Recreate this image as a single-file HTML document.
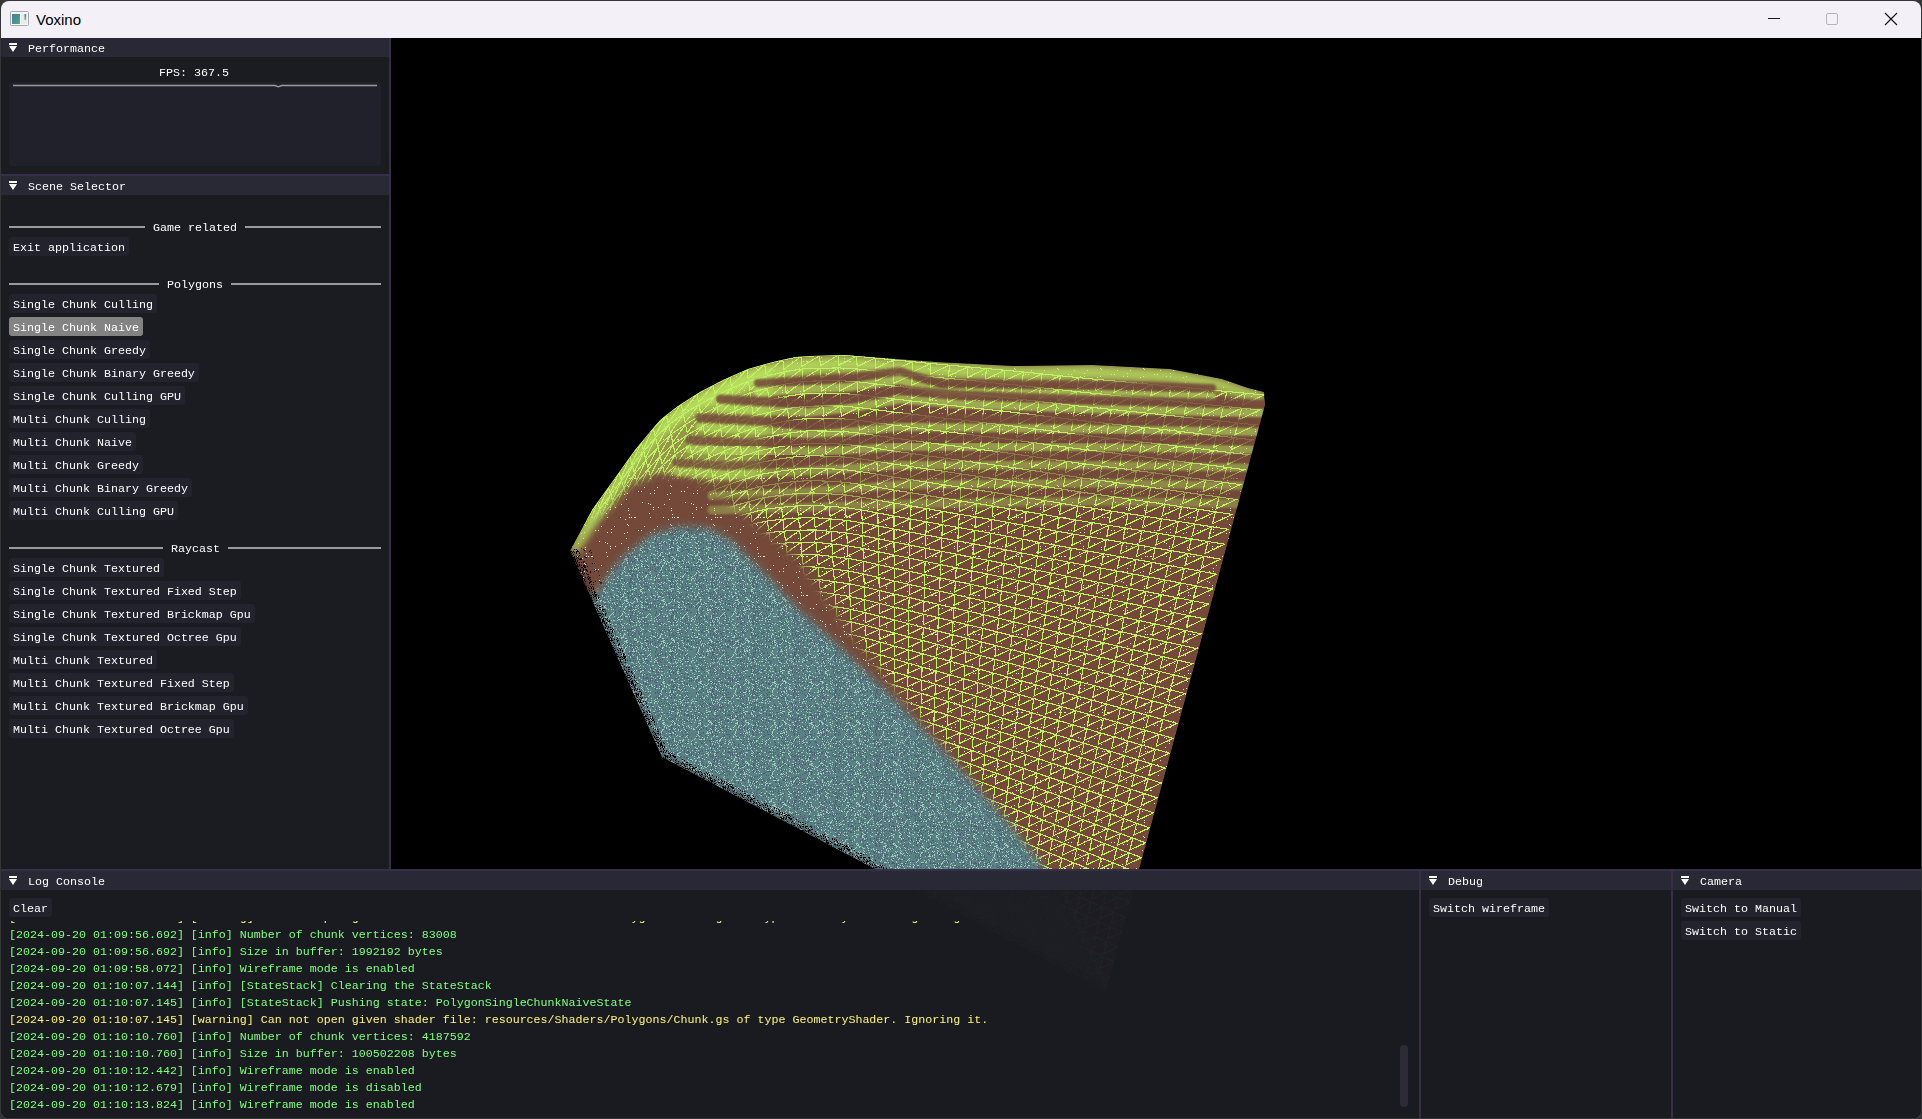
<!DOCTYPE html>
<html><head><meta charset="utf-8"><style>
html,body{margin:0;padding:0;}
body{width:1922px;height:1119px;position:relative;overflow:hidden;background:#353638;font-family:"Liberation Mono",monospace;font-size:11.66px;}
.r{position:absolute;}
.t{position:absolute;white-space:pre;line-height:13px;will-change:transform;}
</style></head><body>
<div class="r" style="left:1px;top:38px;width:1920px;height:1080px;background:#000;border-radius:0 0 8px 8px;overflow:hidden;"></div>
<svg class="r" style="left:0;top:0" width="1922" height="1119" viewBox="0 0 1922 1119">
<defs>
<clipPath id="sil"><polygon points="570.0,551.0 592.0,510.0 610.0,485.0 635.0,450.0 660.0,420.0 678.0,406.0 700.0,392.0 723.0,380.0 748.0,369.0 773.0,362.0 795.0,357.0 811.0,356.0 845.0,355.0 884.0,358.0 936.0,362.0 1014.0,366.0 1092.0,365.0 1170.0,369.0 1222.0,379.0 1248.0,388.0 1264.0,392.0 1265.0,405.0 1106.0,992.0 915.0,890.0 662.0,757.0"/></clipPath>
<filter id="b6" x="-20%" y="-20%" width="140%" height="140%"><feGaussianBlur stdDeviation="7"/></filter>
<filter id="b1" x="-5%" y="-50%" width="110%" height="200%"><feGaussianBlur stdDeviation="1.2"/></filter>
<filter id="b3" x="-20%" y="-20%" width="140%" height="140%"><feGaussianBlur stdDeviation="4"/></filter>
<pattern id="spB" patternUnits="userSpaceOnUse" width="37" height="41"><rect x="20" y="9" width="1" height="1" fill="#a0ccbc"/><rect x="25" y="3" width="1" height="1" fill="#a0ccbc"/><rect x="4" y="34" width="1" height="1" fill="#a0ccbc"/><rect x="6" y="23" width="1" height="1" fill="#a0ccbc"/><rect x="3" y="32" width="1" height="1" fill="#a0ccbc"/><rect x="13" y="2" width="1" height="1" fill="#a0ccbc"/><rect x="5" y="27" width="1" height="1" fill="#a0ccbc"/><rect x="26" y="4" width="1" height="1" fill="#a0ccbc"/><rect x="15" y="5" width="1" height="1" fill="#a0ccbc"/><rect x="35" y="27" width="1" height="1" fill="#a0ccbc"/><rect x="3" y="36" width="1" height="1" fill="#a0ccbc"/><rect x="7" y="14" width="1" height="1" fill="#a0ccbc"/><rect x="3" y="36" width="1" height="1" fill="#a0ccbc"/><rect x="25" y="3" width="1" height="1" fill="#a0ccbc"/><rect x="14" y="2" width="1" height="1" fill="#a0ccbc"/><rect x="35" y="8" width="1" height="1" fill="#a0ccbc"/><rect x="18" y="26" width="1" height="1" fill="#a0ccbc"/><rect x="9" y="34" width="1" height="1" fill="#a0ccbc"/><rect x="7" y="36" width="1" height="1" fill="#a0ccbc"/><rect x="19" y="35" width="1" height="1" fill="#a0ccbc"/><rect x="11" y="6" width="1" height="1" fill="#a0ccbc"/><rect x="36" y="40" width="1" height="1" fill="#a0ccbc"/><rect x="12" y="23" width="1" height="1" fill="#a0ccbc"/><rect x="6" y="35" width="1" height="1" fill="#a0ccbc"/><rect x="4" y="36" width="1" height="1" fill="#a0ccbc"/><rect x="3" y="39" width="1" height="1" fill="#a0ccbc"/><rect x="13" y="31" width="1" height="1" fill="#a0ccbc"/><rect x="34" y="27" width="1" height="1" fill="#a0ccbc"/><rect x="20" y="29" width="1" height="1" fill="#a0ccbc"/><rect x="29" y="23" width="1" height="1" fill="#a0ccbc"/><rect x="19" y="15" width="1" height="1" fill="#a0ccbc"/><rect x="11" y="15" width="1" height="1" fill="#a0ccbc"/><rect x="5" y="36" width="1" height="1" fill="#a0ccbc"/><rect x="19" y="33" width="1" height="1" fill="#a0ccbc"/><rect x="31" y="21" width="1" height="1" fill="#a0ccbc"/><rect x="28" y="18" width="1" height="1" fill="#a0ccbc"/><rect x="4" y="7" width="1" height="1" fill="#a0ccbc"/><rect x="32" y="26" width="1" height="1" fill="#a0ccbc"/><rect x="10" y="21" width="1" height="1" fill="#a0ccbc"/><rect x="9" y="31" width="1" height="1" fill="#a0ccbc"/><rect x="26" y="2" width="1" height="1" fill="#a0ccbc"/><rect x="4" y="35" width="1" height="1" fill="#a0ccbc"/><rect x="36" y="20" width="1" height="1" fill="#a0ccbc"/><rect x="21" y="22" width="1" height="1" fill="#a0ccbc"/><rect x="31" y="37" width="1" height="1" fill="#a0ccbc"/><rect x="29" y="4" width="1" height="1" fill="#a0ccbc"/><rect x="5" y="17" width="1" height="1" fill="#a0ccbc"/><rect x="30" y="4" width="1" height="1" fill="#a0ccbc"/><rect x="3" y="19" width="1" height="1" fill="#a0ccbc"/><rect x="36" y="28" width="1" height="1" fill="#a0ccbc"/><rect x="18" y="24" width="1" height="1" fill="#a0ccbc"/><rect x="22" y="1" width="1" height="1" fill="#a0ccbc"/><rect x="29" y="22" width="1" height="1" fill="#a0ccbc"/><rect x="10" y="39" width="1" height="1" fill="#a0ccbc"/><rect x="7" y="31" width="1" height="1" fill="#a0ccbc"/><rect x="3" y="13" width="1" height="1" fill="#a0ccbc"/><rect x="18" y="8" width="1" height="1" fill="#a0ccbc"/><rect x="15" y="25" width="1" height="1" fill="#a0ccbc"/><rect x="25" y="31" width="1" height="1" fill="#a0ccbc"/><rect x="5" y="10" width="1" height="1" fill="#a0ccbc"/><rect x="28" y="25" width="1" height="1" fill="#a0ccbc"/><rect x="35" y="17" width="1" height="1" fill="#a0ccbc"/><rect x="8" y="27" width="1" height="1" fill="#a0ccbc"/><rect x="35" y="17" width="1" height="1" fill="#a0ccbc"/><rect x="26" y="22" width="1" height="1" fill="#a0ccbc"/><rect x="24" y="14" width="1" height="1" fill="#a0ccbc"/><rect x="9" y="5" width="1" height="1" fill="#a0ccbc"/><rect x="11" y="9" width="1" height="1" fill="#a0ccbc"/><rect x="14" y="14" width="1" height="1" fill="#a0ccbc"/><rect x="0" y="31" width="1" height="1" fill="#a0ccbc"/><rect x="11" y="16" width="1" height="1" fill="#a0ccbc"/><rect x="18" y="0" width="1" height="1" fill="#a0ccbc"/><rect x="9" y="26" width="1" height="1" fill="#a0ccbc"/><rect x="34" y="23" width="1" height="1" fill="#a0ccbc"/><rect x="36" y="20" width="1" height="1" fill="#a0ccbc"/><rect x="8" y="32" width="1" height="1" fill="#a0ccbc"/><rect x="3" y="29" width="1" height="1" fill="#a0ccbc"/><rect x="35" y="25" width="1" height="1" fill="#a0ccbc"/><rect x="25" y="25" width="1" height="1" fill="#a0ccbc"/><rect x="25" y="6" width="1" height="1" fill="#a0ccbc"/><rect x="30" y="40" width="1" height="1" fill="#a0ccbc"/><rect x="25" y="3" width="1" height="1" fill="#a0ccbc"/><rect x="12" y="4" width="1" height="1" fill="#a0ccbc"/><rect x="13" y="28" width="1" height="1" fill="#a0ccbc"/><rect x="10" y="7" width="1" height="1" fill="#a0ccbc"/><rect x="21" y="38" width="1" height="1" fill="#a0ccbc"/><rect x="3" y="6" width="1" height="1" fill="#a0ccbc"/><rect x="0" y="36" width="1" height="1" fill="#a0ccbc"/><rect x="9" y="34" width="1" height="1" fill="#a0ccbc"/><rect x="6" y="23" width="1" height="1" fill="#a0ccbc"/><rect x="1" y="4" width="1" height="1" fill="#a0ccbc"/><rect x="13" y="39" width="1" height="1" fill="#a0ccbc"/><rect x="24" y="9" width="1" height="1" fill="#a0ccbc"/><rect x="16" y="22" width="1" height="1" fill="#a0ccbc"/><rect x="23" y="30" width="1" height="1" fill="#a0ccbc"/><rect x="7" y="7" width="1" height="1" fill="#a0ccbc"/><rect x="31" y="29" width="1" height="1" fill="#a0ccbc"/><rect x="30" y="30" width="1" height="1" fill="#a0ccbc"/><rect x="19" y="5" width="1" height="1" fill="#a0ccbc"/><rect x="9" y="6" width="1" height="1" fill="#a0ccbc"/><rect x="21" y="16" width="1" height="1" fill="#a0ccbc"/><rect x="30" y="10" width="1" height="1" fill="#a0ccbc"/><rect x="33" y="1" width="1" height="1" fill="#a0ccbc"/><rect x="13" y="33" width="1" height="1" fill="#a0ccbc"/><rect x="23" y="9" width="1" height="1" fill="#a0ccbc"/><rect x="34" y="1" width="1" height="1" fill="#a0ccbc"/><rect x="33" y="19" width="1" height="1" fill="#a0ccbc"/><rect x="5" y="16" width="1" height="1" fill="#a0ccbc"/><rect x="33" y="23" width="1" height="1" fill="#a0ccbc"/><rect x="10" y="22" width="1" height="1" fill="#a0ccbc"/><rect x="14" y="34" width="1" height="1" fill="#a0ccbc"/><rect x="34" y="32" width="1" height="1" fill="#a0ccbc"/><rect x="21" y="40" width="1" height="1" fill="#a0ccbc"/><rect x="14" y="39" width="1" height="1" fill="#a0ccbc"/><rect x="12" y="15" width="1" height="1" fill="#a0ccbc"/><rect x="25" y="14" width="1" height="1" fill="#a0ccbc"/><rect x="12" y="33" width="1" height="1" fill="#a0ccbc"/><rect x="31" y="22" width="1" height="1" fill="#a0ccbc"/><rect x="1" y="1" width="1" height="1" fill="#a0ccbc"/><rect x="17" y="30" width="1" height="1" fill="#a0ccbc"/><rect x="16" y="12" width="1" height="1" fill="#a0ccbc"/><rect x="22" y="28" width="1" height="1" fill="#a0ccbc"/><rect x="22" y="23" width="1" height="1" fill="#a0ccbc"/><rect x="5" y="14" width="1" height="1" fill="#a0ccbc"/><rect x="6" y="14" width="1" height="1" fill="#a0ccbc"/><rect x="30" y="12" width="1" height="1" fill="#a0ccbc"/><rect x="21" y="13" width="1" height="1" fill="#a0ccbc"/><rect x="30" y="39" width="1" height="1" fill="#a0ccbc"/><rect x="0" y="30" width="1" height="1" fill="#a0ccbc"/><rect x="22" y="5" width="1" height="1" fill="#a0ccbc"/><rect x="7" y="24" width="1" height="1" fill="#a0ccbc"/><rect x="12" y="30" width="1" height="1" fill="#a0ccbc"/><rect x="11" y="27" width="1" height="1" fill="#a0ccbc"/><rect x="21" y="5" width="1" height="1" fill="#a0ccbc"/><rect x="25" y="29" width="1" height="1" fill="#a0ccbc"/><rect x="25" y="5" width="1" height="1" fill="#a0ccbc"/><rect x="10" y="10" width="1" height="1" fill="#a0ccbc"/><rect x="8" y="1" width="1" height="1" fill="#a0ccbc"/><rect x="9" y="37" width="1" height="1" fill="#a0ccbc"/><rect x="29" y="9" width="1" height="1" fill="#a0ccbc"/><rect x="30" y="22" width="1" height="1" fill="#a0ccbc"/><rect x="9" y="35" width="1" height="1" fill="#a0ccbc"/><rect x="35" y="8" width="1" height="1" fill="#a0ccbc"/><rect x="1" y="0" width="1" height="1" fill="#a0ccbc"/><rect x="6" y="33" width="1" height="1" fill="#a0ccbc"/><rect x="8" y="27" width="1" height="1" fill="#a0ccbc"/><rect x="12" y="13" width="1" height="1" fill="#a0ccbc"/><rect x="1" y="16" width="1" height="1" fill="#a0ccbc"/><rect x="13" y="18" width="1" height="1" fill="#a0ccbc"/><rect x="32" y="15" width="1" height="1" fill="#a0ccbc"/><rect x="20" y="16" width="1" height="1" fill="#a0ccbc"/><rect x="34" y="26" width="1" height="1" fill="#a0ccbc"/><rect x="8" y="3" width="1" height="1" fill="#a0ccbc"/><rect x="22" y="29" width="1" height="1" fill="#a0ccbc"/><rect x="33" y="26" width="1" height="1" fill="#a0ccbc"/><rect x="32" y="8" width="1" height="1" fill="#a0ccbc"/><rect x="34" y="9" width="1" height="1" fill="#a0ccbc"/><rect x="33" y="32" width="1" height="1" fill="#a0ccbc"/><rect x="1" y="28" width="1" height="1" fill="#a0ccbc"/><rect x="11" y="38" width="1" height="1" fill="#a0ccbc"/><rect x="0" y="9" width="1" height="1" fill="#a0ccbc"/><rect x="11" y="9" width="1" height="1" fill="#a0ccbc"/><rect x="30" y="39" width="1" height="1" fill="#a0ccbc"/><rect x="7" y="35" width="1" height="1" fill="#a0ccbc"/><rect x="3" y="20" width="1" height="1" fill="#a0ccbc"/><rect x="33" y="33" width="1" height="1" fill="#a0ccbc"/><rect x="35" y="30" width="1" height="1" fill="#a0ccbc"/><rect x="6" y="35" width="1" height="1" fill="#a0ccbc"/><rect x="3" y="15" width="1" height="1" fill="#a0ccbc"/><rect x="12" y="17" width="1" height="1" fill="#a0ccbc"/><rect x="2" y="6" width="1" height="1" fill="#a0ccbc"/><rect x="32" y="28" width="1" height="1" fill="#a0ccbc"/><rect x="35" y="1" width="1" height="1" fill="#a0ccbc"/><rect x="4" y="28" width="1" height="1" fill="#a0ccbc"/><rect x="20" y="39" width="1" height="1" fill="#a0ccbc"/><rect x="32" y="38" width="1" height="1" fill="#a0ccbc"/><rect x="32" y="12" width="1" height="1" fill="#a0ccbc"/><rect x="17" y="28" width="1" height="1" fill="#a0ccbc"/><rect x="32" y="34" width="1" height="1" fill="#a0ccbc"/><rect x="30" y="32" width="1" height="1" fill="#a0ccbc"/><rect x="15" y="33" width="1" height="1" fill="#a0ccbc"/><rect x="16" y="35" width="1" height="1" fill="#a0ccbc"/><rect x="12" y="28" width="1" height="1" fill="#a0ccbc"/><rect x="8" y="26" width="1" height="1" fill="#a0ccbc"/><rect x="7" y="25" width="1" height="1" fill="#a0ccbc"/><rect x="28" y="20" width="1" height="1" fill="#a0ccbc"/><rect x="4" y="15" width="1" height="1" fill="#a0ccbc"/><rect x="27" y="4" width="1" height="1" fill="#a0ccbc"/><rect x="13" y="19" width="1" height="1" fill="#a0ccbc"/><rect x="7" y="9" width="1" height="1" fill="#a0ccbc"/><rect x="23" y="9" width="1" height="1" fill="#a0ccbc"/><rect x="16" y="8" width="1" height="1" fill="#a0ccbc"/><rect x="29" y="14" width="1" height="1" fill="#a0ccbc"/><rect x="6" y="25" width="1" height="1" fill="#a0ccbc"/><rect x="31" y="10" width="1" height="1" fill="#a0ccbc"/><rect x="14" y="10" width="1" height="1" fill="#a0ccbc"/><rect x="27" y="32" width="1" height="1" fill="#a0ccbc"/><rect x="25" y="21" width="1" height="1" fill="#a0ccbc"/><rect x="26" y="12" width="1" height="1" fill="#a0ccbc"/><rect x="22" y="20" width="1" height="1" fill="#a0ccbc"/><rect x="5" y="23" width="1" height="1" fill="#a0ccbc"/><rect x="1" y="21" width="1" height="1" fill="#a0ccbc"/><rect x="35" y="29" width="1" height="1" fill="#a0ccbc"/><rect x="28" y="1" width="1" height="1" fill="#a0ccbc"/><rect x="24" y="21" width="1" height="1" fill="#a0ccbc"/><rect x="33" y="39" width="1" height="1" fill="#a0ccbc"/><rect x="18" y="32" width="1" height="1" fill="#a0ccbc"/><rect x="4" y="7" width="1" height="1" fill="#a0ccbc"/><rect x="14" y="6" width="1" height="1" fill="#a0ccbc"/><rect x="5" y="16" width="1" height="1" fill="#a0ccbc"/><rect x="17" y="2" width="1" height="1" fill="#a0ccbc"/><rect x="11" y="17" width="1" height="1" fill="#a0ccbc"/><rect x="8" y="27" width="1" height="1" fill="#a0ccbc"/><rect x="16" y="25" width="1" height="1" fill="#a0ccbc"/><rect x="9" y="34" width="1" height="1" fill="#a0ccbc"/><rect x="32" y="36" width="1" height="1" fill="#a0ccbc"/><rect x="31" y="20" width="1" height="1" fill="#a0ccbc"/><rect x="5" y="17" width="1" height="1" fill="#a0ccbc"/><rect x="3" y="11" width="1" height="1" fill="#a0ccbc"/><rect x="27" y="4" width="1" height="1" fill="#a0ccbc"/><rect x="17" y="1" width="1" height="1" fill="#a0ccbc"/><rect x="5" y="16" width="1" height="1" fill="#a0ccbc"/><rect x="5" y="38" width="1" height="1" fill="#a0ccbc"/><rect x="14" y="4" width="1" height="1" fill="#a0ccbc"/><rect x="16" y="7" width="1" height="1" fill="#a0ccbc"/><rect x="29" y="0" width="1" height="1" fill="#a0ccbc"/><rect x="21" y="35" width="1" height="1" fill="#a0ccbc"/><rect x="26" y="17" width="1" height="1" fill="#a0ccbc"/><rect x="8" y="2" width="1" height="1" fill="#a0ccbc"/><rect x="33" y="15" width="1" height="1" fill="#a0ccbc"/><rect x="7" y="10" width="1" height="1" fill="#a0ccbc"/><rect x="16" y="3" width="1" height="1" fill="#a0ccbc"/><rect x="11" y="12" width="1" height="1" fill="#a0ccbc"/><rect x="19" y="40" width="1" height="1" fill="#a0ccbc"/><rect x="19" y="33" width="1" height="1" fill="#a0ccbc"/><rect x="13" y="18" width="1" height="1" fill="#a0ccbc"/><rect x="28" y="32" width="1" height="1" fill="#a0ccbc"/><rect x="11" y="17" width="1" height="1" fill="#a0ccbc"/><rect x="22" y="1" width="1" height="1" fill="#a0ccbc"/><rect x="16" y="2" width="1" height="1" fill="#a0ccbc"/><rect x="0" y="1" width="1" height="1" fill="#a0ccbc"/><rect x="32" y="35" width="1" height="1" fill="#a0ccbc"/><rect x="12" y="32" width="1" height="1" fill="#a0ccbc"/><rect x="30" y="15" width="1" height="1" fill="#a0ccbc"/><rect x="28" y="6" width="1" height="1" fill="#a0ccbc"/><rect x="27" y="31" width="1" height="1" fill="#a0ccbc"/><rect x="34" y="25" width="1" height="1" fill="#a0ccbc"/><rect x="32" y="19" width="1" height="1" fill="#a0ccbc"/><rect x="13" y="14" width="1" height="1" fill="#a0ccbc"/><rect x="21" y="12" width="1" height="1" fill="#a0ccbc"/><rect x="8" y="25" width="1" height="1" fill="#a0ccbc"/><rect x="22" y="3" width="1" height="1" fill="#a0ccbc"/><rect x="8" y="0" width="1" height="1" fill="#a0ccbc"/><rect x="4" y="40" width="1" height="1" fill="#a0ccbc"/><rect x="16" y="27" width="1" height="1" fill="#a0ccbc"/><rect x="10" y="3" width="1" height="1" fill="#a0ccbc"/><rect x="5" y="24" width="1" height="1" fill="#a0ccbc"/><rect x="32" y="18" width="1" height="1" fill="#a0ccbc"/><rect x="15" y="18" width="1" height="1" fill="#a0ccbc"/><rect x="2" y="29" width="1" height="1" fill="#a0ccbc"/></pattern>
<pattern id="spB2" patternUnits="userSpaceOnUse" width="41" height="37"><rect x="11" y="10" width="1" height="1" fill="#4e5c74"/><rect x="17" y="28" width="1" height="1" fill="#4e5c74"/><rect x="0" y="16" width="1" height="1" fill="#4e5c74"/><rect x="23" y="21" width="1" height="1" fill="#4e5c74"/><rect x="35" y="20" width="1" height="1" fill="#4e5c74"/><rect x="15" y="2" width="1" height="1" fill="#4e5c74"/><rect x="19" y="13" width="1" height="1" fill="#4e5c74"/><rect x="22" y="11" width="1" height="1" fill="#4e5c74"/><rect x="0" y="21" width="1" height="1" fill="#4e5c74"/><rect x="24" y="5" width="1" height="1" fill="#4e5c74"/><rect x="30" y="17" width="1" height="1" fill="#4e5c74"/><rect x="32" y="12" width="1" height="1" fill="#4e5c74"/><rect x="15" y="32" width="1" height="1" fill="#4e5c74"/><rect x="0" y="5" width="1" height="1" fill="#4e5c74"/><rect x="16" y="5" width="1" height="1" fill="#4e5c74"/><rect x="9" y="25" width="1" height="1" fill="#4e5c74"/><rect x="37" y="2" width="1" height="1" fill="#4e5c74"/><rect x="25" y="1" width="1" height="1" fill="#4e5c74"/><rect x="19" y="19" width="1" height="1" fill="#4e5c74"/><rect x="40" y="14" width="1" height="1" fill="#4e5c74"/><rect x="5" y="33" width="1" height="1" fill="#4e5c74"/><rect x="9" y="24" width="1" height="1" fill="#4e5c74"/><rect x="20" y="31" width="1" height="1" fill="#4e5c74"/><rect x="9" y="18" width="1" height="1" fill="#4e5c74"/><rect x="39" y="9" width="1" height="1" fill="#4e5c74"/><rect x="2" y="32" width="1" height="1" fill="#4e5c74"/><rect x="40" y="27" width="1" height="1" fill="#4e5c74"/><rect x="32" y="8" width="1" height="1" fill="#4e5c74"/><rect x="33" y="32" width="1" height="1" fill="#4e5c74"/><rect x="36" y="1" width="1" height="1" fill="#4e5c74"/><rect x="37" y="14" width="1" height="1" fill="#4e5c74"/><rect x="5" y="1" width="1" height="1" fill="#4e5c74"/><rect x="2" y="8" width="1" height="1" fill="#4e5c74"/><rect x="40" y="23" width="1" height="1" fill="#4e5c74"/><rect x="6" y="24" width="1" height="1" fill="#4e5c74"/><rect x="28" y="35" width="1" height="1" fill="#4e5c74"/><rect x="3" y="1" width="1" height="1" fill="#4e5c74"/><rect x="40" y="34" width="1" height="1" fill="#4e5c74"/><rect x="15" y="31" width="1" height="1" fill="#4e5c74"/><rect x="16" y="0" width="1" height="1" fill="#4e5c74"/><rect x="29" y="4" width="1" height="1" fill="#4e5c74"/><rect x="32" y="34" width="1" height="1" fill="#4e5c74"/><rect x="5" y="33" width="1" height="1" fill="#4e5c74"/><rect x="4" y="30" width="1" height="1" fill="#4e5c74"/><rect x="16" y="4" width="1" height="1" fill="#4e5c74"/><rect x="16" y="15" width="1" height="1" fill="#4e5c74"/><rect x="13" y="14" width="1" height="1" fill="#4e5c74"/><rect x="29" y="31" width="1" height="1" fill="#4e5c74"/><rect x="24" y="4" width="1" height="1" fill="#4e5c74"/><rect x="30" y="18" width="1" height="1" fill="#4e5c74"/><rect x="2" y="12" width="1" height="1" fill="#4e5c74"/><rect x="4" y="9" width="1" height="1" fill="#4e5c74"/><rect x="21" y="16" width="1" height="1" fill="#4e5c74"/><rect x="19" y="36" width="1" height="1" fill="#4e5c74"/><rect x="8" y="0" width="1" height="1" fill="#4e5c74"/><rect x="30" y="3" width="1" height="1" fill="#4e5c74"/><rect x="31" y="17" width="1" height="1" fill="#4e5c74"/><rect x="6" y="13" width="1" height="1" fill="#4e5c74"/><rect x="31" y="18" width="1" height="1" fill="#4e5c74"/><rect x="33" y="18" width="1" height="1" fill="#4e5c74"/><rect x="29" y="29" width="1" height="1" fill="#4e5c74"/><rect x="29" y="7" width="1" height="1" fill="#4e5c74"/><rect x="35" y="12" width="1" height="1" fill="#4e5c74"/><rect x="19" y="5" width="1" height="1" fill="#4e5c74"/><rect x="30" y="1" width="1" height="1" fill="#4e5c74"/><rect x="18" y="29" width="1" height="1" fill="#4e5c74"/><rect x="4" y="32" width="1" height="1" fill="#4e5c74"/><rect x="28" y="17" width="1" height="1" fill="#4e5c74"/><rect x="24" y="13" width="1" height="1" fill="#4e5c74"/><rect x="13" y="4" width="1" height="1" fill="#4e5c74"/><rect x="37" y="5" width="1" height="1" fill="#4e5c74"/><rect x="9" y="33" width="1" height="1" fill="#4e5c74"/><rect x="16" y="23" width="1" height="1" fill="#4e5c74"/><rect x="8" y="32" width="1" height="1" fill="#4e5c74"/><rect x="17" y="7" width="1" height="1" fill="#4e5c74"/><rect x="23" y="14" width="1" height="1" fill="#4e5c74"/><rect x="31" y="31" width="1" height="1" fill="#4e5c74"/><rect x="25" y="1" width="1" height="1" fill="#4e5c74"/><rect x="10" y="0" width="1" height="1" fill="#4e5c74"/><rect x="31" y="28" width="1" height="1" fill="#4e5c74"/><rect x="25" y="19" width="1" height="1" fill="#4e5c74"/><rect x="9" y="26" width="1" height="1" fill="#4e5c74"/><rect x="22" y="24" width="1" height="1" fill="#4e5c74"/><rect x="20" y="7" width="1" height="1" fill="#4e5c74"/><rect x="21" y="0" width="1" height="1" fill="#4e5c74"/><rect x="20" y="21" width="1" height="1" fill="#4e5c74"/><rect x="25" y="7" width="1" height="1" fill="#4e5c74"/><rect x="12" y="0" width="1" height="1" fill="#4e5c74"/><rect x="18" y="16" width="1" height="1" fill="#4e5c74"/><rect x="23" y="4" width="1" height="1" fill="#4e5c74"/><rect x="25" y="24" width="1" height="1" fill="#4e5c74"/><rect x="37" y="4" width="1" height="1" fill="#4e5c74"/><rect x="23" y="27" width="1" height="1" fill="#4e5c74"/><rect x="17" y="3" width="1" height="1" fill="#4e5c74"/><rect x="17" y="6" width="1" height="1" fill="#4e5c74"/><rect x="3" y="18" width="1" height="1" fill="#4e5c74"/><rect x="40" y="9" width="1" height="1" fill="#4e5c74"/><rect x="15" y="17" width="1" height="1" fill="#4e5c74"/><rect x="27" y="32" width="1" height="1" fill="#4e5c74"/><rect x="20" y="12" width="1" height="1" fill="#4e5c74"/><rect x="23" y="27" width="1" height="1" fill="#4e5c74"/><rect x="1" y="25" width="1" height="1" fill="#4e5c74"/><rect x="35" y="35" width="1" height="1" fill="#4e5c74"/><rect x="13" y="5" width="1" height="1" fill="#4e5c74"/><rect x="3" y="26" width="1" height="1" fill="#4e5c74"/><rect x="28" y="8" width="1" height="1" fill="#4e5c74"/><rect x="18" y="31" width="1" height="1" fill="#4e5c74"/><rect x="3" y="35" width="1" height="1" fill="#4e5c74"/><rect x="8" y="10" width="1" height="1" fill="#4e5c74"/><rect x="30" y="26" width="1" height="1" fill="#4e5c74"/><rect x="21" y="18" width="1" height="1" fill="#4e5c74"/><rect x="19" y="16" width="1" height="1" fill="#4e5c74"/><rect x="16" y="25" width="1" height="1" fill="#4e5c74"/><rect x="15" y="19" width="1" height="1" fill="#4e5c74"/><rect x="30" y="35" width="1" height="1" fill="#4e5c74"/><rect x="25" y="7" width="1" height="1" fill="#4e5c74"/><rect x="10" y="10" width="1" height="1" fill="#4e5c74"/><rect x="4" y="13" width="1" height="1" fill="#4e5c74"/><rect x="32" y="31" width="1" height="1" fill="#4e5c74"/><rect x="35" y="14" width="1" height="1" fill="#4e5c74"/><rect x="28" y="21" width="1" height="1" fill="#4e5c74"/><rect x="28" y="27" width="1" height="1" fill="#4e5c74"/><rect x="8" y="35" width="1" height="1" fill="#4e5c74"/><rect x="12" y="15" width="1" height="1" fill="#4e5c74"/><rect x="5" y="11" width="1" height="1" fill="#4e5c74"/><rect x="21" y="35" width="1" height="1" fill="#4e5c74"/><rect x="5" y="20" width="1" height="1" fill="#4e5c74"/><rect x="15" y="23" width="1" height="1" fill="#4e5c74"/><rect x="16" y="36" width="1" height="1" fill="#4e5c74"/><rect x="12" y="1" width="1" height="1" fill="#4e5c74"/><rect x="26" y="24" width="1" height="1" fill="#4e5c74"/><rect x="26" y="33" width="1" height="1" fill="#4e5c74"/><rect x="13" y="24" width="1" height="1" fill="#4e5c74"/><rect x="17" y="21" width="1" height="1" fill="#4e5c74"/><rect x="3" y="31" width="1" height="1" fill="#4e5c74"/><rect x="17" y="36" width="1" height="1" fill="#4e5c74"/><rect x="23" y="8" width="1" height="1" fill="#4e5c74"/><rect x="32" y="33" width="1" height="1" fill="#4e5c74"/><rect x="40" y="13" width="1" height="1" fill="#4e5c74"/><rect x="5" y="17" width="1" height="1" fill="#4e5c74"/><rect x="15" y="24" width="1" height="1" fill="#4e5c74"/><rect x="25" y="28" width="1" height="1" fill="#4e5c74"/><rect x="27" y="19" width="1" height="1" fill="#4e5c74"/><rect x="1" y="8" width="1" height="1" fill="#4e5c74"/><rect x="2" y="27" width="1" height="1" fill="#4e5c74"/><rect x="30" y="31" width="1" height="1" fill="#4e5c74"/><rect x="0" y="4" width="1" height="1" fill="#4e5c74"/><rect x="25" y="33" width="1" height="1" fill="#4e5c74"/><rect x="29" y="28" width="1" height="1" fill="#4e5c74"/><rect x="15" y="6" width="1" height="1" fill="#4e5c74"/><rect x="14" y="9" width="1" height="1" fill="#4e5c74"/><rect x="9" y="33" width="1" height="1" fill="#4e5c74"/><rect x="6" y="29" width="1" height="1" fill="#4e5c74"/><rect x="5" y="35" width="1" height="1" fill="#4e5c74"/><rect x="2" y="0" width="1" height="1" fill="#4e5c74"/><rect x="8" y="14" width="1" height="1" fill="#4e5c74"/><rect x="36" y="2" width="1" height="1" fill="#4e5c74"/><rect x="19" y="8" width="1" height="1" fill="#4e5c74"/><rect x="40" y="16" width="1" height="1" fill="#4e5c74"/><rect x="33" y="27" width="1" height="1" fill="#4e5c74"/><rect x="7" y="6" width="1" height="1" fill="#4e5c74"/><rect x="4" y="19" width="1" height="1" fill="#4e5c74"/><rect x="33" y="12" width="1" height="1" fill="#4e5c74"/><rect x="24" y="16" width="1" height="1" fill="#4e5c74"/><rect x="14" y="0" width="1" height="1" fill="#4e5c74"/><rect x="0" y="34" width="1" height="1" fill="#4e5c74"/><rect x="19" y="29" width="1" height="1" fill="#4e5c74"/><rect x="17" y="20" width="1" height="1" fill="#4e5c74"/><rect x="15" y="30" width="1" height="1" fill="#4e5c74"/><rect x="33" y="15" width="1" height="1" fill="#4e5c74"/><rect x="35" y="15" width="1" height="1" fill="#4e5c74"/><rect x="1" y="26" width="1" height="1" fill="#4e5c74"/><rect x="19" y="3" width="1" height="1" fill="#4e5c74"/><rect x="1" y="12" width="1" height="1" fill="#4e5c74"/><rect x="31" y="26" width="1" height="1" fill="#4e5c74"/><rect x="5" y="16" width="1" height="1" fill="#4e5c74"/><rect x="14" y="27" width="1" height="1" fill="#4e5c74"/><rect x="23" y="14" width="1" height="1" fill="#4e5c74"/><rect x="31" y="2" width="1" height="1" fill="#4e5c74"/><rect x="21" y="26" width="1" height="1" fill="#4e5c74"/><rect x="23" y="25" width="1" height="1" fill="#4e5c74"/><rect x="12" y="0" width="1" height="1" fill="#4e5c74"/><rect x="18" y="32" width="1" height="1" fill="#4e5c74"/><rect x="4" y="13" width="1" height="1" fill="#4e5c74"/><rect x="31" y="12" width="1" height="1" fill="#4e5c74"/><rect x="19" y="12" width="1" height="1" fill="#4e5c74"/><rect x="14" y="29" width="1" height="1" fill="#4e5c74"/><rect x="14" y="16" width="1" height="1" fill="#4e5c74"/><rect x="18" y="6" width="1" height="1" fill="#4e5c74"/><rect x="39" y="31" width="1" height="1" fill="#4e5c74"/><rect x="39" y="11" width="1" height="1" fill="#4e5c74"/><rect x="14" y="31" width="1" height="1" fill="#4e5c74"/><rect x="26" y="3" width="1" height="1" fill="#4e5c74"/><rect x="38" y="9" width="1" height="1" fill="#4e5c74"/><rect x="25" y="3" width="1" height="1" fill="#4e5c74"/><rect x="13" y="1" width="1" height="1" fill="#4e5c74"/><rect x="38" y="9" width="1" height="1" fill="#4e5c74"/><rect x="26" y="3" width="1" height="1" fill="#4e5c74"/><rect x="3" y="11" width="1" height="1" fill="#4e5c74"/><rect x="25" y="28" width="1" height="1" fill="#4e5c74"/><rect x="20" y="7" width="1" height="1" fill="#4e5c74"/><rect x="5" y="10" width="1" height="1" fill="#4e5c74"/><rect x="21" y="12" width="1" height="1" fill="#4e5c74"/><rect x="11" y="33" width="1" height="1" fill="#4e5c74"/><rect x="29" y="2" width="1" height="1" fill="#4e5c74"/><rect x="19" y="24" width="1" height="1" fill="#4e5c74"/><rect x="23" y="21" width="1" height="1" fill="#4e5c74"/><rect x="28" y="10" width="1" height="1" fill="#4e5c74"/><rect x="6" y="0" width="1" height="1" fill="#4e5c74"/><rect x="5" y="17" width="1" height="1" fill="#4e5c74"/><rect x="5" y="22" width="1" height="1" fill="#4e5c74"/><rect x="26" y="7" width="1" height="1" fill="#4e5c74"/><rect x="35" y="13" width="1" height="1" fill="#4e5c74"/><rect x="24" y="22" width="1" height="1" fill="#4e5c74"/><rect x="19" y="27" width="1" height="1" fill="#4e5c74"/><rect x="5" y="3" width="1" height="1" fill="#4e5c74"/><rect x="30" y="12" width="1" height="1" fill="#4e5c74"/><rect x="23" y="34" width="1" height="1" fill="#4e5c74"/><rect x="28" y="12" width="1" height="1" fill="#4e5c74"/><rect x="20" y="23" width="1" height="1" fill="#4e5c74"/><rect x="30" y="1" width="1" height="1" fill="#4e5c74"/><rect x="40" y="26" width="1" height="1" fill="#4e5c74"/><rect x="15" y="25" width="1" height="1" fill="#4e5c74"/><rect x="2" y="24" width="1" height="1" fill="#4e5c74"/><rect x="2" y="29" width="1" height="1" fill="#4e5c74"/><rect x="4" y="3" width="1" height="1" fill="#4e5c74"/><rect x="16" y="12" width="1" height="1" fill="#4e5c74"/><rect x="4" y="21" width="1" height="1" fill="#4e5c74"/><rect x="23" y="17" width="1" height="1" fill="#4e5c74"/><rect x="21" y="2" width="1" height="1" fill="#4e5c74"/><rect x="16" y="20" width="1" height="1" fill="#4e5c74"/><rect x="17" y="19" width="1" height="1" fill="#4e5c74"/><rect x="0" y="4" width="1" height="1" fill="#4e5c74"/><rect x="1" y="14" width="1" height="1" fill="#4e5c74"/><rect x="6" y="30" width="1" height="1" fill="#4e5c74"/><rect x="29" y="24" width="1" height="1" fill="#4e5c74"/><rect x="16" y="27" width="1" height="1" fill="#4e5c74"/><rect x="31" y="8" width="1" height="1" fill="#4e5c74"/><rect x="31" y="11" width="1" height="1" fill="#4e5c74"/><rect x="0" y="19" width="1" height="1" fill="#4e5c74"/><rect x="9" y="15" width="1" height="1" fill="#4e5c74"/><rect x="20" y="20" width="1" height="1" fill="#4e5c74"/><rect x="29" y="23" width="1" height="1" fill="#4e5c74"/><rect x="38" y="5" width="1" height="1" fill="#4e5c74"/><rect x="32" y="12" width="1" height="1" fill="#4e5c74"/><rect x="25" y="10" width="1" height="1" fill="#4e5c74"/><rect x="15" y="26" width="1" height="1" fill="#4e5c74"/><rect x="4" y="2" width="1" height="1" fill="#4e5c74"/><rect x="30" y="35" width="1" height="1" fill="#4e5c74"/><rect x="34" y="20" width="1" height="1" fill="#4e5c74"/><rect x="10" y="27" width="1" height="1" fill="#4e5c74"/><rect x="6" y="4" width="1" height="1" fill="#4e5c74"/><rect x="16" y="5" width="1" height="1" fill="#4e5c74"/><rect x="13" y="6" width="1" height="1" fill="#4e5c74"/><rect x="26" y="31" width="1" height="1" fill="#4e5c74"/><rect x="28" y="11" width="1" height="1" fill="#4e5c74"/><rect x="14" y="8" width="1" height="1" fill="#4e5c74"/><rect x="26" y="29" width="1" height="1" fill="#4e5c74"/><rect x="39" y="15" width="1" height="1" fill="#4e5c74"/><rect x="34" y="7" width="1" height="1" fill="#4e5c74"/><rect x="18" y="18" width="1" height="1" fill="#4e5c74"/><rect x="17" y="36" width="1" height="1" fill="#4e5c74"/><rect x="17" y="23" width="1" height="1" fill="#4e5c74"/><rect x="16" y="16" width="1" height="1" fill="#4e5c74"/><rect x="12" y="28" width="1" height="1" fill="#4e5c74"/><rect x="15" y="11" width="1" height="1" fill="#4e5c74"/><rect x="15" y="15" width="1" height="1" fill="#4e5c74"/><rect x="9" y="18" width="1" height="1" fill="#4e5c74"/><rect x="37" y="12" width="1" height="1" fill="#4e5c74"/><rect x="20" y="4" width="1" height="1" fill="#4e5c74"/><rect x="25" y="16" width="1" height="1" fill="#4e5c74"/><rect x="15" y="32" width="1" height="1" fill="#4e5c74"/><rect x="33" y="14" width="1" height="1" fill="#4e5c74"/><rect x="6" y="29" width="1" height="1" fill="#4e5c74"/><rect x="2" y="6" width="1" height="1" fill="#4e5c74"/><rect x="0" y="30" width="1" height="1" fill="#4e5c74"/><rect x="14" y="28" width="1" height="1" fill="#4e5c74"/><rect x="23" y="2" width="1" height="1" fill="#4e5c74"/><rect x="18" y="14" width="1" height="1" fill="#4e5c74"/><rect x="7" y="3" width="1" height="1" fill="#4e5c74"/><rect x="12" y="12" width="1" height="1" fill="#4e5c74"/><rect x="4" y="23" width="1" height="1" fill="#4e5c74"/><rect x="32" y="11" width="1" height="1" fill="#4e5c74"/><rect x="28" y="16" width="1" height="1" fill="#4e5c74"/><rect x="0" y="6" width="1" height="1" fill="#4e5c74"/><rect x="40" y="22" width="1" height="1" fill="#4e5c74"/><rect x="13" y="2" width="1" height="1" fill="#4e5c74"/><rect x="23" y="21" width="1" height="1" fill="#4e5c74"/><rect x="9" y="2" width="1" height="1" fill="#4e5c74"/><rect x="13" y="16" width="1" height="1" fill="#4e5c74"/><rect x="2" y="13" width="1" height="1" fill="#4e5c74"/><rect x="0" y="20" width="1" height="1" fill="#4e5c74"/><rect x="26" y="23" width="1" height="1" fill="#4e5c74"/><rect x="11" y="19" width="1" height="1" fill="#4e5c74"/><rect x="4" y="13" width="1" height="1" fill="#4e5c74"/><rect x="2" y="31" width="1" height="1" fill="#4e5c74"/><rect x="35" y="30" width="1" height="1" fill="#4e5c74"/><rect x="4" y="26" width="1" height="1" fill="#4e5c74"/><rect x="6" y="25" width="1" height="1" fill="#4e5c74"/><rect x="35" y="9" width="1" height="1" fill="#4e5c74"/></pattern>
<pattern id="spL" patternUnits="userSpaceOnUse" width="43" height="39"><rect x="40" y="34" width="1" height="1" fill="#efe4cc"/><rect x="5" y="10" width="1" height="1" fill="#efe4cc"/><rect x="25" y="17" width="1" height="1" fill="#efe4cc"/><rect x="26" y="18" width="1" height="1" fill="#efe4cc"/><rect x="42" y="19" width="1" height="1" fill="#efe4cc"/><rect x="26" y="3" width="1" height="1" fill="#efe4cc"/><rect x="19" y="36" width="1" height="1" fill="#efe4cc"/><rect x="22" y="26" width="1" height="1" fill="#efe4cc"/><rect x="26" y="1" width="1" height="1" fill="#efe4cc"/><rect x="23" y="12" width="1" height="1" fill="#efe4cc"/><rect x="25" y="25" width="1" height="1" fill="#efe4cc"/><rect x="13" y="0" width="1" height="1" fill="#efe4cc"/><rect x="27" y="10" width="1" height="1" fill="#efe4cc"/><rect x="27" y="7" width="1" height="1" fill="#efe4cc"/><rect x="5" y="25" width="1" height="1" fill="#efe4cc"/><rect x="36" y="23" width="1" height="1" fill="#efe4cc"/><rect x="29" y="10" width="1" height="1" fill="#efe4cc"/><rect x="8" y="0" width="1" height="1" fill="#efe4cc"/><rect x="3" y="35" width="1" height="1" fill="#efe4cc"/><rect x="9" y="25" width="1" height="1" fill="#efe4cc"/><rect x="5" y="36" width="1" height="1" fill="#efe4cc"/><rect x="39" y="23" width="1" height="1" fill="#efe4cc"/><rect x="32" y="10" width="1" height="1" fill="#efe4cc"/><rect x="9" y="22" width="1" height="1" fill="#efe4cc"/><rect x="18" y="10" width="1" height="1" fill="#efe4cc"/><rect x="33" y="10" width="1" height="1" fill="#efe4cc"/><rect x="4" y="6" width="1" height="1" fill="#efe4cc"/><rect x="24" y="31" width="1" height="1" fill="#efe4cc"/><rect x="12" y="19" width="1" height="1" fill="#efe4cc"/><rect x="8" y="2" width="1" height="1" fill="#efe4cc"/></pattern>
<pattern id="spD" patternUnits="userSpaceOnUse" width="31" height="29"><rect x="29" y="15" width="1" height="1" fill="#0c0a10"/><rect x="10" y="1" width="1" height="1" fill="#0c0a10"/><rect x="19" y="20" width="1" height="1" fill="#0c0a10"/><rect x="12" y="2" width="1" height="1" fill="#0c0a10"/><rect x="28" y="22" width="1" height="1" fill="#0c0a10"/><rect x="19" y="22" width="1" height="1" fill="#0c0a10"/><rect x="26" y="28" width="1" height="1" fill="#0c0a10"/><rect x="5" y="20" width="1" height="1" fill="#0c0a10"/><rect x="25" y="27" width="1" height="1" fill="#0c0a10"/><rect x="7" y="19" width="1" height="1" fill="#0c0a10"/><rect x="12" y="19" width="1" height="1" fill="#0c0a10"/><rect x="27" y="6" width="1" height="1" fill="#0c0a10"/><rect x="26" y="15" width="1" height="1" fill="#0c0a10"/><rect x="5" y="18" width="1" height="1" fill="#0c0a10"/><rect x="6" y="1" width="1" height="1" fill="#0c0a10"/><rect x="12" y="16" width="1" height="1" fill="#0c0a10"/><rect x="5" y="12" width="1" height="1" fill="#0c0a10"/><rect x="11" y="3" width="1" height="1" fill="#0c0a10"/><rect x="4" y="7" width="1" height="1" fill="#0c0a10"/><rect x="23" y="26" width="1" height="1" fill="#0c0a10"/><rect x="28" y="6" width="1" height="1" fill="#0c0a10"/><rect x="1" y="28" width="1" height="1" fill="#0c0a10"/><rect x="17" y="26" width="1" height="1" fill="#0c0a10"/><rect x="24" y="21" width="1" height="1" fill="#0c0a10"/><rect x="1" y="21" width="1" height="1" fill="#0c0a10"/><rect x="26" y="10" width="1" height="1" fill="#0c0a10"/><rect x="3" y="12" width="1" height="1" fill="#0c0a10"/><rect x="19" y="14" width="1" height="1" fill="#0c0a10"/><rect x="17" y="27" width="1" height="1" fill="#0c0a10"/><rect x="20" y="24" width="1" height="1" fill="#0c0a10"/><rect x="9" y="20" width="1" height="1" fill="#0c0a10"/><rect x="13" y="9" width="1" height="1" fill="#0c0a10"/><rect x="18" y="7" width="1" height="1" fill="#0c0a10"/><rect x="13" y="12" width="1" height="1" fill="#0c0a10"/><rect x="21" y="11" width="1" height="1" fill="#0c0a10"/><rect x="14" y="16" width="1" height="1" fill="#0c0a10"/><rect x="14" y="5" width="1" height="1" fill="#0c0a10"/><rect x="0" y="0" width="1" height="1" fill="#0c0a10"/><rect x="19" y="15" width="1" height="1" fill="#0c0a10"/><rect x="14" y="7" width="1" height="1" fill="#0c0a10"/><rect x="14" y="24" width="1" height="1" fill="#0c0a10"/><rect x="19" y="24" width="1" height="1" fill="#0c0a10"/><rect x="26" y="14" width="1" height="1" fill="#0c0a10"/><rect x="26" y="5" width="1" height="1" fill="#0c0a10"/><rect x="25" y="15" width="1" height="1" fill="#0c0a10"/><rect x="12" y="3" width="1" height="1" fill="#0c0a10"/><rect x="2" y="4" width="1" height="1" fill="#0c0a10"/><rect x="11" y="13" width="1" height="1" fill="#0c0a10"/><rect x="11" y="2" width="1" height="1" fill="#0c0a10"/><rect x="25" y="14" width="1" height="1" fill="#0c0a10"/><rect x="16" y="16" width="1" height="1" fill="#0c0a10"/><rect x="21" y="1" width="1" height="1" fill="#0c0a10"/><rect x="1" y="20" width="1" height="1" fill="#0c0a10"/><rect x="4" y="2" width="1" height="1" fill="#0c0a10"/><rect x="29" y="23" width="1" height="1" fill="#0c0a10"/><rect x="10" y="24" width="1" height="1" fill="#0c0a10"/><rect x="23" y="16" width="1" height="1" fill="#0c0a10"/><rect x="2" y="1" width="1" height="1" fill="#0c0a10"/><rect x="24" y="16" width="1" height="1" fill="#0c0a10"/><rect x="28" y="12" width="1" height="1" fill="#0c0a10"/></pattern>
<mask id="mm" maskUnits="userSpaceOnUse" x="0" y="0" width="1922" height="1119"><polygon points="560.0,548.0 585.0,520.0 603.0,513.0 631.0,483.0 657.0,474.0 689.0,477.0 715.0,490.0 738.0,510.0 760.0,526.0 800.0,560.0 860.0,645.0 909.0,705.0 958.0,765.0 1007.0,825.0 1045.0,880.0 1090.0,990.0 1290.0,990.0 1290.0,300.0 560.0,300.0" fill="#fff" filter="url(#b3)"/></mask>
<mask id="mb" maskUnits="userSpaceOnUse" x="0" y="0" width="1922" height="1119"><polygon points="560.0,610.0 596.0,594.0 610.0,572.0 624.0,556.0 650.0,535.0 680.0,526.0 710.0,528.0 732.0,541.0 760.0,568.0 800.0,610.0 846.0,652.0 894.0,698.0 945.0,752.0 994.0,806.0 1040.0,862.0 1068.0,915.0 1106.0,1000.0 560.0,1000.0" fill="#fff" filter="url(#b3)"/></mask>
</defs>
<g clip-path="url(#sil)">
<polygon points="570.0,551.0 592.0,510.0 610.0,485.0 635.0,450.0 660.0,420.0 678.0,406.0 700.0,392.0 723.0,380.0 748.0,369.0 773.0,362.0 795.0,357.0 811.0,356.0 845.0,355.0 884.0,358.0 936.0,362.0 1014.0,366.0 1092.0,365.0 1170.0,369.0 1222.0,379.0 1248.0,388.0 1264.0,392.0 1265.0,405.0 1106.0,992.0 915.0,890.0 662.0,757.0" fill="#74493a"/>
<polygon points="570,551 590,545 640,700 662,757 640,760" fill="url(#spD)"/>
<polygon points="570.0,551.0 592.0,510.0 610.0,485.0 635.0,450.0 660.0,420.0 678.0,406.0 700.0,392.0 723.0,380.0 748.0,369.0 773.0,362.0 795.0,357.0 811.0,356.0 845.0,355.0 884.0,358.0 936.0,362.0 1014.0,366.0 1092.0,365.0 1170.0,369.0 1222.0,379.0 1248.0,388.0 1264.0,392.0 1265.0,405.0 1106.0,992.0 915.0,890.0 662.0,757.0" fill="url(#spL)"/>
<g mask="url(#mm)">
<path d="M593.0 602.5L602.2 591.6L594.8 606.6ZM602.2 591.6L611.5 580.7L604.1 596.2ZM611.5 580.7L621.5 570.3L613.4 585.7ZM621.5 570.3L632.3 560.4L623.4 575.7ZM632.3 560.4L643.0 550.4L634.2 566.2ZM643.0 550.4L653.8 540.5L644.9 556.7ZM653.8 540.5L665.0 530.9L655.7 547.2ZM665.0 530.9L676.5 521.6L666.9 538.0ZM676.5 521.6L689.0 513.2L678.4 529.0ZM689.0 513.2L702.8 506.2L690.8 521.0ZM702.8 506.2L717.2 500.1L704.5 514.4ZM717.2 500.1L732.1 494.9L718.8 508.6ZM732.1 494.9L747.3 490.2L733.6 503.7ZM747.3 490.2L762.7 485.9L748.7 499.2ZM762.7 485.9L778.7 483.5L763.9 495.3ZM778.7 483.5L794.9 481.5L779.8 493.0ZM794.9 481.5L811.2 480.5L795.8 491.2ZM811.2 480.5L827.8 481.2L812.0 490.4ZM827.8 481.2L844.4 482.2L828.4 491.3ZM844.4 482.2L860.9 484.4L844.9 492.4ZM860.9 484.4L877.4 487.2L861.3 494.6ZM877.4 487.2L894.0 490.0L877.6 497.5ZM894.0 490.0L910.5 492.7L894.0 500.4ZM910.5 492.7L927.0 495.4L910.3 503.2ZM927.0 495.4L943.5 498.1L926.7 506.0ZM943.5 498.1L960.1 500.8L943.1 508.7ZM960.1 500.8L976.6 503.4L959.5 511.5ZM976.6 503.4L993.1 506.1L975.8 514.2ZM993.1 506.1L1009.7 508.8L992.2 516.9ZM1009.7 508.8L1026.2 511.6L1008.6 519.7ZM1026.2 511.6L1042.7 514.4L1024.9 522.6ZM1042.7 514.4L1059.2 517.3L1041.3 525.5ZM1059.2 517.3L1075.7 520.0L1057.6 528.4ZM1075.7 520.0L1092.3 522.7L1074.0 531.3ZM1092.3 522.7L1108.8 525.3L1090.4 534.0ZM1108.8 525.3L1125.3 528.0L1106.8 536.7ZM1125.3 528.0L1141.9 530.6L1123.1 539.4ZM1141.9 530.6L1158.4 533.3L1139.5 542.2ZM1158.4 533.3L1174.9 536.1L1155.9 545.0ZM1174.9 536.1L1191.4 538.8L1172.2 547.8ZM1191.4 538.8L1208.0 541.5L1188.6 550.6ZM1208.0 541.5L1224.5 544.2L1205.0 553.4ZM595.3 607.6L604.6 597.3L597.1 611.8ZM604.6 597.3L613.9 587.0L606.5 601.9ZM613.9 587.0L623.9 577.1L615.8 592.0ZM623.9 577.1L634.7 567.7L625.8 582.5ZM634.7 567.7L645.4 558.3L636.6 573.5ZM645.4 558.3L656.2 548.8L647.3 564.5ZM656.2 548.8L667.3 539.7L658.1 555.5ZM667.3 539.7L678.9 530.9L669.2 546.8ZM678.9 530.9L691.3 523.0L680.7 538.4ZM691.3 523.0L705.0 516.5L693.1 530.8ZM705.0 516.5L719.2 510.8L706.7 524.6ZM719.2 510.8L734.0 505.9L720.9 519.2ZM734.0 505.9L749.0 501.5L735.5 514.6ZM749.0 501.5L764.3 497.6L750.4 510.5ZM764.3 497.6L780.1 495.4L765.5 506.9ZM780.1 495.4L796.1 493.6L781.2 504.9ZM796.1 493.6L812.2 492.9L797.0 503.4ZM812.2 492.9L828.6 493.8L813.1 502.8ZM828.6 493.8L845.0 494.9L829.3 503.8ZM845.0 494.9L861.3 497.2L845.5 505.1ZM861.3 497.2L877.7 500.1L861.7 507.5ZM877.7 500.1L894.0 503.0L877.8 510.4ZM894.0 503.0L910.3 505.8L894.0 513.4ZM910.3 505.8L926.6 508.6L910.2 516.3ZM926.6 508.6L943.0 511.4L926.3 519.2ZM943.0 511.4L959.3 514.2L942.5 522.0ZM959.3 514.2L975.6 516.9L958.7 524.9ZM975.6 516.9L992.0 519.6L974.9 527.7ZM992.0 519.6L1008.3 522.5L991.0 530.5ZM1008.3 522.5L1024.6 525.4L1007.2 533.4ZM1024.6 525.4L1040.9 528.3L1023.4 536.4ZM1040.9 528.3L1057.2 531.2L1039.5 539.4ZM1057.2 531.2L1073.6 534.1L1055.7 542.4ZM1073.6 534.1L1089.9 536.8L1071.8 545.3ZM1089.9 536.8L1106.2 539.6L1088.0 548.1ZM1106.2 539.6L1122.6 542.3L1104.2 551.0ZM1122.6 542.3L1138.9 545.1L1120.4 553.8ZM1138.9 545.1L1155.2 547.9L1136.5 556.6ZM1155.2 547.9L1171.6 550.7L1152.7 559.5ZM1171.6 550.7L1187.9 553.5L1168.9 562.4ZM1187.9 553.5L1204.2 556.4L1185.1 565.3ZM1204.2 556.4L1220.5 559.2L1201.2 568.2ZM597.6 612.8L606.9 603.0L599.4 616.9ZM606.9 603.0L616.3 593.2L608.8 607.6ZM616.3 593.2L626.3 583.9L618.2 598.2ZM626.3 583.9L637.1 575.0L628.2 589.3ZM637.1 575.0L647.8 566.1L639.0 580.8ZM647.8 566.1L658.6 557.2L649.7 572.3ZM658.6 557.2L669.7 548.6L660.5 563.8ZM669.7 548.6L681.2 540.2L671.6 555.6ZM681.2 540.2L693.5 532.8L683.1 547.7ZM693.5 532.8L707.1 526.7L695.4 540.6ZM707.1 526.7L721.3 521.4L708.9 534.9ZM721.3 521.4L735.9 516.8L722.9 529.9ZM735.9 516.8L750.7 512.8L737.4 525.6ZM750.7 512.8L765.8 509.2L752.1 521.9ZM765.8 509.2L781.5 507.3L767.1 518.6ZM781.5 507.3L797.3 505.8L782.6 516.8ZM797.3 505.8L813.3 505.3L798.3 515.5ZM813.3 505.3L829.4 506.3L814.1 515.2ZM829.4 506.3L845.6 507.6L830.1 516.4ZM845.6 507.6L861.8 510.0L846.1 517.8ZM861.8 510.0L877.9 513.0L862.1 520.3ZM877.9 513.0L894.0 516.0L878.0 523.3ZM894.0 516.0L910.1 518.9L894.0 526.4ZM910.1 518.9L926.3 521.8L910.0 529.4ZM926.3 521.8L942.4 524.7L926.0 532.4ZM942.4 524.7L958.5 527.5L941.9 535.3ZM958.5 527.5L974.7 530.4L957.9 538.3ZM974.7 530.4L990.8 533.2L973.9 541.2ZM990.8 533.2L1006.9 536.2L989.9 544.1ZM1006.9 536.2L1023.0 539.2L1005.8 547.1ZM1023.0 539.2L1039.2 542.2L1021.8 550.2ZM1039.2 542.2L1055.3 545.2L1037.8 553.3ZM1055.3 545.2L1071.4 548.1L1053.7 556.3ZM1071.4 548.1L1087.5 551.0L1069.7 559.4ZM1087.5 551.0L1103.7 553.8L1085.7 562.3ZM1103.7 553.8L1119.8 556.7L1101.6 565.2ZM1119.8 556.7L1136.0 559.5L1117.6 568.1ZM1136.0 559.5L1152.1 562.4L1133.6 571.1ZM1152.1 562.4L1168.2 565.4L1149.6 574.1ZM1168.2 565.4L1184.3 568.3L1165.5 577.1ZM1184.3 568.3L1200.5 571.2L1181.5 580.1ZM1200.5 571.2L1216.6 574.1L1197.5 583.1ZM599.9 618.0L609.3 608.7L601.7 622.1ZM609.3 608.7L618.6 599.5L611.1 613.3ZM618.6 599.5L628.7 590.7L620.6 604.5ZM628.7 590.7L639.5 582.3L630.6 596.1ZM639.5 582.3L650.2 573.9L641.4 588.1ZM650.2 573.9L660.9 565.5L652.1 580.2ZM660.9 565.5L672.1 557.4L662.9 572.2ZM672.1 557.4L683.5 549.6L674.0 564.5ZM683.5 549.6L695.8 542.6L685.4 557.1ZM695.8 542.6L709.3 536.9L697.6 550.4ZM709.3 536.9L723.3 532.0L711.0 545.1ZM723.3 532.0L737.8 527.8L724.9 540.5ZM737.8 527.8L752.5 524.1L739.3 536.6ZM752.5 524.1L767.4 520.9L753.9 533.2ZM767.4 520.9L782.9 519.2L768.7 530.2ZM782.9 519.2L798.5 518.0L784.0 528.7ZM798.5 518.0L814.3 517.7L799.5 527.7ZM814.3 517.7L830.2 518.9L815.1 527.6ZM830.2 518.9L846.2 520.3L830.9 528.9ZM846.2 520.3L862.2 522.8L846.7 530.5ZM862.2 522.8L878.1 525.9L862.5 533.1ZM878.1 525.9L894.0 529.0L878.3 536.3ZM894.0 529.0L909.9 532.0L894.0 539.4ZM909.9 532.0L925.9 535.0L909.8 542.5ZM925.9 535.0L941.8 538.0L925.6 545.6ZM941.8 538.0L957.7 540.9L941.4 548.6ZM957.7 540.9L973.7 543.9L957.1 551.6ZM973.7 543.9L989.6 546.8L972.9 554.7ZM989.6 546.8L1005.6 549.8L988.7 557.7ZM1005.6 549.8L1021.5 552.9L1004.5 560.8ZM1021.5 552.9L1037.4 556.0L1020.2 564.0ZM1037.4 556.0L1053.3 559.1L1036.0 567.1ZM1053.3 559.1L1069.2 562.2L1051.7 570.3ZM1069.2 562.2L1085.2 565.1L1067.5 573.4ZM1085.2 565.1L1101.1 568.1L1083.3 576.4ZM1101.1 568.1L1117.1 571.0L1099.1 579.5ZM1117.1 571.0L1133.0 574.0L1114.9 582.5ZM1133.0 574.0L1148.9 577.0L1130.6 585.5ZM1148.9 577.0L1164.9 580.0L1146.4 588.6ZM1164.9 580.0L1180.8 583.0L1162.2 591.7ZM1180.8 583.0L1196.7 586.0L1177.9 594.8ZM1196.7 586.0L1212.7 589.0L1193.7 597.9ZM602.2 623.1L611.6 614.4L604.0 627.2ZM611.6 614.4L621.0 605.7L613.5 619.0ZM621.0 605.7L631.1 597.4L622.9 610.7ZM631.1 597.4L641.9 589.6L633.0 602.9ZM641.9 589.6L652.6 581.7L643.8 595.4ZM652.6 581.7L663.3 573.8L654.5 588.0ZM663.3 573.8L674.4 566.3L665.2 580.5ZM674.4 566.3L685.9 558.9L676.3 573.3ZM685.9 558.9L698.1 552.4L687.7 566.4ZM698.1 552.4L711.5 547.1L699.9 560.2ZM711.5 547.1L725.4 542.6L713.2 555.3ZM725.4 542.6L739.7 538.8L727.0 551.1ZM739.7 538.8L754.2 535.4L741.2 547.6ZM754.2 535.4L769.0 532.5L755.6 544.5ZM769.0 532.5L784.3 531.1L770.3 541.8ZM784.3 531.1L799.7 530.1L785.4 540.7ZM799.7 530.1L815.3 530.0L800.7 539.9ZM815.3 530.0L831.1 531.4L816.1 540.0ZM831.1 531.4L846.8 533.0L831.7 541.5ZM846.8 533.0L862.6 535.6L847.3 543.2ZM862.6 535.6L878.3 538.8L862.9 545.9ZM878.3 538.8L894.0 542.0L878.5 549.2ZM894.0 542.0L909.8 545.1L894.1 552.4ZM909.8 545.1L925.5 548.2L909.6 555.6ZM925.5 548.2L941.2 551.3L925.2 558.8ZM941.2 551.3L957.0 554.3L940.8 561.9ZM957.0 554.3L972.7 557.4L956.4 565.0ZM972.7 557.4L988.5 560.4L971.9 568.2ZM988.5 560.4L1004.2 563.5L987.5 571.3ZM1004.2 563.5L1019.9 566.7L1003.1 574.5ZM1019.9 566.7L1035.6 569.9L1018.7 577.7ZM1035.6 569.9L1051.4 573.1L1034.2 581.0ZM1051.4 573.1L1067.1 576.2L1049.8 584.3ZM1067.1 576.2L1082.8 579.3L1065.4 587.5ZM1082.8 579.3L1098.6 582.3L1080.9 590.6ZM1098.6 582.3L1114.3 585.4L1096.5 593.7ZM1114.3 585.4L1130.0 588.4L1112.1 596.8ZM1130.0 588.4L1145.8 591.5L1127.7 600.0ZM1145.8 591.5L1161.5 594.6L1143.2 603.1ZM1161.5 594.6L1177.2 597.7L1158.8 606.3ZM1177.2 597.7L1193.0 600.8L1174.4 609.5ZM1193.0 600.8L1208.7 604.0L1190.0 612.7ZM604.5 628.2L614.0 620.1L606.3 632.4ZM614.0 620.1L623.4 612.0L615.8 624.7ZM623.4 612.0L633.5 604.2L625.3 617.0ZM633.5 604.2L644.3 596.9L635.4 609.7ZM644.3 596.9L655.0 589.5L646.2 602.7ZM655.0 589.5L665.7 582.2L656.9 595.8ZM665.7 582.2L676.8 575.1L667.6 588.8ZM676.8 575.1L688.2 568.3L678.7 582.2ZM688.2 568.3L700.4 562.2L690.1 575.7ZM700.4 562.2L713.6 557.3L702.2 570.0ZM713.6 557.3L727.4 553.2L715.4 565.5ZM727.4 553.2L741.6 549.8L729.0 561.7ZM741.6 549.8L756.0 546.8L743.1 558.5ZM756.0 546.8L770.6 544.2L757.4 555.8ZM770.6 544.2L785.7 543.0L771.8 553.5ZM785.7 543.0L800.9 542.3L786.8 552.6ZM800.9 542.3L816.3 542.4L801.9 552.0ZM816.3 542.4L831.9 544.0L817.1 552.3ZM831.9 544.0L847.5 545.7L832.5 554.0ZM847.5 545.7L863.0 548.5L847.9 555.9ZM863.0 548.5L878.5 551.8L863.3 558.7ZM878.5 551.8L894.1 555.0L878.7 562.1ZM894.1 555.0L909.6 558.2L894.1 565.4ZM909.6 558.2L925.1 561.4L909.4 568.7ZM925.1 561.4L940.7 564.6L924.8 572.0ZM940.7 564.6L956.2 567.7L940.2 575.2ZM956.2 567.7L971.7 570.8L955.6 578.4ZM971.7 570.8L987.3 574.0L971.0 581.6ZM987.3 574.0L1002.8 577.2L986.3 584.9ZM1002.8 577.2L1018.3 580.5L1001.7 588.1ZM1018.3 580.5L1033.9 583.8L1017.1 591.5ZM1033.9 583.8L1049.4 587.1L1032.5 594.9ZM1049.4 587.1L1064.9 590.3L1047.8 598.2ZM1064.9 590.3L1080.5 593.4L1063.2 601.5ZM1080.5 593.4L1096.0 596.6L1078.6 604.8ZM1096.0 596.6L1111.5 599.7L1094.0 608.0ZM1111.5 599.7L1127.1 602.8L1109.3 611.2ZM1127.1 602.8L1142.6 606.1L1124.7 614.4ZM1142.6 606.1L1158.1 609.3L1140.1 617.7ZM1158.1 609.3L1173.7 612.5L1155.5 621.0ZM1173.7 612.5L1189.2 615.7L1170.8 624.3ZM1189.2 615.7L1204.8 618.9L1186.2 627.5ZM606.8 633.4L616.3 625.8L608.6 637.5ZM616.3 625.8L625.8 618.2L618.2 630.4ZM625.8 618.2L635.9 611.0L627.7 623.2ZM635.9 611.0L646.7 604.2L637.9 616.4ZM646.7 604.2L657.4 597.4L648.6 610.0ZM657.4 597.4L668.1 590.5L659.3 603.6ZM668.1 590.5L679.2 583.9L670.0 597.2ZM679.2 583.9L690.5 577.6L681.1 591.0ZM690.5 577.6L702.6 572.0L692.4 585.1ZM702.6 572.0L715.8 567.6L704.4 579.9ZM715.8 567.6L729.4 563.8L717.5 575.8ZM729.4 563.8L743.5 560.7L731.1 572.3ZM743.5 560.7L757.7 558.1L745.0 569.5ZM757.7 558.1L772.1 555.8L759.1 567.1ZM772.1 555.8L787.1 555.0L773.4 565.1ZM787.1 555.0L802.1 554.5L788.2 564.5ZM802.1 554.5L817.3 554.8L803.1 564.2ZM817.3 554.8L832.7 556.5L818.1 564.7ZM832.7 556.5L848.1 558.4L833.3 566.6ZM848.1 558.4L863.4 561.3L848.6 568.6ZM863.4 561.3L878.7 564.7L863.8 571.5ZM878.7 564.7L894.1 568.0L878.9 575.0ZM894.1 568.0L909.4 571.3L894.1 578.4ZM909.4 571.3L924.7 574.6L909.3 581.8ZM924.7 574.6L940.1 577.9L924.4 585.2ZM940.1 577.9L955.4 581.1L939.6 588.5ZM955.4 581.1L970.8 584.3L954.8 591.8ZM970.8 584.3L986.1 587.6L970.0 595.1ZM986.1 587.6L1001.4 590.9L985.2 598.4ZM1001.4 590.9L1016.8 594.3L1000.3 601.8ZM1016.8 594.3L1032.1 597.6L1015.5 605.3ZM1032.1 597.6L1047.4 601.0L1030.7 608.7ZM1047.4 601.0L1062.8 604.3L1045.9 612.2ZM1062.8 604.3L1078.1 607.6L1061.0 615.6ZM1078.1 607.6L1093.4 610.8L1076.2 618.9ZM1093.4 610.8L1108.8 614.1L1091.4 622.2ZM1108.8 614.1L1124.1 617.3L1106.6 625.5ZM1124.1 617.3L1139.5 620.6L1121.8 628.9ZM1139.5 620.6L1154.8 623.9L1136.9 632.2ZM1154.8 623.9L1170.1 627.2L1152.1 635.6ZM1170.1 627.2L1185.5 630.5L1167.3 639.0ZM1185.5 630.5L1200.8 633.8L1182.5 642.4ZM609.1 638.5L618.6 631.5L610.9 642.7ZM618.6 631.5L628.2 624.5L620.5 636.1ZM628.2 624.5L638.3 617.8L630.1 629.5ZM638.3 617.8L649.1 611.5L640.3 623.2ZM649.1 611.5L659.8 605.2L651.0 617.3ZM659.8 605.2L670.5 598.8L661.7 611.4ZM670.5 598.8L681.5 592.8L672.4 605.5ZM681.5 592.8L692.9 586.9L683.4 599.9ZM692.9 586.9L704.9 581.8L694.7 594.4ZM704.9 581.8L717.9 577.8L706.7 589.7ZM717.9 577.8L731.5 574.4L719.7 586.0ZM731.5 574.4L745.3 571.7L733.1 582.9ZM745.3 571.7L759.4 569.4L746.9 580.5ZM759.4 569.4L773.7 567.5L760.8 578.5ZM773.7 567.5L788.5 566.9L775.0 576.8ZM788.5 566.9L803.3 566.6L789.6 576.4ZM803.3 566.6L818.3 567.2L804.3 576.4ZM818.3 567.2L833.5 569.1L819.1 577.1ZM833.5 569.1L848.7 571.1L834.2 579.1ZM848.7 571.1L863.8 574.1L849.2 581.3ZM863.8 574.1L879.0 577.6L864.2 584.4ZM879.0 577.6L894.1 581.0L879.1 587.9ZM894.1 581.0L909.2 584.4L894.1 591.4ZM909.2 584.4L924.4 587.8L909.1 594.9ZM924.4 587.8L939.5 591.2L924.1 598.4ZM939.5 591.2L954.7 594.5L939.1 601.8ZM954.7 594.5L969.8 597.8L954.0 605.2ZM969.8 597.8L984.9 601.2L969.0 608.6ZM984.9 601.2L1000.1 604.6L984.0 612.0ZM1000.1 604.6L1015.2 608.0L999.0 615.5ZM1015.2 608.0L1030.3 611.5L1014.0 619.1ZM1030.3 611.5L1045.5 615.0L1028.9 622.6ZM1045.5 615.0L1060.6 618.4L1043.9 626.1ZM1060.6 618.4L1075.7 621.7L1058.9 629.6ZM1075.7 621.7L1090.9 625.1L1073.9 633.1ZM1090.9 625.1L1106.0 628.4L1088.8 636.5ZM1106.0 628.4L1121.2 631.7L1103.8 639.9ZM1121.2 631.7L1136.3 635.1L1118.8 643.3ZM1136.3 635.1L1151.4 638.5L1133.8 646.8ZM1151.4 638.5L1166.6 641.9L1148.8 650.3ZM1166.6 641.9L1181.7 645.3L1163.7 653.7ZM1181.7 645.3L1196.8 648.7L1178.7 657.2ZM611.4 643.7L621.0 637.2L613.2 647.8ZM621.0 637.2L630.6 630.7L622.9 641.8ZM630.6 630.7L640.7 624.6L632.5 635.7ZM640.7 624.6L651.5 618.8L642.7 630.0ZM651.5 618.8L662.2 613.0L653.4 624.6ZM662.2 613.0L672.9 607.2L664.1 619.2ZM672.9 607.2L683.9 601.6L674.8 613.9ZM683.9 601.6L695.2 596.3L685.8 608.7ZM695.2 596.3L707.2 591.6L697.1 603.8ZM707.2 591.6L720.1 588.0L709.0 599.5ZM720.1 588.0L733.5 585.0L721.8 596.2ZM733.5 585.0L747.2 582.7L735.1 593.5ZM747.2 582.7L761.2 580.7L748.7 591.5ZM761.2 580.7L775.3 579.1L762.6 589.8ZM775.3 579.1L789.9 578.8L776.6 588.4ZM789.9 578.8L804.5 578.8L791.0 588.3ZM804.5 578.8L819.4 579.6L805.5 588.5ZM819.4 579.6L834.3 581.6L820.2 589.5ZM834.3 581.6L849.3 583.8L835.0 591.7ZM849.3 583.8L864.3 586.9L849.8 594.0ZM864.3 586.9L879.2 590.5L864.6 597.2ZM879.2 590.5L894.1 594.0L879.4 600.8ZM894.1 594.0L909.1 597.5L894.1 604.4ZM909.1 597.5L924.0 601.0L908.9 608.0ZM924.0 601.0L938.9 604.5L923.7 611.6ZM938.9 604.5L953.9 607.9L938.5 615.1ZM953.9 607.9L968.8 611.3L953.3 618.6ZM968.8 611.3L983.8 614.7L968.0 622.1ZM983.8 614.7L998.7 618.2L982.8 625.6ZM998.7 618.2L1013.6 621.8L997.6 629.2ZM1013.6 621.8L1028.6 625.4L1012.4 632.8ZM1028.6 625.4L1043.5 628.9L1027.2 636.5ZM1043.5 628.9L1058.4 632.5L1041.9 640.1ZM1058.4 632.5L1073.4 635.9L1056.7 643.7ZM1073.4 635.9L1088.3 639.3L1071.5 647.2ZM1088.3 639.3L1103.3 642.8L1086.3 650.7ZM1103.3 642.8L1118.2 646.2L1101.1 654.2ZM1118.2 646.2L1133.1 649.7L1115.8 657.7ZM1133.1 649.7L1148.1 653.2L1130.6 661.3ZM1148.1 653.2L1163.0 656.7L1145.4 664.9ZM1163.0 656.7L1178.0 660.2L1160.2 668.5ZM1178.0 660.2L1192.9 663.7L1175.0 672.0ZM613.7 648.9L623.3 642.9L615.5 653.0ZM623.3 642.9L633.0 637.0L625.2 647.5ZM633.0 637.0L643.2 631.4L634.9 642.0ZM643.2 631.4L653.9 626.1L645.1 636.8ZM653.9 626.1L664.6 620.8L655.8 631.9ZM664.6 620.8L675.3 615.5L666.5 627.1ZM675.3 615.5L686.3 610.5L677.2 622.2ZM686.3 610.5L697.5 605.6L688.2 617.5ZM697.5 605.6L709.4 601.4L699.4 613.1ZM709.4 601.4L722.3 598.2L711.3 609.3ZM722.3 598.2L735.5 595.7L724.0 606.4ZM735.5 595.7L749.1 593.7L737.2 604.2ZM749.1 593.7L762.9 592.0L750.6 602.4ZM762.9 592.0L776.9 590.8L764.3 601.1ZM776.9 590.8L791.3 590.7L778.1 600.1ZM791.3 590.7L805.8 591.0L792.4 600.2ZM805.8 591.0L820.4 592.0L806.7 600.7ZM820.4 592.0L835.1 594.2L821.2 601.9ZM835.1 594.2L849.9 596.6L835.8 604.2ZM849.9 596.6L864.7 599.7L850.4 606.7ZM864.7 599.7L879.4 603.4L865.0 610.0ZM879.4 603.4L894.1 607.0L879.6 613.7ZM894.1 607.0L908.9 610.6L894.2 617.4ZM908.9 610.6L923.6 614.2L908.7 621.1ZM923.6 614.2L938.4 617.7L923.3 624.8ZM938.4 617.7L953.1 621.3L937.9 628.4ZM953.1 621.3L967.9 624.8L952.5 632.0ZM967.9 624.8L982.6 628.3L967.1 635.6ZM982.6 628.3L997.3 631.9L981.7 639.2ZM997.3 631.9L1012.1 635.6L996.2 642.9ZM1012.1 635.6L1026.8 639.2L1010.8 646.6ZM1026.8 639.2L1041.5 642.9L1025.4 650.3ZM1041.5 642.9L1056.3 646.5L1040.0 654.1ZM1056.3 646.5L1071.0 650.0L1054.5 657.8ZM1071.0 650.0L1085.8 653.6L1069.1 661.4ZM1085.8 653.6L1100.5 657.1L1083.7 665.0ZM1100.5 657.1L1115.3 660.6L1098.3 668.6ZM1115.3 660.6L1130.0 664.2L1112.9 672.2ZM1130.0 664.2L1144.7 667.8L1127.5 675.9ZM1144.7 667.8L1159.5 671.4L1142.0 679.5ZM1159.5 671.4L1174.2 675.0L1156.6 683.2ZM1174.2 675.0L1189.0 678.6L1171.2 686.9ZM616.0 654.0L625.7 648.6L617.8 658.1ZM625.7 648.6L635.4 643.2L627.6 653.2ZM635.4 643.2L645.6 638.1L637.3 648.2ZM645.6 638.1L656.3 633.4L647.5 643.6ZM656.3 633.4L667.0 628.6L658.2 639.2ZM667.0 628.6L677.7 623.9L668.9 634.9ZM677.7 623.9L688.6 619.3L679.6 630.5ZM688.6 619.3L699.9 615.0L690.5 626.4ZM699.9 615.0L711.7 611.2L701.7 622.4ZM711.7 611.2L724.4 608.5L713.5 619.1ZM724.4 608.5L737.6 606.3L726.2 616.6ZM737.6 606.3L751.0 604.6L739.2 614.8ZM751.0 604.6L764.7 603.4L752.5 613.4ZM764.7 603.4L778.5 602.4L766.0 612.4ZM778.5 602.4L792.7 602.6L779.7 611.7ZM792.7 602.6L807.0 603.2L793.8 612.2ZM807.0 603.2L821.4 604.4L807.9 612.9ZM821.4 604.4L836.0 606.7L822.2 614.3ZM836.0 606.7L850.5 609.3L836.6 616.8ZM850.5 609.3L865.1 612.6L851.0 619.4ZM865.1 612.6L879.6 616.3L865.4 622.8ZM879.6 616.3L894.2 620.0L879.8 626.6ZM894.2 620.0L908.7 623.7L894.2 630.4ZM908.7 623.7L923.2 627.4L908.6 634.2ZM923.2 627.4L937.8 631.0L922.9 637.9ZM937.8 631.0L952.3 634.7L937.3 641.7ZM952.3 634.7L966.9 638.3L951.7 645.4ZM966.9 638.3L981.4 641.9L966.1 649.1ZM981.4 641.9L996.0 645.6L980.5 652.8ZM996.0 645.6L1010.5 649.4L994.9 656.6ZM1010.5 649.4L1025.0 653.1L1009.2 660.4ZM1025.0 653.1L1039.6 656.8L1023.6 664.2ZM1039.6 656.8L1054.1 660.6L1038.0 668.0ZM1054.1 660.6L1068.7 664.2L1052.4 671.8ZM1068.7 664.2L1083.2 667.8L1066.8 675.5ZM1083.2 667.8L1097.7 671.4L1081.2 679.2ZM1097.7 671.4L1112.3 675.1L1095.5 682.9ZM1112.3 675.1L1126.8 678.8L1109.9 686.6ZM1126.8 678.8L1141.4 682.5L1124.3 690.4ZM1141.4 682.5L1155.9 686.1L1138.7 694.2ZM1155.9 686.1L1170.5 689.8L1153.1 697.9ZM1170.5 689.8L1185.0 693.5L1167.5 701.7ZM618.3 659.1L628.0 654.3L620.1 663.3ZM628.0 654.3L637.8 649.5L629.9 658.9ZM637.8 649.5L648.0 644.9L639.7 654.5ZM648.0 644.9L658.7 640.7L649.9 650.3ZM658.7 640.7L669.4 636.4L660.6 646.5ZM669.4 636.4L680.1 632.2L671.3 642.7ZM680.1 632.2L691.0 628.2L682.0 638.9ZM691.0 628.2L702.2 624.3L692.9 635.2ZM702.2 624.3L714.0 621.0L704.1 631.8ZM714.0 621.0L726.6 618.7L715.8 628.9ZM726.6 618.7L739.6 616.9L728.3 626.9ZM739.6 616.9L752.9 615.6L741.2 625.4ZM752.9 615.6L766.4 614.7L754.4 624.4ZM766.4 614.7L780.0 614.1L767.8 623.7ZM780.0 614.1L794.1 614.5L781.3 623.4ZM794.1 614.5L808.2 615.3L795.2 624.1ZM808.2 615.3L822.4 616.8L809.1 625.1ZM822.4 616.8L836.8 619.3L823.2 626.7ZM836.8 619.3L851.2 622.0L837.4 629.3ZM851.2 622.0L865.5 625.4L851.6 632.1ZM865.5 625.4L879.8 629.2L865.8 635.6ZM879.8 629.2L894.2 633.0L880.0 639.5ZM894.2 633.0L908.5 636.8L894.2 643.4ZM908.5 636.8L922.9 640.6L908.4 647.3ZM922.9 640.6L937.2 644.3L922.6 651.1ZM937.2 644.3L951.6 648.1L936.8 655.0ZM951.6 648.1L965.9 651.8L950.9 658.8ZM965.9 651.8L980.3 655.5L965.1 662.6ZM980.3 655.5L994.6 659.3L979.3 666.4ZM994.6 659.3L1008.9 663.1L993.5 670.2ZM1008.9 663.1L1023.3 667.0L1007.7 674.2ZM1023.3 667.0L1037.6 670.8L1021.9 678.1ZM1037.6 670.8L1051.9 674.6L1036.0 682.0ZM1051.9 674.6L1066.3 678.3L1050.2 685.9ZM1066.3 678.3L1080.6 682.1L1064.4 689.7ZM1080.6 682.1L1095.0 685.8L1078.6 693.5ZM1095.0 685.8L1109.3 689.5L1092.8 697.3ZM1109.3 689.5L1123.7 693.3L1107.0 701.1ZM1123.7 693.3L1138.0 697.1L1121.2 704.9ZM1138.0 697.1L1152.4 700.9L1135.3 708.8ZM1152.4 700.9L1166.7 704.7L1149.5 712.7ZM1166.7 704.7L1181.0 708.4L1163.7 716.5ZM620.6 664.3L630.4 660.0L622.4 668.4ZM630.4 660.0L640.1 655.7L632.2 664.6ZM640.1 655.7L650.4 651.7L642.1 660.7ZM650.4 651.7L661.1 648.0L652.3 657.1ZM661.1 648.0L671.8 644.3L663.0 653.8ZM671.8 644.3L682.4 640.5L673.7 650.5ZM682.4 640.5L693.4 637.0L684.4 647.2ZM693.4 637.0L704.6 633.6L695.3 644.1ZM704.6 633.6L716.3 630.8L706.4 641.1ZM716.3 630.8L728.8 628.9L718.1 638.7ZM728.8 628.9L741.6 627.5L730.5 637.1ZM741.6 627.5L754.8 626.6L743.3 636.0ZM754.8 626.6L768.1 626.0L756.3 635.4ZM768.1 626.0L781.6 625.7L769.5 635.0ZM781.6 625.7L795.5 626.4L782.9 635.0ZM795.5 626.4L809.4 627.5L796.6 636.0ZM809.4 627.5L823.4 629.1L810.3 637.2ZM823.4 629.1L837.6 631.8L824.2 639.1ZM837.6 631.8L851.8 634.7L838.2 641.9ZM851.8 634.7L865.9 638.2L852.3 644.8ZM865.9 638.2L880.1 642.1L866.3 648.4ZM880.1 642.1L894.2 646.0L880.2 652.4ZM894.2 646.0L908.3 649.9L894.2 656.4ZM908.3 649.9L922.5 653.8L908.2 660.4ZM922.5 653.8L936.6 657.6L922.2 664.3ZM936.6 657.6L950.8 661.4L936.2 668.3ZM950.8 661.4L964.9 665.3L950.2 672.2ZM964.9 665.3L979.1 669.1L964.2 676.1ZM979.1 669.1L993.2 673.0L978.1 680.0ZM993.2 673.0L1007.4 676.9L992.1 683.9ZM1007.4 676.9L1021.5 680.8L1006.1 687.9ZM1021.5 680.8L1035.6 684.8L1020.1 691.9ZM1035.6 684.8L1049.8 688.7L1034.1 695.9ZM1049.8 688.7L1063.9 692.5L1048.1 699.9ZM1063.9 692.5L1078.1 696.3L1062.0 703.8ZM1078.1 696.3L1092.2 700.1L1076.0 707.7ZM1092.2 700.1L1106.4 704.0L1090.0 711.6ZM1106.4 704.0L1120.5 707.9L1104.0 715.5ZM1120.5 707.9L1134.7 711.7L1118.0 719.5ZM1134.7 711.7L1148.8 715.6L1132.0 723.4ZM1148.8 715.6L1163.0 719.5L1146.0 727.4ZM1163.0 719.5L1177.1 723.4L1160.0 731.3ZM622.9 669.5L632.7 665.7L624.7 673.6ZM632.7 665.7L642.5 662.0L634.6 670.3ZM642.5 662.0L652.8 658.5L644.4 667.0ZM652.8 658.5L663.5 655.3L654.7 663.9ZM663.5 655.3L674.2 652.1L665.4 661.1ZM674.2 652.1L684.8 648.9L676.1 658.3ZM684.8 648.9L695.7 645.8L686.7 655.5ZM695.7 645.8L706.9 643.0L697.6 652.9ZM706.9 643.0L718.5 640.7L708.8 650.5ZM718.5 640.7L730.9 639.1L720.3 648.5ZM730.9 639.1L743.7 638.1L732.7 647.3ZM743.7 638.1L756.7 637.6L745.3 646.6ZM756.7 637.6L769.9 637.3L758.2 646.3ZM769.9 637.3L783.2 637.3L771.3 646.4ZM783.2 637.3L796.8 638.4L784.4 646.7ZM796.8 638.4L810.6 639.7L798.0 647.9ZM810.6 639.7L824.4 641.5L811.6 649.4ZM824.4 641.5L838.4 644.4L825.2 651.4ZM838.4 644.4L852.4 647.4L839.1 654.4ZM852.4 647.4L866.3 651.0L852.9 657.5ZM866.3 651.0L880.3 655.0L866.7 661.3ZM880.3 655.0L894.2 659.0L880.5 665.4ZM894.2 659.0L908.2 663.0L894.2 669.4ZM908.2 663.0L922.1 667.0L908.0 673.5ZM922.1 667.0L936.1 670.9L921.8 677.5ZM936.1 670.9L950.0 674.8L935.6 681.5ZM950.0 674.8L964.0 678.8L949.4 685.5ZM964.0 678.8L977.9 682.7L963.2 689.6ZM977.9 682.7L991.9 686.7L977.0 693.6ZM991.9 686.7L1005.8 690.7L990.8 697.6ZM1005.8 690.7L1019.7 694.7L1004.5 701.7ZM1019.7 694.7L1033.7 698.7L1018.3 705.8ZM1033.7 698.7L1047.6 702.7L1032.1 709.9ZM1047.6 702.7L1061.6 706.6L1045.9 714.0ZM1061.6 706.6L1075.5 710.6L1059.7 718.0ZM1075.5 710.6L1089.5 714.5L1073.5 722.0ZM1089.5 714.5L1103.4 718.4L1087.3 726.0ZM1103.4 718.4L1117.4 722.4L1101.1 730.0ZM1117.4 722.4L1131.3 726.4L1114.8 734.0ZM1131.3 726.4L1145.3 730.3L1128.6 738.1ZM1145.3 730.3L1159.2 734.3L1142.4 742.1ZM1159.2 734.3L1173.2 738.3L1156.2 746.2ZM625.2 674.6L635.1 671.4L627.0 678.7ZM635.1 671.4L644.9 668.2L636.9 676.0ZM644.9 668.2L655.2 665.3L646.8 673.2ZM655.2 665.3L665.9 662.6L657.1 670.7ZM665.9 662.6L676.6 659.9L667.8 668.4ZM676.6 659.9L687.2 657.2L678.5 666.1ZM687.2 657.2L698.1 654.7L689.1 663.9ZM698.1 654.7L709.2 652.3L700.0 661.8ZM709.2 652.3L720.8 650.5L711.1 659.8ZM720.8 650.5L733.1 649.4L722.6 658.3ZM733.1 649.4L745.7 648.7L734.8 657.5ZM745.7 648.7L758.6 648.5L747.3 657.2ZM758.6 648.5L771.6 648.6L760.1 657.3ZM771.6 648.6L784.8 649.0L773.0 657.7ZM784.8 649.0L798.2 650.3L786.0 658.3ZM798.2 650.3L811.8 651.8L799.4 659.8ZM811.8 651.8L825.5 653.9L812.8 661.6ZM825.5 653.9L839.2 656.9L826.3 663.8ZM839.2 656.9L853.0 660.1L839.9 667.0ZM853.0 660.1L866.8 663.8L853.5 670.2ZM866.8 663.8L880.5 667.9L867.1 674.1ZM880.5 667.9L894.2 672.0L880.7 678.3ZM894.2 672.0L908.0 676.1L894.3 682.4ZM908.0 676.1L921.7 680.2L907.8 686.6ZM921.7 680.2L935.5 684.2L921.4 690.7ZM935.5 684.2L949.2 688.2L935.0 694.8ZM949.2 688.2L963.0 692.2L948.6 698.9ZM963.0 692.2L976.7 696.3L962.2 703.0ZM976.7 696.3L990.5 700.3L975.8 707.1ZM990.5 700.3L1004.2 704.5L989.4 711.3ZM1004.2 704.5L1018.0 708.6L1003.0 715.5ZM1018.0 708.6L1031.7 712.7L1016.6 719.7ZM1031.7 712.7L1045.5 716.8L1030.1 723.9ZM1045.5 716.8L1059.2 720.8L1043.7 728.0ZM1059.2 720.8L1073.0 724.8L1057.3 732.1ZM1073.0 724.8L1086.7 728.8L1070.9 736.2ZM1086.7 728.8L1100.5 732.9L1084.5 740.3ZM1100.5 732.9L1114.2 736.9L1098.1 744.4ZM1114.2 736.9L1128.0 741.0L1111.7 748.6ZM1128.0 741.0L1141.7 745.1L1125.3 752.7ZM1141.7 745.1L1155.5 749.1L1138.9 756.9ZM1155.5 749.1L1169.2 753.2L1152.5 761.0ZM627.5 679.8L637.4 677.1L629.3 683.9ZM637.4 677.1L647.3 674.5L639.3 681.7ZM647.3 674.5L657.6 672.0L649.2 679.5ZM657.6 672.0L668.3 669.9L659.5 677.5ZM668.3 669.9L678.9 667.7L670.2 675.7ZM678.9 667.7L689.6 665.5L680.9 674.0ZM689.6 665.5L700.5 663.5L691.5 672.2ZM700.5 663.5L711.6 661.7L702.4 670.6ZM711.6 661.7L723.1 660.3L713.4 669.1ZM723.1 660.3L735.3 659.6L724.9 668.1ZM735.3 659.6L747.7 659.3L737.0 667.8ZM747.7 659.3L760.5 659.5L749.4 667.8ZM760.5 659.5L773.3 660.0L762.0 668.3ZM773.3 660.0L786.3 660.6L774.7 669.0ZM786.3 660.6L799.6 662.2L787.6 670.0ZM799.6 662.2L813.0 664.0L800.8 671.7ZM813.0 664.0L826.5 666.3L814.0 673.7ZM826.5 666.3L840.0 669.5L827.3 676.2ZM840.0 669.5L853.6 672.8L840.7 679.5ZM853.6 672.8L867.2 676.6L854.1 682.9ZM867.2 676.6L880.7 680.9L867.5 686.9ZM880.7 680.9L894.3 685.0L880.9 691.2ZM894.3 685.0L907.8 689.2L894.3 695.4ZM907.8 689.2L921.4 693.4L907.7 699.7ZM921.4 693.4L934.9 697.5L921.1 703.9ZM934.9 697.5L948.5 701.6L934.5 708.1ZM948.5 701.6L962.0 705.7L947.8 712.3ZM962.0 705.7L975.6 709.9L961.2 716.5ZM975.6 709.9L989.1 714.0L974.6 720.7ZM989.1 714.0L1002.7 718.2L988.0 725.0ZM1002.7 718.2L1016.2 722.4L1001.4 729.3ZM1016.2 722.4L1029.7 726.6L1014.8 733.5ZM1029.7 726.6L1043.3 730.8L1028.2 737.8ZM1043.3 730.8L1056.8 735.0L1041.6 742.1ZM1056.8 735.0L1070.4 739.1L1055.0 746.3ZM1070.4 739.1L1084.0 743.2L1068.4 750.5ZM1084.0 743.2L1097.5 747.3L1081.7 754.7ZM1097.5 747.3L1111.1 751.5L1095.1 758.9ZM1111.1 751.5L1124.6 755.6L1108.5 763.1ZM1124.6 755.6L1138.2 759.8L1121.9 767.4ZM1138.2 759.8L1151.7 764.0L1135.3 771.6ZM1151.7 764.0L1165.2 768.1L1148.7 775.8ZM629.8 684.9L639.7 682.8L631.6 689.0ZM639.7 682.8L649.7 680.7L641.6 687.4ZM649.7 680.7L660.0 678.8L651.6 685.7ZM660.0 678.8L670.7 677.2L661.9 684.3ZM670.7 677.2L681.3 675.5L672.6 683.0ZM681.3 675.5L692.0 673.9L683.3 681.8ZM692.0 673.9L702.9 672.4L693.9 680.5ZM702.9 672.4L713.9 671.0L704.7 679.4ZM713.9 671.0L725.3 670.1L715.8 678.5ZM725.3 670.1L737.4 669.8L727.2 677.9ZM737.4 669.8L749.8 670.0L739.2 678.0ZM749.8 670.0L762.4 670.5L751.4 678.4ZM762.4 670.5L775.1 671.3L763.9 679.3ZM775.1 671.3L787.9 672.3L776.5 680.3ZM787.9 672.3L801.0 674.1L789.2 681.6ZM801.0 674.1L814.2 676.2L802.2 683.6ZM814.2 676.2L827.5 678.7L815.2 685.9ZM827.5 678.7L840.9 682.0L828.3 688.6ZM840.9 682.0L854.2 685.5L841.5 692.1ZM854.2 685.5L867.6 689.5L854.7 695.6ZM867.6 689.5L880.9 693.8L867.9 699.7ZM880.9 693.8L894.3 698.0L881.1 704.1ZM894.3 698.0L907.6 702.3L894.3 708.4ZM907.6 702.3L921.0 706.6L907.5 712.8ZM921.0 706.6L934.3 710.8L920.7 717.1ZM934.3 710.8L947.7 715.0L933.9 721.4ZM947.7 715.0L961.0 719.2L947.1 725.7ZM961.0 719.2L974.4 723.4L960.3 730.0ZM974.4 723.4L987.7 727.7L973.5 734.3ZM987.7 727.7L1001.1 732.0L986.7 738.7ZM1001.1 732.0L1014.4 736.3L999.8 743.0ZM1014.4 736.3L1027.8 740.6L1013.0 747.4ZM1027.8 740.6L1041.1 744.9L1026.2 751.8ZM1041.1 744.9L1054.5 749.1L1039.4 756.1ZM1054.5 749.1L1067.8 753.3L1052.6 760.4ZM1067.8 753.3L1081.2 757.5L1065.8 764.7ZM1081.2 757.5L1094.5 761.8L1079.0 769.0ZM1094.5 761.8L1107.9 766.0L1092.2 773.3ZM1107.9 766.0L1121.2 770.3L1105.4 777.7ZM1121.2 770.3L1134.6 774.5L1118.6 782.0ZM1134.6 774.5L1147.9 778.8L1131.8 786.3ZM1147.9 778.8L1161.3 783.0L1144.9 790.7ZM632.1 690.0L642.1 688.5L633.9 694.2ZM642.1 688.5L652.1 687.0L644.0 693.1ZM652.1 687.0L662.4 685.6L654.0 692.0ZM662.4 685.6L673.1 684.5L664.3 691.0ZM673.1 684.5L683.7 683.3L675.0 690.3ZM683.7 683.3L694.4 682.2L685.6 689.6ZM694.4 682.2L705.2 681.2L696.3 688.9ZM705.2 681.2L716.2 680.3L707.1 688.3ZM716.2 680.3L727.6 679.9L718.1 687.8ZM727.6 679.9L739.6 680.0L729.4 687.7ZM739.6 680.0L751.8 680.6L741.3 688.2ZM751.8 680.6L764.3 681.5L753.4 689.1ZM764.3 681.5L776.8 682.6L765.8 690.2ZM776.8 682.6L789.5 683.9L778.2 691.6ZM789.5 683.9L802.4 686.0L790.8 693.2ZM802.4 686.0L815.4 688.3L803.5 695.6ZM815.4 688.3L828.5 691.1L816.4 698.1ZM828.5 691.1L841.7 694.6L829.3 701.0ZM841.7 694.6L854.8 698.2L842.3 704.6ZM854.8 698.2L868.0 702.3L855.3 708.3ZM868.0 702.3L881.2 706.7L868.3 712.5ZM881.2 706.7L894.3 711.0L881.3 717.0ZM894.3 711.0L907.5 715.4L894.3 721.4ZM907.5 715.4L920.6 719.8L907.3 725.9ZM920.6 719.8L933.8 724.1L920.3 730.3ZM933.8 724.1L946.9 728.4L933.3 734.7ZM946.9 728.4L960.1 732.7L946.3 739.1ZM960.1 732.7L973.2 737.0L959.3 743.5ZM973.2 737.0L986.4 741.4L972.3 747.9ZM986.4 741.4L999.5 745.8L985.3 752.3ZM999.5 745.8L1012.7 750.2L998.3 756.8ZM1012.7 750.2L1025.8 754.6L1011.3 761.3ZM1025.8 754.6L1039.0 758.9L1024.2 765.7ZM1039.0 758.9L1052.1 763.3L1037.2 770.2ZM1052.1 763.3L1065.3 767.6L1050.2 774.6ZM1065.3 767.6L1078.4 771.9L1063.2 779.0ZM1078.4 771.9L1091.6 776.2L1076.2 783.4ZM1091.6 776.2L1104.7 780.6L1089.2 787.8ZM1104.7 780.6L1117.9 784.9L1102.2 792.2ZM1117.9 784.9L1131.0 789.3L1115.2 796.6ZM1131.0 789.3L1144.2 793.6L1128.2 801.1ZM1144.2 793.6L1157.3 798.0L1141.2 805.5ZM634.4 695.2L644.4 694.2L636.2 699.3ZM644.4 694.2L654.5 693.2L646.3 698.8ZM654.5 693.2L664.8 692.4L656.4 698.2ZM664.8 692.4L675.5 691.8L666.7 697.8ZM675.5 691.8L686.1 691.2L677.4 697.6ZM686.1 691.2L696.8 690.5L688.0 697.4ZM696.8 690.5L707.6 690.1L698.7 697.2ZM707.6 690.1L718.6 689.7L709.5 697.1ZM718.6 689.7L729.9 689.7L720.4 697.2ZM729.9 689.7L741.8 690.3L731.7 697.5ZM741.8 690.3L753.9 691.2L743.5 698.4ZM753.9 691.2L766.2 692.4L755.5 699.7ZM766.2 692.4L778.6 693.9L767.7 701.2ZM778.6 693.9L791.1 695.6L780.0 703.0ZM791.1 695.6L803.8 697.9L792.3 704.9ZM803.8 697.9L816.6 700.5L804.9 707.5ZM816.6 700.5L829.5 703.5L817.6 710.2ZM829.5 703.5L842.5 707.1L830.3 713.4ZM842.5 707.1L855.5 710.9L843.1 717.2ZM855.5 710.9L868.4 715.1L856.0 721.0ZM868.4 715.1L881.4 719.6L868.8 725.3ZM881.4 719.6L894.3 724.0L881.5 729.9ZM894.3 724.0L907.3 728.5L894.3 734.5ZM907.3 728.5L920.2 732.9L907.1 739.0ZM920.2 732.9L933.2 737.4L919.9 743.5ZM933.2 737.4L946.1 741.8L932.7 748.0ZM946.1 741.8L959.1 746.2L945.5 752.5ZM959.1 746.2L972.1 750.6L958.3 757.0ZM972.1 750.6L985.0 755.1L971.1 761.5ZM985.0 755.1L998.0 759.6L983.9 766.0ZM998.0 759.6L1010.9 764.0L996.7 770.6ZM1010.9 764.0L1023.9 768.5L1009.5 775.1ZM1023.9 768.5L1036.8 773.0L1022.3 779.7ZM1036.8 773.0L1049.8 777.4L1035.1 784.2ZM1049.8 777.4L1062.7 781.8L1047.9 788.7ZM1062.7 781.8L1075.7 786.2L1060.7 793.2ZM1075.7 786.2L1088.6 790.7L1073.5 797.7ZM1088.6 790.7L1101.6 795.1L1086.3 802.2ZM1101.6 795.1L1114.5 799.6L1099.1 806.7ZM1114.5 799.6L1127.5 804.0L1111.9 811.3ZM1127.5 804.0L1140.4 808.5L1124.7 815.8ZM1140.4 808.5L1153.4 812.9L1137.4 820.3ZM636.7 700.4L646.8 699.9L638.5 704.5ZM646.8 699.9L656.9 699.5L648.7 704.5ZM656.9 699.5L667.2 699.2L658.8 704.5ZM667.2 699.2L677.9 699.1L669.2 704.6ZM677.9 699.1L688.5 699.0L679.8 704.9ZM688.5 699.0L699.2 698.9L690.4 705.2ZM699.2 698.9L710.0 698.9L701.1 705.5ZM710.0 698.9L720.9 699.0L711.8 706.0ZM720.9 699.0L732.2 699.5L722.8 706.5ZM732.2 699.5L743.9 700.5L734.0 707.3ZM743.9 700.5L755.9 701.8L745.6 708.7ZM755.9 701.8L768.0 703.4L757.5 710.3ZM768.0 703.4L780.3 705.2L769.6 712.2ZM780.3 705.2L792.6 707.2L781.7 714.3ZM792.6 707.2L805.2 709.9L793.9 716.5ZM805.2 709.9L817.8 712.7L806.3 719.4ZM817.8 712.7L830.5 715.9L818.8 722.4ZM830.5 715.9L843.3 719.7L831.3 725.8ZM843.3 719.7L856.1 723.6L844.0 729.7ZM856.1 723.6L868.8 727.9L856.6 733.7ZM868.8 727.9L881.6 732.5L869.2 738.2ZM881.6 732.5L894.3 737.1L881.8 742.8ZM894.3 737.1L907.1 741.6L894.4 747.5ZM907.1 741.6L919.9 746.1L907.0 752.1ZM919.9 746.1L932.6 750.7L919.6 756.7ZM932.6 750.7L945.4 755.2L932.2 761.3ZM945.4 755.2L958.1 759.7L944.7 765.9ZM958.1 759.7L970.9 764.2L957.3 770.5ZM970.9 764.2L983.6 768.8L969.9 775.1ZM983.6 768.8L996.4 773.3L982.5 779.7ZM996.4 773.3L1009.1 777.9L995.1 784.4ZM1009.1 777.9L1021.9 782.5L1007.7 789.0ZM1021.9 782.5L1034.6 787.0L1020.3 793.7ZM1034.6 787.0L1047.4 791.6L1032.9 798.3ZM1047.4 791.6L1060.2 796.1L1045.5 802.9ZM1060.2 796.1L1072.9 800.6L1058.1 807.5ZM1072.9 800.6L1085.7 805.1L1070.7 812.1ZM1085.7 805.1L1098.4 809.7L1083.3 816.7ZM1098.4 809.7L1111.2 814.2L1095.9 821.3ZM1111.2 814.2L1123.9 818.7L1108.5 825.9ZM1123.9 818.7L1136.7 823.3L1121.1 830.5ZM1136.7 823.3L1149.5 827.8L1133.7 835.1ZM639.0 705.5L649.1 705.6L640.8 709.6ZM649.1 705.6L659.3 705.7L651.0 710.2ZM659.3 705.7L669.6 706.0L661.2 710.7ZM669.6 706.0L680.3 706.4L671.6 711.4ZM680.3 706.4L690.9 706.8L682.2 712.2ZM690.9 706.8L701.5 707.2L692.8 713.1ZM701.5 707.2L712.3 707.7L703.5 713.9ZM712.3 707.7L723.2 708.4L714.2 714.8ZM723.2 708.4L734.4 709.3L725.1 715.8ZM734.4 709.3L746.1 710.7L736.2 717.1ZM746.1 710.7L757.9 712.4L747.8 718.9ZM757.9 712.4L769.9 714.4L759.6 720.9ZM769.9 714.4L782.0 716.5L771.5 723.2ZM782.0 716.5L794.2 718.9L783.4 725.6ZM794.2 718.9L806.6 721.8L795.5 728.2ZM806.6 721.8L819.1 724.8L807.7 731.3ZM819.1 724.8L831.5 728.2L820.0 734.6ZM831.5 728.2L844.1 732.2L832.4 738.2ZM844.1 732.2L856.7 736.3L844.8 742.3ZM856.7 736.3L869.3 740.7L857.2 746.4ZM869.3 740.7L881.8 745.4L869.6 751.0ZM881.8 745.4L894.4 750.1L882.0 755.7ZM894.4 750.1L906.9 754.7L894.4 760.5ZM906.9 754.7L919.5 759.3L906.8 765.2ZM919.5 759.3L932.0 764.0L919.2 769.9ZM932.0 764.0L944.6 768.6L931.6 774.6ZM944.6 768.6L957.2 773.2L944.0 779.3ZM957.2 773.2L969.7 777.8L956.4 784.0ZM969.7 777.8L982.3 782.4L968.8 788.7ZM982.3 782.4L994.8 787.1L981.2 793.4ZM994.8 787.1L1007.4 791.8L993.6 798.1ZM1007.4 791.8L1019.9 796.4L1006.0 802.9ZM1019.9 796.4L1032.5 801.1L1018.4 807.6ZM1032.5 801.1L1045.0 805.7L1030.8 812.3ZM1045.0 805.7L1057.6 810.3L1043.2 817.0ZM1057.6 810.3L1070.2 814.9L1055.6 821.7ZM1070.2 814.9L1082.7 819.6L1068.0 826.4ZM1082.7 819.6L1095.3 824.2L1080.4 831.1ZM1095.3 824.2L1107.8 828.8L1092.7 835.8ZM1107.8 828.8L1120.4 833.5L1105.1 840.5ZM1120.4 833.5L1132.9 838.1L1117.5 845.3ZM1132.9 838.1L1145.5 842.8L1129.9 850.0ZM641.3 710.6L651.5 711.3L643.1 714.8ZM651.5 711.3L661.6 711.9L653.3 715.9ZM661.6 711.9L672.0 712.7L663.6 716.9ZM672.0 712.7L682.7 713.7L674.0 718.2ZM682.7 713.7L693.3 714.6L684.6 719.5ZM693.3 714.6L703.9 715.5L695.2 720.9ZM703.9 715.5L714.7 716.6L705.8 722.2ZM714.7 716.6L725.6 717.7L716.6 723.7ZM725.6 717.7L736.7 719.1L727.4 725.2ZM736.7 719.1L748.2 720.9L738.5 726.9ZM748.2 720.9L760.0 723.0L750.0 729.1ZM760.0 723.0L771.8 725.4L761.6 731.5ZM771.8 725.4L783.8 727.9L773.3 734.1ZM783.8 727.9L795.8 730.5L785.2 736.9ZM795.8 730.5L808.0 733.7L797.1 739.8ZM808.0 733.7L820.3 737.0L809.1 743.2ZM820.3 737.0L832.6 740.6L821.2 746.7ZM832.6 740.6L844.9 744.8L833.4 750.5ZM844.9 744.8L857.3 749.0L845.6 754.8ZM857.3 749.0L869.7 753.5L857.8 759.1ZM869.7 753.5L882.0 758.3L870.0 763.8ZM882.0 758.3L894.4 763.1L882.2 768.6ZM894.4 763.1L906.7 767.8L894.4 773.5ZM906.7 767.8L919.1 772.5L906.6 778.3ZM919.1 772.5L931.5 777.3L918.8 783.1ZM931.5 777.3L943.8 782.0L931.0 787.9ZM943.8 782.0L956.2 786.7L943.2 792.7ZM956.2 786.7L968.5 791.4L955.4 797.5ZM968.5 791.4L980.9 796.1L967.6 802.3ZM980.9 796.1L993.3 800.9L979.8 807.1ZM993.3 800.9L1005.6 805.6L992.0 811.9ZM1005.6 805.6L1018.0 810.4L1004.2 816.7ZM1018.0 810.4L1030.3 815.2L1016.4 821.6ZM1030.3 815.2L1042.7 819.9L1028.6 826.4ZM1042.7 819.9L1055.0 824.6L1040.8 831.2ZM1055.0 824.6L1067.4 829.3L1053.0 836.0ZM1067.4 829.3L1079.8 834.0L1065.2 840.8ZM1079.8 834.0L1092.1 838.7L1077.4 845.6ZM1092.1 838.7L1104.5 843.5L1089.6 850.4ZM1104.5 843.5L1116.8 848.2L1101.8 855.2ZM1116.8 848.2L1129.2 852.9L1114.0 860.0ZM1129.2 852.9L1141.5 857.7L1126.2 864.8ZM643.6 715.8L653.8 717.0L645.4 719.9ZM653.8 717.0L664.0 718.2L655.7 721.6ZM664.0 718.2L674.5 719.5L665.9 723.2ZM674.5 719.5L685.1 721.0L676.4 725.0ZM685.1 721.0L695.7 722.4L687.0 726.8ZM695.7 722.4L706.3 723.9L697.6 728.7ZM706.3 723.9L717.1 725.4L708.2 730.6ZM717.1 725.4L727.9 727.0L719.0 732.5ZM727.9 727.0L739.0 728.9L729.8 734.5ZM739.0 728.9L750.4 731.2L740.8 736.8ZM750.4 731.2L762.0 733.6L752.1 739.3ZM762.0 733.6L773.7 736.3L763.6 742.1ZM773.7 736.3L785.5 739.2L775.2 745.1ZM785.5 739.2L797.4 742.2L786.9 748.2ZM797.4 742.2L809.4 745.6L798.6 751.5ZM809.4 745.6L821.5 749.2L810.5 755.1ZM821.5 749.2L833.6 753.0L822.4 758.9ZM833.6 753.0L845.8 757.3L834.4 762.9ZM845.8 757.3L857.9 761.7L846.4 767.4ZM857.9 761.7L870.1 766.4L858.4 771.8ZM870.1 766.4L882.2 771.2L870.4 776.6ZM882.2 771.2L894.4 776.1L882.4 781.5ZM894.4 776.1L906.6 780.9L894.4 786.5ZM906.6 780.9L918.7 785.7L906.4 791.4ZM918.7 785.7L930.9 790.5L918.4 796.3ZM930.9 790.5L943.0 795.4L930.4 801.2ZM943.0 795.4L955.2 800.2L942.4 806.1ZM955.2 800.2L967.4 805.0L954.4 811.0ZM967.4 805.0L979.5 809.8L966.4 815.8ZM979.5 809.8L991.7 814.7L978.4 820.7ZM991.7 814.7L1003.8 819.5L990.4 825.7ZM1003.8 819.5L1016.0 824.4L1002.4 830.6ZM1016.0 824.4L1028.2 829.2L1014.4 835.5ZM1028.2 829.2L1040.3 834.0L1026.4 840.5ZM1040.3 834.0L1052.5 838.8L1038.4 845.3ZM1052.5 838.8L1064.6 843.6L1050.4 850.2ZM1064.6 843.6L1076.8 848.4L1062.4 855.1ZM1076.8 848.4L1089.0 853.3L1074.4 860.0ZM1089.0 853.3L1101.1 858.1L1086.4 864.9ZM1101.1 858.1L1113.3 862.9L1098.4 869.8ZM1113.3 862.9L1125.4 867.8L1110.4 874.7ZM1125.4 867.8L1137.6 872.6L1122.4 879.6ZM645.9 721.0L656.2 722.7L647.7 725.1ZM656.2 722.7L666.4 724.4L658.0 727.3ZM666.4 724.4L676.9 726.3L668.3 729.4ZM676.9 726.3L687.5 728.3L678.8 731.7ZM687.5 728.3L698.1 730.3L689.4 734.1ZM698.1 730.3L708.7 732.2L700.0 736.5ZM708.7 732.2L719.4 734.3L710.6 738.9ZM719.4 734.3L730.2 736.4L721.3 741.3ZM730.2 736.4L741.2 738.7L732.1 743.9ZM741.2 738.7L752.6 741.4L743.1 746.6ZM752.6 741.4L764.0 744.3L754.3 749.6ZM764.0 744.3L775.6 747.3L765.7 752.7ZM775.6 747.3L787.3 750.5L777.1 756.1ZM787.3 750.5L799.0 753.8L788.6 759.6ZM799.0 753.8L810.8 757.5L800.2 763.1ZM810.8 757.5L822.7 761.3L811.9 767.1ZM822.7 761.3L834.6 765.4L823.6 771.1ZM834.6 765.4L846.6 769.9L835.4 775.3ZM846.6 769.9L858.5 774.4L847.2 779.9ZM858.5 774.4L870.5 779.2L859.0 784.6ZM870.5 779.2L882.5 784.1L870.8 789.4ZM882.5 784.1L894.4 789.1L882.6 794.5ZM894.4 789.1L906.4 794.0L894.4 799.5ZM906.4 794.0L918.3 798.9L906.2 804.5ZM918.3 798.9L930.3 803.8L918.0 809.5ZM930.3 803.8L942.3 808.7L929.9 814.5ZM942.3 808.7L954.2 813.6L941.7 819.5ZM954.2 813.6L966.2 818.6L953.5 824.4ZM966.2 818.6L978.2 823.5L965.3 829.4ZM978.2 823.5L990.1 828.4L977.1 834.4ZM990.1 828.4L1002.1 833.4L988.9 839.5ZM1002.1 833.4L1014.0 838.3L1000.7 844.5ZM1014.0 838.3L1026.0 843.3L1012.5 849.5ZM1026.0 843.3L1038.0 848.2L1024.3 854.5ZM1038.0 848.2L1049.9 853.1L1036.1 859.5ZM1049.9 853.1L1061.9 858.0L1047.9 864.5ZM1061.9 858.0L1073.8 862.9L1059.7 869.5ZM1073.8 862.9L1085.8 867.8L1071.5 874.5ZM1085.8 867.8L1097.8 872.7L1083.3 879.5ZM1097.8 872.7L1109.7 877.7L1095.1 884.5ZM1109.7 877.7L1121.7 882.6L1106.9 889.5ZM1121.7 882.6L1133.7 887.5L1118.7 894.5ZM648.2 726.1L658.5 728.4L650.0 730.2ZM658.5 728.4L668.8 730.7L660.4 733.0ZM668.8 730.7L679.3 733.1L670.7 735.7ZM679.3 733.1L689.9 735.6L681.2 738.5ZM689.9 735.6L700.5 738.1L691.8 741.4ZM700.5 738.1L711.1 740.6L702.4 744.3ZM711.1 740.6L721.8 743.1L713.0 747.2ZM721.8 743.1L732.6 745.7L723.7 750.2ZM732.6 745.7L743.5 748.5L734.4 753.2ZM743.5 748.5L754.7 751.6L745.3 756.4ZM754.7 751.6L766.1 754.9L756.5 759.8ZM766.1 754.9L777.5 758.3L767.7 763.4ZM777.5 758.3L789.0 761.8L779.0 767.1ZM789.0 761.8L800.5 765.5L790.4 770.9ZM800.5 765.5L812.2 769.4L801.8 774.8ZM812.2 769.4L823.9 773.5L813.3 779.0ZM823.9 773.5L835.6 777.8L824.9 783.2ZM835.6 777.8L847.4 782.4L836.4 787.7ZM847.4 782.4L859.2 787.1L848.0 792.5ZM859.2 787.1L870.9 792.0L859.7 797.3ZM870.9 792.0L882.7 797.0L871.3 802.3ZM882.7 797.0L894.4 802.1L882.9 807.4ZM894.4 802.1L906.2 807.1L894.5 812.5ZM906.2 807.1L918.0 812.1L906.1 817.6ZM918.0 812.1L929.7 817.1L917.7 822.7ZM929.7 817.1L941.5 822.1L929.3 827.8ZM941.5 822.1L953.3 827.1L940.9 832.8ZM953.3 827.1L965.0 832.1L952.5 837.9ZM965.0 832.1L976.8 837.2L964.1 843.0ZM976.8 837.2L988.6 842.2L975.7 848.1ZM988.6 842.2L1000.3 847.2L987.3 853.2ZM1000.3 847.2L1012.1 852.3L998.9 858.3ZM1012.1 852.3L1023.8 857.3L1010.5 863.5ZM1023.8 857.3L1035.6 862.3L1022.1 868.6ZM1035.6 862.3L1047.4 867.3L1033.7 873.6ZM1047.4 867.3L1059.1 872.3L1045.3 878.7ZM1059.1 872.3L1070.9 877.3L1056.9 883.8ZM1070.9 877.3L1082.7 882.4L1068.5 888.9ZM1082.7 882.4L1094.4 887.4L1080.1 894.0ZM1094.4 887.4L1106.2 892.4L1091.7 899.1ZM1106.2 892.4L1117.9 897.4L1103.3 904.2ZM1117.9 897.4L1129.7 902.5L1114.9 909.3ZM650.5 731.2L660.8 734.1L652.3 735.4ZM660.8 734.1L671.2 736.9L662.7 738.7ZM671.2 736.9L681.7 739.9L673.1 741.9ZM681.7 739.9L692.3 742.9L683.6 745.3ZM692.3 742.9L702.9 745.9L694.2 748.7ZM702.9 745.9L713.5 748.9L704.8 752.1ZM713.5 748.9L724.2 752.0L715.4 755.6ZM724.2 752.0L734.9 755.1L726.1 759.0ZM734.9 755.1L745.8 758.3L736.8 762.5ZM745.8 758.3L756.9 761.8L747.6 766.2ZM756.9 761.8L768.1 765.5L758.6 770.0ZM768.1 765.5L779.4 769.3L769.7 774.0ZM779.4 769.3L790.7 773.1L780.9 778.0ZM790.7 773.1L802.1 777.1L792.1 782.2ZM802.1 777.1L813.6 781.4L803.4 786.4ZM813.6 781.4L825.1 785.7L814.7 790.9ZM825.1 785.7L836.6 790.2L826.1 795.4ZM836.6 790.2L848.2 795.0L837.4 800.1ZM848.2 795.0L859.8 799.8L848.9 805.0ZM859.8 799.8L871.3 804.8L860.3 810.0ZM871.3 804.8L882.9 810.0L871.7 815.1ZM882.9 810.0L894.5 815.1L883.1 820.3ZM894.5 815.1L906.0 820.2L894.5 825.5ZM906.0 820.2L917.6 825.3L905.9 830.7ZM917.6 825.3L929.2 830.4L917.3 835.9ZM929.2 830.4L940.7 835.5L928.7 841.1ZM940.7 835.5L952.3 840.6L940.1 846.2ZM952.3 840.6L963.9 845.7L951.5 851.4ZM963.9 845.7L975.4 850.8L962.9 856.6ZM975.4 850.8L987.0 856.0L974.3 861.8ZM987.0 856.0L998.5 861.1L985.7 867.0ZM998.5 861.1L1010.1 866.2L997.1 872.2ZM1010.1 866.2L1021.7 871.4L1008.5 877.4ZM1021.7 871.4L1033.2 876.5L1019.9 882.6ZM1033.2 876.5L1044.8 881.6L1031.3 887.8ZM1044.8 881.6L1056.4 886.7L1042.8 893.0ZM1056.4 886.7L1067.9 891.8L1054.2 898.2ZM1067.9 891.8L1079.5 896.9L1065.6 903.3ZM1079.5 896.9L1091.1 902.0L1077.0 908.5ZM1091.1 902.0L1102.6 907.1L1088.4 913.7ZM1102.6 907.1L1114.2 912.3L1099.8 918.9ZM1114.2 912.3L1125.8 917.4L1111.2 924.1ZM652.8 736.4L663.2 739.8L654.6 740.5ZM663.2 739.8L673.6 743.2L665.1 744.4ZM673.6 743.2L684.1 746.7L675.5 748.2ZM684.1 746.7L694.7 750.2L686.0 752.1ZM694.7 750.2L705.3 753.7L696.6 756.0ZM705.3 753.7L715.9 757.2L707.2 760.0ZM715.9 757.2L726.5 760.8L717.8 763.9ZM726.5 760.8L737.2 764.4L728.4 767.9ZM737.2 764.4L748.1 768.1L739.1 771.9ZM748.1 768.1L759.1 772.1L749.9 776.0ZM759.1 772.1L770.1 776.1L760.8 780.2ZM770.1 776.1L781.3 780.2L771.8 784.6ZM781.3 780.2L792.5 784.5L782.8 789.0ZM792.5 784.5L803.7 788.7L793.9 793.5ZM803.7 788.7L815.0 793.3L805.0 798.1ZM815.0 793.3L826.3 797.8L816.1 802.8ZM826.3 797.8L837.6 802.6L827.3 807.6ZM837.6 802.6L849.0 807.5L838.5 812.5ZM849.0 807.5L860.4 812.5L849.7 817.6ZM860.4 812.5L871.8 817.6L860.9 822.7ZM871.8 817.6L883.1 822.9L872.1 827.9ZM883.1 822.9L894.5 828.1L883.3 833.2ZM894.5 828.1L905.9 833.3L894.5 838.5ZM905.9 833.3L917.2 838.5L905.7 843.8ZM917.2 838.5L928.6 843.7L916.9 849.1ZM928.6 843.7L940.0 848.9L928.1 854.3ZM940.0 848.9L951.3 854.1L939.3 859.6ZM951.3 854.1L962.7 859.3L950.5 864.9ZM962.7 859.3L974.1 864.5L961.7 870.2ZM974.1 864.5L985.4 869.8L973.0 875.5ZM985.4 869.8L996.8 875.0L984.2 880.8ZM996.8 875.0L1008.1 880.2L995.4 886.1ZM1008.1 880.2L1019.5 885.4L1006.6 891.4ZM1019.5 885.4L1030.9 890.6L1017.8 896.7ZM1030.9 890.6L1042.2 895.8L1029.0 902.0ZM1042.2 895.8L1053.6 901.0L1040.2 907.2ZM1053.6 901.0L1065.0 906.2L1051.4 912.5ZM1065.0 906.2L1076.3 911.4L1062.6 917.8ZM1076.3 911.4L1087.7 916.7L1073.8 923.1ZM1087.7 916.7L1099.1 921.9L1085.0 928.4ZM1099.1 921.9L1110.4 927.1L1096.2 933.7ZM1110.4 927.1L1121.8 932.3L1107.4 939.0ZM655.1 741.5L665.5 745.5L656.9 745.7ZM665.5 745.5L676.0 749.4L667.4 750.1ZM676.0 749.4L686.5 753.4L677.9 754.4ZM686.5 753.4L697.1 757.5L688.4 758.9ZM697.1 757.5L707.7 761.5L699.0 763.3ZM707.7 761.5L718.3 765.6L709.6 767.8ZM718.3 765.6L728.9 769.6L720.2 772.2ZM728.9 769.6L739.6 773.7L730.8 776.7ZM739.6 773.7L750.3 777.9L741.4 781.2ZM750.3 777.9L761.2 782.3L752.1 785.8ZM761.2 782.3L772.2 786.7L763.0 790.5ZM772.2 786.7L783.2 791.2L773.8 795.2ZM783.2 791.2L794.2 795.8L784.7 800.0ZM794.2 795.8L805.3 800.4L795.6 804.8ZM805.3 800.4L816.4 805.2L806.5 809.7ZM816.4 805.2L827.5 810.0L817.5 814.7ZM827.5 810.0L838.7 815.0L828.5 819.8ZM838.7 815.0L849.8 820.1L839.5 824.9ZM849.8 820.1L861.0 825.2L850.5 830.1ZM861.0 825.2L872.2 830.5L861.5 835.4ZM872.2 830.5L883.3 835.8L872.5 840.7ZM883.3 835.8L894.5 841.1L883.5 846.1ZM894.5 841.1L905.7 846.4L894.5 851.5ZM905.7 846.4L916.8 851.7L905.5 856.9ZM916.8 851.7L928.0 857.0L916.5 862.3ZM928.0 857.0L939.2 862.3L927.6 867.6ZM939.2 862.3L950.3 867.6L938.6 873.0ZM950.3 867.6L961.5 872.9L949.6 878.4ZM961.5 872.9L972.7 878.2L960.6 883.8ZM972.7 878.2L983.8 883.5L971.6 889.2ZM983.8 883.5L995.0 888.9L982.6 894.6ZM995.0 888.9L1006.2 894.2L993.6 899.9ZM1006.2 894.2L1017.3 899.5L1004.6 905.3ZM1017.3 899.5L1028.5 904.8L1015.6 910.7ZM1028.5 904.8L1039.7 910.1L1026.6 916.1ZM1039.7 910.1L1050.8 915.4L1037.6 921.5ZM1050.8 915.4L1062.0 920.7L1048.6 926.9ZM1062.0 920.7L1073.2 926.0L1059.6 932.2ZM1073.2 926.0L1084.3 931.3L1070.7 937.6ZM1084.3 931.3L1095.5 936.6L1081.7 943.0ZM1095.5 936.6L1106.7 941.9L1092.7 948.4ZM1106.7 941.9L1117.8 947.2L1103.7 953.8ZM657.4 746.7L667.9 751.2L659.2 750.8ZM667.9 751.2L678.4 755.7L669.8 755.8ZM678.4 755.7L688.9 760.2L680.3 760.7ZM688.9 760.2L699.5 764.8L690.8 765.6ZM699.5 764.8L710.1 769.3L701.4 770.6ZM710.1 769.3L720.7 773.9L712.0 775.6ZM720.7 773.9L731.3 778.5L722.6 780.6ZM731.3 778.5L741.9 783.1L733.2 785.6ZM741.9 783.1L752.6 787.7L743.8 790.6ZM752.6 787.7L763.4 792.5L754.4 795.6ZM763.4 792.5L774.2 797.3L765.1 800.7ZM774.2 797.3L785.1 802.2L775.8 805.8ZM785.1 802.2L796.0 807.1L786.6 811.0ZM796.0 807.1L806.8 812.0L797.3 816.2ZM806.8 812.0L817.8 817.1L808.1 821.4ZM817.8 817.1L828.7 822.2L818.9 826.6ZM828.7 822.2L839.7 827.3L829.7 831.9ZM839.7 827.3L850.7 832.6L840.5 837.3ZM850.7 832.6L861.6 837.9L851.3 842.7ZM861.6 837.9L872.6 843.3L862.1 848.1ZM872.6 843.3L883.6 848.7L872.9 853.5ZM883.6 848.7L894.5 854.1L883.7 859.0ZM894.5 854.1L905.5 859.5L894.5 864.5ZM905.5 859.5L916.5 864.9L905.4 870.0ZM916.5 864.9L927.4 870.3L916.2 875.5ZM927.4 870.3L938.4 875.7L927.0 880.9ZM938.4 875.7L949.4 881.1L937.8 886.4ZM949.4 881.1L960.3 886.5L948.6 891.9ZM960.3 886.5L971.3 891.9L959.4 897.4ZM971.3 891.9L982.3 897.3L970.2 902.8ZM982.3 897.3L993.2 902.7L981.0 908.3ZM993.2 902.7L1004.2 908.1L991.8 913.8ZM1004.2 908.1L1015.2 913.5L1002.6 919.3ZM1015.2 913.5L1026.2 918.9L1013.5 924.8ZM1026.2 918.9L1037.1 924.3L1024.3 930.3ZM1037.1 924.3L1048.1 929.7L1035.1 935.7ZM1048.1 929.7L1059.1 935.1L1045.9 941.2ZM1059.1 935.1L1070.0 940.5L1056.7 946.7ZM1070.0 940.5L1081.0 945.9L1067.5 952.2ZM1081.0 945.9L1092.0 951.3L1078.3 957.6ZM1092.0 951.3L1102.9 956.7L1089.1 963.1ZM1102.9 956.7L1113.9 962.1L1099.9 968.6ZM659.7 751.9L670.2 756.9L661.5 756.0ZM670.2 756.9L680.8 761.9L672.1 761.5ZM680.8 761.9L691.3 767.0L682.7 766.9ZM691.3 767.0L701.9 772.1L693.2 772.4ZM701.9 772.1L712.5 777.2L703.8 777.9ZM712.5 777.2L723.0 782.2L714.4 783.4ZM723.0 782.2L733.6 787.3L725.0 788.9ZM733.6 787.3L744.2 792.4L735.5 794.4ZM744.2 792.4L754.9 797.6L746.1 799.9ZM754.9 797.6L765.6 802.7L756.7 805.4ZM765.6 802.7L776.2 807.9L767.3 810.9ZM776.2 807.9L787.0 813.2L777.9 816.4ZM787.0 813.2L797.7 818.4L788.5 821.9ZM797.7 818.4L808.4 823.7L799.1 827.5ZM808.4 823.7L819.2 829.0L809.7 833.0ZM819.2 829.0L829.9 834.4L820.3 838.5ZM829.9 834.4L840.7 839.7L830.9 844.1ZM840.7 839.7L851.5 845.2L841.5 849.6ZM851.5 845.2L862.2 850.6L852.1 855.2ZM862.2 850.6L873.0 856.1L862.7 860.8ZM873.0 856.1L883.8 861.6L873.3 866.3ZM883.8 861.6L894.6 867.1L884.0 871.9ZM894.6 867.1L905.3 872.6L894.6 877.5ZM905.3 872.6L916.1 878.1L905.2 883.1ZM916.1 878.1L926.9 883.6L915.8 888.6ZM926.9 883.6L937.6 889.1L926.4 894.2ZM937.6 889.1L948.4 894.6L937.0 899.8ZM948.4 894.6L959.2 900.1L947.6 905.4ZM959.2 900.1L969.9 905.6L958.2 910.9ZM969.9 905.6L980.7 911.1L968.8 916.5ZM980.7 911.1L991.5 916.6L979.5 922.1ZM991.5 916.6L1002.2 922.1L990.1 927.7ZM1002.2 922.1L1013.0 927.6L1000.7 933.3ZM1013.0 927.6L1023.8 933.1L1011.3 938.8ZM1023.8 933.1L1034.6 938.6L1021.9 944.4ZM1034.6 938.6L1045.3 944.1L1032.5 950.0ZM1045.3 944.1L1056.1 949.6L1043.1 955.6ZM1056.1 949.6L1066.9 955.1L1053.7 961.1ZM1066.9 955.1L1077.6 960.6L1064.3 966.7ZM1077.6 960.6L1088.4 966.1L1075.0 972.3ZM1088.4 966.1L1099.2 971.6L1085.6 977.9ZM1099.2 971.6L1110.0 977.1L1096.2 983.4Z" fill="none" stroke="#c0f264" stroke-width="1.1" shape-rendering="crispEdges"/>
<path d="M570.0 551.0L578.8 534.6L571.8 555.1ZM578.8 534.6L587.6 518.2L580.7 539.2ZM587.6 518.2L597.4 502.5L589.5 523.2ZM597.4 502.5L608.3 487.4L599.3 507.9ZM608.3 487.4L619.1 472.3L610.2 493.2ZM619.1 472.3L629.9 457.1L621.0 478.5ZM629.9 457.1L641.3 442.5L631.8 463.8ZM641.3 442.5L653.2 428.2L643.2 449.5ZM653.2 428.2L666.3 415.1L655.1 435.6ZM666.3 415.1L681.2 404.0L668.1 423.0ZM681.2 404.0L696.9 394.0L682.9 412.2ZM696.9 394.0L713.2 385.1L698.5 402.5ZM713.2 385.1L729.9 377.0L714.7 393.9ZM729.9 377.0L746.9 369.5L731.3 386.0ZM746.9 369.5L764.8 364.3L748.2 378.8ZM764.8 364.3L782.8 359.8L765.9 373.8ZM782.8 359.8L801.1 356.6L783.8 369.5ZM801.1 356.6L819.6 355.7L801.9 366.5ZM819.6 355.7L838.2 355.2L820.3 365.8ZM838.2 355.2L856.7 356.2L838.7 365.4ZM856.7 356.2L875.2 358.1L857.1 366.5ZM875.2 358.1L893.8 359.9L875.4 368.4ZM893.8 359.9L912.3 361.7L893.8 370.3ZM912.3 361.7L930.8 363.5L912.1 372.2ZM930.8 363.5L949.3 365.2L930.5 374.1ZM949.3 365.2L967.8 366.9L948.8 375.8ZM967.8 366.9L986.3 368.5L967.2 377.6ZM986.3 368.5L1004.9 370.2L985.6 379.3ZM1004.9 370.2L1023.4 372.0L1003.9 381.0ZM1023.4 372.0L1041.9 373.9L1022.3 382.9ZM1041.9 373.9L1060.4 375.8L1040.6 384.9ZM1060.4 375.8L1078.9 377.7L1058.9 386.8ZM1078.9 377.7L1097.4 379.5L1077.3 388.8ZM1097.4 379.5L1115.9 381.1L1095.6 390.7ZM1115.9 381.1L1134.4 382.8L1114.0 392.5ZM1134.4 382.8L1152.9 384.5L1132.4 394.2ZM1152.9 384.5L1171.4 386.1L1150.7 395.9ZM1171.4 386.1L1190.0 387.9L1169.1 397.7ZM1190.0 387.9L1208.5 389.7L1187.4 399.6ZM1208.5 389.7L1227.0 391.5L1205.8 401.4ZM1227.0 391.5L1245.5 393.2L1224.1 403.3ZM1245.5 393.2L1264.0 395.0L1242.5 405.1Z" fill="none" stroke="#c0f264" stroke-width="1.10" shape-rendering="crispEdges"/>
<path d="M572.3 556.1L581.1 540.3L574.1 560.3ZM581.1 540.3L590.0 524.5L583.0 544.9ZM590.0 524.5L599.8 509.3L591.9 529.5ZM599.8 509.3L610.7 494.7L601.7 514.7ZM610.7 494.7L621.5 480.1L612.6 500.5ZM621.5 480.1L632.3 465.5L623.4 486.3ZM632.3 465.5L643.7 451.3L634.2 472.1ZM643.7 451.3L655.5 437.5L645.5 458.4ZM655.5 437.5L668.6 424.9L657.4 445.0ZM668.6 424.9L683.3 414.2L670.4 432.8ZM683.3 414.2L698.9 404.6L685.1 422.4ZM698.9 404.6L715.1 396.1L700.5 413.1ZM715.1 396.1L731.6 388.3L716.6 404.9ZM731.6 388.3L748.5 381.1L733.0 397.3ZM748.5 381.1L766.2 376.2L749.7 390.4ZM766.2 376.2L784.0 371.9L767.3 385.8ZM784.0 371.9L802.1 369.0L785.0 381.7ZM802.1 369.0L820.4 368.3L802.9 378.9ZM820.4 368.3L838.8 367.9L821.1 378.3ZM838.8 367.9L857.2 369.0L839.3 378.1ZM857.2 369.0L875.5 371.0L857.5 379.3ZM875.5 371.0L893.8 372.9L875.6 381.3ZM893.8 372.9L912.1 374.8L893.8 383.3ZM912.1 374.8L930.4 376.7L911.9 385.3ZM930.4 376.7L948.7 378.5L930.1 387.2ZM948.7 378.5L967.0 380.2L948.3 389.1ZM967.0 380.2L985.4 382.0L966.4 391.0ZM985.4 382.0L1003.7 383.8L984.6 392.8ZM1003.7 383.8L1022.0 385.6L1002.7 394.6ZM1022.0 385.6L1040.3 387.6L1020.9 396.6ZM1040.3 387.6L1058.6 389.6L1039.0 398.7ZM1058.6 389.6L1076.9 391.6L1057.2 400.7ZM1076.9 391.6L1095.2 393.5L1075.3 402.8ZM1095.2 393.5L1113.5 395.3L1093.5 404.8ZM1113.5 395.3L1131.8 397.1L1111.6 406.6ZM1131.8 397.1L1150.2 398.8L1129.8 408.5ZM1150.2 398.8L1168.5 400.6L1148.0 410.3ZM1168.5 400.6L1186.8 402.5L1166.1 412.1ZM1186.8 402.5L1205.1 404.3L1184.3 414.1ZM1205.1 404.3L1223.4 406.2L1202.4 416.0ZM1223.4 406.2L1241.7 408.1L1220.6 418.0ZM1241.7 408.1L1260.0 409.9L1238.7 419.9Z" fill="none" stroke="#c0f264" stroke-width="1.10" shape-rendering="crispEdges"/>
<path d="M574.6 561.3L583.5 546.0L576.4 565.4ZM583.5 546.0L592.4 530.7L585.4 550.6ZM592.4 530.7L602.2 516.1L594.3 535.7ZM602.2 516.1L613.1 502.0L604.2 521.5ZM613.1 502.0L623.9 487.9L615.0 507.8ZM623.9 487.9L634.7 473.8L625.8 494.2ZM634.7 473.8L646.0 460.1L636.6 480.5ZM646.0 460.1L657.9 446.8L647.9 467.2ZM657.9 446.8L670.8 434.7L659.7 454.3ZM670.8 434.7L685.5 424.4L672.6 442.6ZM685.5 424.4L700.9 415.2L687.2 432.6ZM700.9 415.2L717.0 407.1L702.6 423.7ZM717.0 407.1L733.4 399.6L718.5 415.9ZM733.4 399.6L750.1 392.8L734.8 408.7ZM750.1 392.8L767.5 388.1L751.3 402.1ZM767.5 388.1L785.2 384.1L768.7 397.7ZM785.2 384.1L803.1 381.4L786.2 393.8ZM803.1 381.4L821.3 380.8L803.9 391.3ZM821.3 380.8L839.4 380.6L821.9 390.9ZM839.4 380.6L857.6 381.8L839.9 390.8ZM857.6 381.8L875.7 383.9L857.9 392.1ZM875.7 383.9L893.8 385.9L875.9 394.2ZM893.8 385.9L911.9 387.9L893.8 396.3ZM911.9 387.9L930.0 389.9L911.8 398.4ZM930.0 389.9L948.1 391.8L929.7 400.4ZM948.1 391.8L966.3 393.6L947.7 402.4ZM966.3 393.6L984.4 395.5L965.6 404.3ZM984.4 395.5L1002.5 397.4L983.6 406.3ZM1002.5 397.4L1020.6 399.3L1001.6 408.2ZM1020.6 399.3L1038.7 401.4L1019.5 410.3ZM1038.7 401.4L1056.8 403.5L1037.5 412.4ZM1056.8 403.5L1074.9 405.6L1055.4 414.6ZM1074.9 405.6L1093.0 407.6L1073.4 416.7ZM1093.0 407.6L1111.2 409.4L1091.3 418.8ZM1111.2 409.4L1129.3 411.3L1109.3 420.8ZM1129.3 411.3L1147.4 413.2L1127.2 422.7ZM1147.4 413.2L1165.5 415.0L1145.2 424.6ZM1165.5 415.0L1183.6 417.0L1163.2 426.6ZM1183.6 417.0L1201.8 419.0L1181.1 428.6ZM1201.8 419.0L1219.9 420.9L1199.1 430.7ZM1219.9 420.9L1238.0 422.9L1217.0 432.7ZM1238.0 422.9L1256.1 424.9L1235.0 434.8Z" fill="none" stroke="#c0f264" stroke-width="1.10" shape-rendering="crispEdges"/>
<path d="M576.9 566.5L585.8 551.7L578.7 570.6ZM585.8 551.7L594.8 537.0L587.7 556.3ZM594.8 537.0L604.6 522.8L596.7 542.0ZM604.6 522.8L615.5 509.3L606.6 528.3ZM615.5 509.3L626.3 495.7L617.4 515.1ZM626.3 495.7L637.1 482.1L628.2 502.0ZM637.1 482.1L648.4 469.0L639.0 488.8ZM648.4 469.0L660.2 456.2L650.3 476.1ZM660.2 456.2L673.1 444.5L662.1 463.7ZM673.1 444.5L687.7 434.7L674.9 452.4ZM687.7 434.7L703.0 425.8L689.4 442.8ZM703.0 425.8L718.9 418.0L704.6 434.3ZM718.9 418.0L735.1 410.9L720.4 426.8ZM735.1 410.9L751.6 404.4L736.5 420.0ZM751.6 404.4L768.9 400.1L752.9 413.7ZM768.9 400.1L786.4 396.3L770.1 409.6ZM786.4 396.3L804.1 393.8L787.4 406.0ZM804.1 393.8L822.1 393.4L804.9 403.7ZM822.1 393.4L840.1 393.3L822.7 403.4ZM840.1 393.3L858.0 394.7L840.6 403.5ZM858.0 394.7L875.9 396.8L858.3 404.9ZM875.9 396.8L893.8 398.9L876.1 407.2ZM893.8 398.9L911.7 401.0L893.8 409.4ZM911.7 401.0L929.6 403.1L911.6 411.5ZM929.6 403.1L947.6 405.1L929.3 413.6ZM947.6 405.1L965.5 407.0L947.1 415.7ZM965.5 407.0L983.4 409.0L964.9 417.7ZM983.4 409.0L1001.3 410.9L982.6 419.8ZM1001.3 410.9L1019.3 413.0L1000.4 421.8ZM1019.3 413.0L1037.2 415.2L1018.2 424.0ZM1037.2 415.2L1055.1 417.4L1035.9 426.2ZM1055.1 417.4L1073.0 419.5L1053.6 428.5ZM1073.0 419.5L1090.9 421.6L1071.4 430.7ZM1090.9 421.6L1108.8 423.6L1089.1 432.9ZM1108.8 423.6L1126.7 425.6L1106.9 434.9ZM1126.7 425.6L1144.6 427.5L1124.7 437.0ZM1144.6 427.5L1162.6 429.5L1142.4 439.0ZM1162.6 429.5L1180.5 431.5L1160.2 441.0ZM1180.5 431.5L1198.4 433.6L1178.0 443.2ZM1198.4 433.6L1216.3 435.7L1195.7 445.3ZM1216.3 435.7L1234.2 437.7L1213.5 447.5ZM1234.2 437.7L1252.2 439.8L1231.2 449.6Z" fill="none" stroke="#c0f264" stroke-width="1.10" shape-rendering="crispEdges"/>
<path d="M579.2 571.6L588.2 557.4L581.0 575.7ZM588.2 557.4L597.1 543.2L590.0 562.0ZM597.1 543.2L607.0 529.6L599.1 548.2ZM607.0 529.6L617.9 516.6L609.0 535.0ZM617.9 516.6L628.7 503.5L619.8 522.4ZM628.7 503.5L639.5 490.5L630.6 509.8ZM639.5 490.5L650.8 477.8L641.4 497.2ZM650.8 477.8L662.5 465.5L652.7 484.9ZM662.5 465.5L675.4 454.3L664.4 473.0ZM675.4 454.3L689.8 444.9L677.2 462.2ZM689.8 444.9L705.0 436.5L691.6 453.1ZM705.0 436.5L720.7 429.0L706.6 444.9ZM720.7 429.0L736.8 422.2L722.3 437.8ZM736.8 422.2L753.2 416.1L738.2 431.3ZM753.2 416.1L770.3 412.0L754.5 425.4ZM770.3 412.0L787.6 408.5L771.5 421.5ZM787.6 408.5L805.1 406.2L788.6 418.2ZM805.1 406.2L822.9 405.9L805.9 416.1ZM822.9 405.9L840.7 406.0L823.5 416.0ZM840.7 406.0L858.4 407.5L841.2 416.2ZM858.4 407.5L876.1 409.7L858.7 417.7ZM876.1 409.7L893.8 412.0L876.3 420.1ZM893.8 412.0L911.5 414.1L893.8 422.4ZM911.5 414.1L929.3 416.3L911.4 424.6ZM929.3 416.3L947.0 418.4L929.0 426.8ZM947.0 418.4L964.7 420.4L946.5 429.0ZM964.7 420.4L982.4 422.5L964.1 431.1ZM982.4 422.5L1000.2 424.5L981.7 433.3ZM1000.2 424.5L1017.9 426.7L999.2 435.4ZM1017.9 426.7L1035.6 429.0L1016.8 437.6ZM1035.6 429.0L1053.3 431.2L1034.3 440.0ZM1053.3 431.2L1071.0 433.5L1051.9 442.3ZM1071.0 433.5L1088.7 435.7L1069.4 444.7ZM1088.7 435.7L1106.4 437.8L1087.0 446.9ZM1106.4 437.8L1124.2 439.8L1104.5 449.1ZM1124.2 439.8L1141.9 441.9L1122.1 451.2ZM1141.9 441.9L1159.6 443.9L1139.7 453.3ZM1159.6 443.9L1177.3 446.1L1157.2 455.5ZM1177.3 446.1L1195.0 448.3L1174.8 457.7ZM1195.0 448.3L1212.8 450.4L1192.4 460.0ZM1212.8 450.4L1230.5 452.6L1209.9 462.2ZM1230.5 452.6L1248.2 454.7L1227.5 464.4Z" fill="none" stroke="#c0f264" stroke-width="1.10" shape-rendering="crispEdges"/>
<path d="M581.5 576.8L590.5 563.1L583.3 580.9ZM590.5 563.1L599.5 549.5L592.4 567.7ZM599.5 549.5L609.4 536.4L601.4 554.5ZM609.4 536.4L620.3 523.9L611.4 541.8ZM620.3 523.9L631.1 511.4L622.2 529.7ZM631.1 511.4L641.8 498.8L633.0 517.6ZM641.8 498.8L653.1 486.7L643.8 505.5ZM653.1 486.7L664.9 474.9L655.0 493.7ZM664.9 474.9L677.6 464.1L666.7 482.3ZM677.6 464.1L692.0 455.1L679.5 472.0ZM692.0 455.1L707.0 447.1L693.7 463.3ZM707.0 447.1L722.6 440.0L708.7 455.6ZM722.6 440.0L738.6 433.6L724.2 448.8ZM738.6 433.6L754.8 427.7L740.0 442.6ZM754.8 427.7L771.7 423.9L756.1 437.0ZM771.7 423.9L788.8 420.6L772.8 433.4ZM788.8 420.6L806.1 418.6L789.8 430.4ZM806.1 418.6L823.7 418.5L807.0 428.5ZM823.7 418.5L841.3 418.7L824.4 428.5ZM841.3 418.7L858.8 420.3L841.8 428.9ZM858.8 420.3L876.3 422.7L859.2 430.5ZM876.3 422.7L893.9 425.0L876.5 433.0ZM893.9 425.0L911.4 427.2L893.9 435.4ZM911.4 427.2L928.9 429.5L911.2 437.7ZM928.9 429.5L946.4 431.7L928.6 440.0ZM946.4 431.7L963.9 433.8L946.0 442.3ZM963.9 433.8L981.5 436.0L963.3 444.5ZM981.5 436.0L999.0 438.1L980.7 446.8ZM999.0 438.1L1016.5 440.4L998.1 449.0ZM1016.5 440.4L1034.0 442.7L1015.4 451.3ZM1034.0 442.7L1051.5 445.1L1032.8 453.8ZM1051.5 445.1L1069.0 447.5L1050.1 456.2ZM1069.0 447.5L1086.5 449.8L1067.5 458.6ZM1086.5 449.8L1104.1 451.9L1084.8 461.0ZM1104.1 451.9L1121.6 454.1L1102.2 463.2ZM1121.6 454.1L1139.1 456.2L1119.6 465.5ZM1139.1 456.2L1156.7 458.4L1136.9 467.7ZM1156.7 458.4L1174.2 460.6L1154.3 469.9ZM1174.2 460.6L1191.7 462.9L1171.7 472.3ZM1191.7 462.9L1209.2 465.1L1189.0 474.6ZM1209.2 465.1L1226.7 467.4L1206.4 476.9ZM1226.7 467.4L1244.2 469.6L1223.7 479.2Z" fill="none" stroke="#c0f264" stroke-width="1.10" shape-rendering="crispEdges"/>
<path d="M583.8 581.9L592.9 568.8L585.6 586.0ZM592.9 568.8L601.9 555.7L594.7 573.4ZM601.9 555.7L611.9 543.2L603.8 560.7ZM611.9 543.2L622.7 531.2L613.8 548.6ZM622.7 531.2L633.5 519.2L624.6 537.0ZM633.5 519.2L644.2 507.2L635.4 525.4ZM644.2 507.2L655.5 495.5L646.1 513.8ZM655.5 495.5L667.2 484.2L657.4 502.6ZM667.2 484.2L679.9 473.9L669.1 491.7ZM679.9 473.9L694.1 465.3L681.7 481.8ZM694.1 465.3L709.1 457.7L695.9 473.5ZM709.1 457.7L724.5 451.0L710.7 466.2ZM724.5 451.0L740.3 444.9L726.0 459.8ZM740.3 444.9L756.4 439.4L741.7 453.9ZM756.4 439.4L773.1 435.8L757.6 448.7ZM773.1 435.8L790.0 432.8L774.2 445.3ZM790.0 432.8L807.2 430.9L791.0 442.5ZM807.2 430.9L824.5 431.0L808.0 440.9ZM824.5 431.0L841.9 431.4L825.2 441.1ZM841.9 431.4L859.2 433.1L842.4 441.6ZM859.2 433.1L876.6 435.6L859.6 443.4ZM876.6 435.6L893.9 438.0L876.7 445.9ZM893.9 438.0L911.2 440.3L893.9 448.4ZM911.2 440.3L928.5 442.7L911.1 450.8ZM928.5 442.7L945.8 444.9L928.2 453.2ZM945.8 444.9L963.2 447.2L945.4 455.6ZM963.2 447.2L980.5 449.5L962.5 457.9ZM980.5 449.5L997.8 451.7L979.7 460.2ZM997.8 451.7L1015.1 454.1L996.9 462.6ZM1015.1 454.1L1032.5 456.5L1014.0 465.0ZM1032.5 456.5L1049.8 459.0L1031.2 467.5ZM1049.8 459.0L1067.1 461.4L1048.3 470.1ZM1067.1 461.4L1084.4 463.8L1065.5 472.6ZM1084.4 463.8L1101.7 466.1L1082.7 475.0ZM1101.7 466.1L1119.0 468.3L1099.8 477.4ZM1119.0 468.3L1136.4 470.6L1117.0 479.7ZM1136.4 470.6L1153.7 472.8L1134.2 482.0ZM1153.7 472.8L1171.0 475.2L1151.3 484.4ZM1171.0 475.2L1188.3 477.5L1168.5 486.8ZM1188.3 477.5L1205.7 479.9L1185.7 489.2ZM1205.7 479.9L1223.0 482.2L1202.8 491.7ZM1223.0 482.2L1240.3 484.6L1220.0 494.1Z" fill="none" stroke="#c0f264" stroke-width="1.10" shape-rendering="crispEdges"/>
<path d="M586.1 587.0L595.2 574.5L587.9 591.2ZM595.2 574.5L604.3 562.0L597.1 579.1ZM604.3 562.0L614.3 550.0L606.2 567.0ZM614.3 550.0L625.1 538.5L616.2 555.4ZM625.1 538.5L635.9 527.0L627.0 544.3ZM635.9 527.0L646.6 515.5L637.8 533.2ZM646.6 515.5L657.9 504.4L648.5 522.2ZM657.9 504.4L669.5 493.5L659.8 511.4ZM669.5 493.5L682.2 483.8L671.4 501.0ZM682.2 483.8L696.3 475.6L684.0 491.6ZM696.3 475.6L711.1 468.3L698.0 483.7ZM711.1 468.3L726.4 462.0L712.7 476.8ZM726.4 462.0L742.1 456.2L727.9 470.7ZM742.1 456.2L757.9 451.0L743.4 465.3ZM757.9 451.0L774.5 447.7L759.2 460.3ZM774.5 447.7L791.2 445.0L775.6 457.2ZM791.2 445.0L808.2 443.3L792.2 454.7ZM808.2 443.3L825.3 443.6L809.0 453.2ZM825.3 443.6L842.5 444.1L826.0 453.6ZM842.5 444.1L859.7 445.9L843.0 454.3ZM859.7 445.9L876.8 448.5L860.0 456.2ZM876.8 448.5L893.9 451.0L877.0 458.8ZM893.9 451.0L911.0 453.4L893.9 461.4ZM911.0 453.4L928.1 455.9L910.9 463.9ZM928.1 455.9L945.3 458.2L927.8 466.4ZM945.3 458.2L962.4 460.6L944.8 468.9ZM962.4 460.6L979.5 462.9L961.8 471.3ZM979.5 462.9L996.7 465.3L978.7 473.7ZM996.7 465.3L1013.8 467.7L995.7 476.2ZM1013.8 467.7L1030.9 470.3L1012.7 478.7ZM1030.9 470.3L1048.0 472.8L1029.6 481.3ZM1048.0 472.8L1065.1 475.4L1046.6 483.9ZM1065.1 475.4L1082.2 477.9L1063.5 486.5ZM1082.2 477.9L1099.4 480.2L1080.5 489.1ZM1099.4 480.2L1116.5 482.6L1097.5 491.5ZM1116.5 482.6L1133.6 484.9L1114.4 494.0ZM1133.6 484.9L1150.7 487.3L1131.4 496.4ZM1150.7 487.3L1167.9 489.7L1148.4 498.8ZM1167.9 489.7L1185.0 492.2L1165.3 501.4ZM1185.0 492.2L1202.1 494.6L1182.3 503.9ZM1202.1 494.6L1219.2 497.0L1199.3 506.4ZM1219.2 497.0L1236.3 499.5L1216.2 508.9Z" fill="none" stroke="#c0f264" stroke-width="1.10" shape-rendering="crispEdges"/>
<path d="M588.4 592.2L597.5 580.2L590.2 596.3ZM597.5 580.2L606.7 568.2L599.4 584.8ZM606.7 568.2L616.7 556.7L608.6 573.2ZM616.7 556.7L627.5 545.8L618.6 562.2ZM627.5 545.8L638.2 534.8L629.4 551.6ZM638.2 534.8L649.0 523.8L640.2 541.1ZM649.0 523.8L660.2 513.2L650.9 530.5ZM660.2 513.2L671.9 502.9L662.1 520.3ZM671.9 502.9L684.5 493.6L673.7 510.4ZM684.5 493.6L698.5 485.8L686.3 501.4ZM698.5 485.8L713.1 478.9L700.2 494.0ZM713.1 478.9L728.3 472.9L714.8 487.4ZM728.3 472.9L743.8 467.5L729.8 481.7ZM743.8 467.5L759.5 462.7L745.2 476.6ZM759.5 462.7L775.9 459.6L760.8 472.0ZM775.9 459.6L792.5 457.1L777.0 469.2ZM792.5 457.1L809.2 455.7L793.4 466.9ZM809.2 455.7L826.2 456.1L810.0 465.6ZM826.2 456.1L843.1 456.8L826.8 466.2ZM843.1 456.8L860.1 458.7L843.6 467.0ZM860.1 458.7L877.0 461.4L860.4 469.0ZM877.0 461.4L893.9 464.0L877.2 471.7ZM893.9 464.0L910.8 466.5L893.9 474.4ZM910.8 466.5L927.8 469.1L910.7 477.0ZM927.8 469.1L944.7 471.5L927.5 479.6ZM944.7 471.5L961.6 474.0L944.2 482.2ZM961.6 474.0L978.6 476.4L961.0 484.7ZM978.6 476.4L995.5 478.9L977.8 487.2ZM995.5 478.9L1012.4 481.4L994.5 489.7ZM1012.4 481.4L1029.3 484.1L1011.3 492.4ZM1029.3 484.1L1046.2 486.7L1028.1 495.1ZM1046.2 486.7L1063.1 489.3L1044.8 497.8ZM1063.1 489.3L1080.1 491.9L1061.6 500.5ZM1080.1 491.9L1097.0 494.4L1078.3 503.2ZM1097.0 494.4L1113.9 496.8L1095.1 505.7ZM1113.9 496.8L1130.9 499.3L1111.9 508.2ZM1130.9 499.3L1147.8 501.7L1128.6 510.7ZM1147.8 501.7L1164.7 504.3L1145.4 513.3ZM1164.7 504.3L1181.6 506.8L1162.2 515.9ZM1181.6 506.8L1198.6 509.3L1178.9 518.5ZM1198.6 509.3L1215.5 511.9L1195.7 521.1ZM1215.5 511.9L1232.4 514.4L1212.5 523.7Z" fill="none" stroke="#c0f264" stroke-width="1.10" shape-rendering="crispEdges"/>
<path d="M590.7 597.4L599.9 585.9L592.5 601.5ZM599.9 585.9L609.1 574.5L601.8 590.5ZM609.1 574.5L619.1 563.5L611.0 579.5ZM619.1 563.5L629.9 553.1L621.0 569.0ZM629.9 553.1L640.6 542.6L631.8 558.9ZM640.6 542.6L651.4 532.2L642.6 548.9ZM651.4 532.2L662.6 522.0L653.3 538.8ZM662.6 522.0L674.2 512.2L664.5 529.1ZM674.2 512.2L686.7 503.4L676.1 519.7ZM686.7 503.4L700.6 496.0L688.5 511.2ZM700.6 496.0L715.2 489.5L702.4 504.2ZM715.2 489.5L730.2 483.9L716.8 498.0ZM730.2 483.9L745.5 478.8L731.7 492.7ZM745.5 478.8L761.1 474.3L746.9 487.9ZM761.1 474.3L777.3 471.5L762.4 483.6ZM777.3 471.5L793.7 469.3L778.4 481.1ZM793.7 469.3L810.2 468.1L794.6 479.0ZM810.2 468.1L827.0 468.7L811.0 478.0ZM827.0 468.7L843.8 469.5L827.6 478.7ZM843.8 469.5L860.5 471.6L844.3 479.7ZM860.5 471.6L877.2 474.3L860.8 481.8ZM877.2 474.3L893.9 477.0L877.4 484.6ZM893.9 477.0L910.7 479.6L894.0 487.4ZM910.7 479.6L927.4 482.2L910.5 490.1ZM927.4 482.2L944.1 484.8L927.1 492.8ZM944.1 484.8L960.8 487.4L943.7 495.5ZM960.8 487.4L977.6 489.9L960.2 498.1ZM977.6 489.9L994.3 492.5L976.8 500.7ZM994.3 492.5L1011.0 495.1L993.4 503.3ZM1011.0 495.1L1027.7 497.8L1009.9 506.0ZM1027.7 497.8L1044.5 500.6L1026.5 508.9ZM1044.5 500.6L1061.2 503.3L1043.1 511.7ZM1061.2 503.3L1077.9 506.0L1059.6 514.5ZM1077.9 506.0L1094.6 508.5L1076.2 517.2ZM1094.6 508.5L1111.4 511.1L1092.7 519.8ZM1111.4 511.1L1128.1 513.6L1109.3 522.5ZM1128.1 513.6L1144.8 516.2L1125.9 525.1ZM1144.8 516.2L1161.6 518.8L1142.5 527.7ZM1161.6 518.8L1178.3 521.4L1159.0 530.4ZM1178.3 521.4L1195.0 524.1L1175.6 533.1ZM1195.0 524.1L1211.7 526.7L1192.2 535.9ZM1211.7 526.7L1228.5 529.3L1208.7 538.6Z" fill="none" stroke="#c0f264" stroke-width="1.10" shape-rendering="crispEdges"/>
</g>
<polygon points="570.0,551.0 592.0,510.0 610.0,485.0 635.0,450.0 660.0,420.0 678.0,406.0 700.0,392.0 723.0,380.0 748.0,369.0 773.0,362.0 795.0,357.0 811.0,356.0 845.0,355.0 884.0,358.0 936.0,362.0 1014.0,366.0 1092.0,365.0 1170.0,369.0 1222.0,379.0 1248.0,388.0 1264.0,392.0 1264.0,404.0 1222.0,392.0 1170.0,383.0 1092.0,380.0 1014.0,381.0 936.0,378.0 884.0,374.0 845.0,373.0 811.0,375.0 773.0,382.0 748.0,390.0 723.0,403.0 700.0,410.0 678.0,424.0 660.0,438.0 640.0,462.0 620.0,488.0 600.0,516.0 585.0,540.0 573.0,556.0" fill="#c0f264" opacity="0.8" filter="url(#b3)"/>
<polygon points="570.0,551.0 592.0,510.0 610.0,485.0 635.0,450.0 660.0,420.0 678.0,406.0 700.0,392.0 723.0,380.0 748.0,369.0 773.0,362.0 795.0,357.0 811.0,356.0 845.0,355.0 884.0,358.0 936.0,362.0 1014.0,366.0 1092.0,365.0 1170.0,369.0 1222.0,379.0 1248.0,388.0 1264.0,392.0 1266.0,515.0 1100.0,508.0 900.0,504.0 760.0,496.0 700.0,480.0 660.0,472.0 630.0,482.0 600.0,510.0 575.0,552.0" fill="#c0f264" opacity="0.0" filter="url(#b3)"/>
<polygon points="570.0,551.0 592.0,510.0 610.0,485.0 635.0,450.0 660.0,420.0 678.0,406.0 700.0,392.0 723.0,380.0 748.0,369.0 773.0,362.0 773.0,400.0 760.0,481.0 715.0,483.0 689.0,477.0 657.0,474.0 631.0,483.0 603.0,513.0 573.0,552.0" fill="#c0f264" opacity="0.45" filter="url(#b3)"/>
<polyline points="758.0,392.0 848.0,387.0 900.0,380.0 915.0,385.0 940.0,392.0 1100.0,394.0 1212.0,397.0" fill="none" stroke="#c0f264" stroke-width="9" stroke-linecap="round" stroke-linejoin="round" opacity="0.62" filter="url(#b1)"/>
<polyline points="720.0,408.0 761.0,410.5 809.0,412.0 857.0,407.0 900.0,399.0 960.0,404.0 1100.0,409.0 1262.0,413.0" fill="none" stroke="#c0f264" stroke-width="9" stroke-linecap="round" stroke-linejoin="round" opacity="0.57" filter="url(#b1)"/>
<polyline points="700.0,427.0 761.0,430.0 809.0,434.6 857.0,431.0 900.0,426.6 1100.0,429.0 1262.0,432.0" fill="none" stroke="#c0f264" stroke-width="9" stroke-linecap="round" stroke-linejoin="round" opacity="0.52" filter="url(#b1)"/>
<polyline points="690.0,449.0 745.0,452.0 793.0,452.0 841.0,450.7 900.0,446.0 1100.0,447.0 1262.0,450.0" fill="none" stroke="#c0f264" stroke-width="9" stroke-linecap="round" stroke-linejoin="round" opacity="0.47" filter="url(#b1)"/>
<polyline points="677.0,471.6 729.0,474.8 793.0,471.6 900.0,465.0 1100.0,465.0 1262.0,468.0" fill="none" stroke="#c0f264" stroke-width="9" stroke-linecap="round" stroke-linejoin="round" opacity="0.42" filter="url(#b1)"/>
<polyline points="712.0,495.7 713.0,495.7 793.0,492.5 900.0,484.5 1100.0,483.0 1262.0,486.0" fill="none" stroke="#c0f264" stroke-width="9" stroke-linecap="round" stroke-linejoin="round" opacity="0.37" filter="url(#b1)"/>
<polyline points="712.0,510.0 716.0,510.0 900.0,504.0 1100.0,501.0 1262.0,504.0" fill="none" stroke="#c0f264" stroke-width="9" stroke-linecap="round" stroke-linejoin="round" opacity="0.32" filter="url(#b1)"/>
<polyline points="758.0,383.0 848.0,378.0 900.0,371.0 915.0,376.0 940.0,383.0 1100.0,385.0 1212.0,388.0" fill="none" stroke="#74493a" stroke-width="8.0" stroke-linecap="round" stroke-linejoin="round" opacity="0.87" filter="url(#b1)"/>
<polyline points="720.0,399.0 761.0,401.5 809.0,403.0 857.0,398.0 900.0,390.0 960.0,395.0 1100.0,400.0 1262.0,404.0" fill="none" stroke="#74493a" stroke-width="8.8" stroke-linecap="round" stroke-linejoin="round" opacity="0.87" filter="url(#b1)"/>
<polyline points="700.0,418.0 761.0,421.0 809.0,425.6 857.0,422.0 900.0,417.6 1100.0,420.0 1262.0,423.0" fill="none" stroke="#74493a" stroke-width="9.2" stroke-linecap="round" stroke-linejoin="round" opacity="0.85" filter="url(#b1)"/>
<polyline points="690.0,440.0 745.0,443.0 793.0,443.0 841.0,441.7 900.0,437.0 1100.0,438.0 1262.0,441.0" fill="none" stroke="#74493a" stroke-width="9.2" stroke-linecap="round" stroke-linejoin="round" opacity="0.81" filter="url(#b1)"/>
<polyline points="677.0,462.6 729.0,465.8 793.0,462.6 900.0,456.0 1100.0,456.0 1262.0,459.0" fill="none" stroke="#74493a" stroke-width="8.8" stroke-linecap="round" stroke-linejoin="round" opacity="0.74" filter="url(#b1)"/>
<polyline points="656.0,478.7 713.0,486.7 793.0,483.5 900.0,475.5 1100.0,474.0 1262.0,477.0" fill="none" stroke="#74493a" stroke-width="8.8" stroke-linecap="round" stroke-linejoin="round" opacity="0.64" filter="url(#b1)"/>
<polyline points="716.0,501.0 900.0,495.0 1100.0,492.0 1262.0,495.0" fill="none" stroke="#74493a" stroke-width="8.0" stroke-linecap="round" stroke-linejoin="round" opacity="0.46" filter="url(#b1)"/>
<g mask="url(#mb)"><rect x="540" y="500" width="600" height="520" fill="#5a8184"/><rect x="540" y="500" width="600" height="520" fill="url(#spB)"/><rect x="540" y="500" width="600" height="520" fill="url(#spB2)"/></g>
<pattern id="spK" patternUnits="userSpaceOnUse" width="29" height="31"><rect x="20" y="30" width="1" height="1" fill="#000"/><rect x="25" y="4" width="1" height="1" fill="#000"/><rect x="0" y="27" width="1" height="1" fill="#000"/><rect x="2" y="19" width="1" height="1" fill="#000"/><rect x="23" y="22" width="1" height="1" fill="#000"/><rect x="26" y="3" width="1" height="1" fill="#000"/><rect x="6" y="4" width="1" height="1" fill="#000"/><rect x="28" y="15" width="1" height="1" fill="#000"/><rect x="9" y="30" width="1" height="1" fill="#000"/><rect x="25" y="29" width="1" height="1" fill="#000"/><rect x="25" y="5" width="1" height="1" fill="#000"/><rect x="21" y="25" width="1" height="1" fill="#000"/><rect x="23" y="29" width="1" height="1" fill="#000"/><rect x="7" y="2" width="1" height="1" fill="#000"/><rect x="26" y="11" width="1" height="1" fill="#000"/><rect x="19" y="24" width="1" height="1" fill="#000"/><rect x="8" y="5" width="1" height="1" fill="#000"/><rect x="10" y="28" width="1" height="1" fill="#000"/><rect x="19" y="8" width="1" height="1" fill="#000"/><rect x="28" y="26" width="1" height="1" fill="#000"/><rect x="14" y="4" width="1" height="1" fill="#000"/><rect x="8" y="16" width="1" height="1" fill="#000"/><rect x="15" y="6" width="1" height="1" fill="#000"/><rect x="18" y="8" width="1" height="1" fill="#000"/><rect x="19" y="16" width="1" height="1" fill="#000"/><rect x="7" y="10" width="1" height="1" fill="#000"/><rect x="11" y="1" width="1" height="1" fill="#000"/><rect x="6" y="5" width="1" height="1" fill="#000"/><rect x="12" y="5" width="1" height="1" fill="#000"/><rect x="20" y="29" width="1" height="1" fill="#000"/><rect x="8" y="21" width="1" height="1" fill="#000"/><rect x="10" y="28" width="1" height="1" fill="#000"/><rect x="12" y="5" width="1" height="1" fill="#000"/><rect x="25" y="25" width="1" height="1" fill="#000"/><rect x="8" y="3" width="1" height="1" fill="#000"/><rect x="24" y="16" width="1" height="1" fill="#000"/><rect x="1" y="20" width="1" height="1" fill="#000"/><rect x="27" y="11" width="1" height="1" fill="#000"/><rect x="27" y="14" width="1" height="1" fill="#000"/><rect x="17" y="16" width="1" height="1" fill="#000"/><rect x="18" y="22" width="1" height="1" fill="#000"/><rect x="28" y="28" width="1" height="1" fill="#000"/><rect x="3" y="8" width="1" height="1" fill="#000"/><rect x="17" y="20" width="1" height="1" fill="#000"/><rect x="27" y="12" width="1" height="1" fill="#000"/><rect x="23" y="25" width="1" height="1" fill="#000"/><rect x="11" y="8" width="1" height="1" fill="#000"/><rect x="12" y="11" width="1" height="1" fill="#000"/><rect x="18" y="4" width="1" height="1" fill="#000"/><rect x="11" y="10" width="1" height="1" fill="#000"/><rect x="24" y="2" width="1" height="1" fill="#000"/><rect x="14" y="7" width="1" height="1" fill="#000"/><rect x="5" y="19" width="1" height="1" fill="#000"/><rect x="23" y="30" width="1" height="1" fill="#000"/><rect x="1" y="9" width="1" height="1" fill="#000"/><rect x="26" y="16" width="1" height="1" fill="#000"/><rect x="8" y="9" width="1" height="1" fill="#000"/><rect x="20" y="30" width="1" height="1" fill="#000"/><rect x="27" y="18" width="1" height="1" fill="#000"/><rect x="21" y="28" width="1" height="1" fill="#000"/><rect x="10" y="23" width="1" height="1" fill="#000"/><rect x="0" y="23" width="1" height="1" fill="#000"/><rect x="1" y="7" width="1" height="1" fill="#000"/><rect x="4" y="9" width="1" height="1" fill="#000"/><rect x="19" y="20" width="1" height="1" fill="#000"/><rect x="13" y="13" width="1" height="1" fill="#000"/><rect x="16" y="11" width="1" height="1" fill="#000"/><rect x="28" y="1" width="1" height="1" fill="#000"/><rect x="4" y="15" width="1" height="1" fill="#000"/><rect x="7" y="19" width="1" height="1" fill="#000"/><rect x="20" y="1" width="1" height="1" fill="#000"/><rect x="0" y="1" width="1" height="1" fill="#000"/><rect x="0" y="18" width="1" height="1" fill="#000"/><rect x="11" y="9" width="1" height="1" fill="#000"/><rect x="3" y="16" width="1" height="1" fill="#000"/><rect x="11" y="17" width="1" height="1" fill="#000"/><rect x="7" y="13" width="1" height="1" fill="#000"/><rect x="18" y="9" width="1" height="1" fill="#000"/><rect x="18" y="4" width="1" height="1" fill="#000"/><rect x="6" y="11" width="1" height="1" fill="#000"/><rect x="19" y="26" width="1" height="1" fill="#000"/><rect x="15" y="5" width="1" height="1" fill="#000"/><rect x="4" y="0" width="1" height="1" fill="#000"/><rect x="25" y="7" width="1" height="1" fill="#000"/><rect x="22" y="4" width="1" height="1" fill="#000"/><rect x="14" y="3" width="1" height="1" fill="#000"/><rect x="2" y="20" width="1" height="1" fill="#000"/><rect x="4" y="27" width="1" height="1" fill="#000"/><rect x="21" y="25" width="1" height="1" fill="#000"/><rect x="8" y="12" width="1" height="1" fill="#000"/><rect x="25" y="8" width="1" height="1" fill="#000"/><rect x="0" y="1" width="1" height="1" fill="#000"/><rect x="20" y="26" width="1" height="1" fill="#000"/><rect x="17" y="28" width="1" height="1" fill="#000"/><rect x="11" y="19" width="1" height="1" fill="#000"/><rect x="20" y="18" width="1" height="1" fill="#000"/><rect x="14" y="19" width="1" height="1" fill="#000"/><rect x="16" y="23" width="1" height="1" fill="#000"/><rect x="15" y="7" width="1" height="1" fill="#000"/><rect x="5" y="28" width="1" height="1" fill="#000"/><rect x="0" y="1" width="1" height="1" fill="#000"/><rect x="1" y="17" width="1" height="1" fill="#000"/><rect x="0" y="12" width="1" height="1" fill="#000"/><rect x="5" y="7" width="1" height="1" fill="#000"/><rect x="5" y="1" width="1" height="1" fill="#000"/><rect x="24" y="3" width="1" height="1" fill="#000"/><rect x="0" y="19" width="1" height="1" fill="#000"/><rect x="17" y="21" width="1" height="1" fill="#000"/><rect x="6" y="4" width="1" height="1" fill="#000"/><rect x="13" y="6" width="1" height="1" fill="#000"/><rect x="16" y="19" width="1" height="1" fill="#000"/><rect x="20" y="16" width="1" height="1" fill="#000"/><rect x="20" y="20" width="1" height="1" fill="#000"/><rect x="13" y="26" width="1" height="1" fill="#000"/><rect x="19" y="5" width="1" height="1" fill="#000"/><rect x="16" y="9" width="1" height="1" fill="#000"/><rect x="2" y="9" width="1" height="1" fill="#000"/><rect x="20" y="1" width="1" height="1" fill="#000"/><rect x="28" y="23" width="1" height="1" fill="#000"/><rect x="25" y="15" width="1" height="1" fill="#000"/><rect x="22" y="17" width="1" height="1" fill="#000"/><rect x="0" y="12" width="1" height="1" fill="#000"/><rect x="27" y="13" width="1" height="1" fill="#000"/><rect x="23" y="29" width="1" height="1" fill="#000"/><rect x="14" y="2" width="1" height="1" fill="#000"/><rect x="23" y="20" width="1" height="1" fill="#000"/><rect x="14" y="5" width="1" height="1" fill="#000"/><rect x="7" y="3" width="1" height="1" fill="#000"/><rect x="8" y="7" width="1" height="1" fill="#000"/><rect x="20" y="1" width="1" height="1" fill="#000"/><rect x="3" y="10" width="1" height="1" fill="#000"/><rect x="28" y="23" width="1" height="1" fill="#000"/><rect x="22" y="30" width="1" height="1" fill="#000"/><rect x="27" y="8" width="1" height="1" fill="#000"/><rect x="22" y="1" width="1" height="1" fill="#000"/><rect x="8" y="20" width="1" height="1" fill="#000"/><rect x="17" y="21" width="1" height="1" fill="#000"/><rect x="13" y="21" width="1" height="1" fill="#000"/><rect x="25" y="29" width="1" height="1" fill="#000"/><rect x="16" y="8" width="1" height="1" fill="#000"/><rect x="9" y="20" width="1" height="1" fill="#000"/><rect x="28" y="6" width="1" height="1" fill="#000"/><rect x="2" y="28" width="1" height="1" fill="#000"/><rect x="16" y="0" width="1" height="1" fill="#000"/><rect x="5" y="8" width="1" height="1" fill="#000"/><rect x="28" y="7" width="1" height="1" fill="#000"/><rect x="26" y="23" width="1" height="1" fill="#000"/><rect x="6" y="30" width="1" height="1" fill="#000"/><rect x="5" y="23" width="1" height="1" fill="#000"/><rect x="10" y="6" width="1" height="1" fill="#000"/><rect x="28" y="12" width="1" height="1" fill="#000"/><rect x="10" y="19" width="1" height="1" fill="#000"/><rect x="7" y="12" width="1" height="1" fill="#000"/><rect x="27" y="20" width="1" height="1" fill="#000"/><rect x="22" y="21" width="1" height="1" fill="#000"/><rect x="26" y="17" width="1" height="1" fill="#000"/><rect x="15" y="15" width="1" height="1" fill="#000"/><rect x="26" y="16" width="1" height="1" fill="#000"/><rect x="22" y="0" width="1" height="1" fill="#000"/><rect x="27" y="0" width="1" height="1" fill="#000"/><rect x="13" y="30" width="1" height="1" fill="#000"/><rect x="23" y="7" width="1" height="1" fill="#000"/><rect x="18" y="28" width="1" height="1" fill="#000"/><rect x="9" y="25" width="1" height="1" fill="#000"/><rect x="6" y="12" width="1" height="1" fill="#000"/><rect x="19" y="18" width="1" height="1" fill="#000"/><rect x="2" y="18" width="1" height="1" fill="#000"/><rect x="5" y="4" width="1" height="1" fill="#000"/><rect x="1" y="0" width="1" height="1" fill="#000"/><rect x="3" y="3" width="1" height="1" fill="#000"/><rect x="19" y="29" width="1" height="1" fill="#000"/><rect x="5" y="11" width="1" height="1" fill="#000"/><rect x="4" y="22" width="1" height="1" fill="#000"/><rect x="0" y="0" width="1" height="1" fill="#000"/><rect x="1" y="4" width="1" height="1" fill="#000"/><rect x="22" y="20" width="1" height="1" fill="#000"/><rect x="20" y="1" width="1" height="1" fill="#000"/><rect x="22" y="2" width="1" height="1" fill="#000"/><rect x="23" y="1" width="1" height="1" fill="#000"/><rect x="2" y="27" width="1" height="1" fill="#000"/><rect x="18" y="24" width="1" height="1" fill="#000"/><rect x="11" y="6" width="1" height="1" fill="#000"/><rect x="26" y="30" width="1" height="1" fill="#000"/><rect x="26" y="17" width="1" height="1" fill="#000"/><rect x="28" y="21" width="1" height="1" fill="#000"/><rect x="2" y="28" width="1" height="1" fill="#000"/><rect x="27" y="24" width="1" height="1" fill="#000"/><rect x="22" y="30" width="1" height="1" fill="#000"/><rect x="12" y="3" width="1" height="1" fill="#000"/><rect x="7" y="6" width="1" height="1" fill="#000"/><rect x="6" y="3" width="1" height="1" fill="#000"/><rect x="1" y="1" width="1" height="1" fill="#000"/><rect x="27" y="29" width="1" height="1" fill="#000"/><rect x="25" y="24" width="1" height="1" fill="#000"/><rect x="20" y="2" width="1" height="1" fill="#000"/><rect x="26" y="24" width="1" height="1" fill="#000"/><rect x="20" y="20" width="1" height="1" fill="#000"/><rect x="9" y="15" width="1" height="1" fill="#000"/><rect x="3" y="4" width="1" height="1" fill="#000"/><rect x="3" y="25" width="1" height="1" fill="#000"/><rect x="24" y="20" width="1" height="1" fill="#000"/><rect x="6" y="9" width="1" height="1" fill="#000"/><rect x="10" y="10" width="1" height="1" fill="#000"/><rect x="13" y="8" width="1" height="1" fill="#000"/><rect x="0" y="11" width="1" height="1" fill="#000"/><rect x="8" y="29" width="1" height="1" fill="#000"/><rect x="9" y="1" width="1" height="1" fill="#000"/><rect x="22" y="24" width="1" height="1" fill="#000"/><rect x="11" y="29" width="1" height="1" fill="#000"/><rect x="10" y="24" width="1" height="1" fill="#000"/><rect x="19" y="16" width="1" height="1" fill="#000"/><rect x="15" y="27" width="1" height="1" fill="#000"/><rect x="9" y="19" width="1" height="1" fill="#000"/><rect x="23" y="0" width="1" height="1" fill="#000"/><rect x="25" y="13" width="1" height="1" fill="#000"/><rect x="0" y="13" width="1" height="1" fill="#000"/><rect x="16" y="24" width="1" height="1" fill="#000"/><rect x="3" y="11" width="1" height="1" fill="#000"/><rect x="15" y="22" width="1" height="1" fill="#000"/><rect x="1" y="17" width="1" height="1" fill="#000"/><rect x="18" y="6" width="1" height="1" fill="#000"/><rect x="22" y="27" width="1" height="1" fill="#000"/><rect x="26" y="2" width="1" height="1" fill="#000"/><rect x="18" y="26" width="1" height="1" fill="#000"/><rect x="9" y="5" width="1" height="1" fill="#000"/><rect x="13" y="0" width="1" height="1" fill="#000"/><rect x="16" y="6" width="1" height="1" fill="#000"/><rect x="9" y="24" width="1" height="1" fill="#000"/><rect x="24" y="1" width="1" height="1" fill="#000"/><rect x="0" y="11" width="1" height="1" fill="#000"/><rect x="15" y="3" width="1" height="1" fill="#000"/><rect x="15" y="22" width="1" height="1" fill="#000"/><rect x="25" y="26" width="1" height="1" fill="#000"/><rect x="5" y="30" width="1" height="1" fill="#000"/><rect x="15" y="18" width="1" height="1" fill="#000"/><rect x="11" y="30" width="1" height="1" fill="#000"/><rect x="26" y="16" width="1" height="1" fill="#000"/><rect x="8" y="18" width="1" height="1" fill="#000"/><rect x="5" y="9" width="1" height="1" fill="#000"/><rect x="26" y="6" width="1" height="1" fill="#000"/><rect x="22" y="7" width="1" height="1" fill="#000"/><rect x="15" y="5" width="1" height="1" fill="#000"/><rect x="3" y="30" width="1" height="1" fill="#000"/><rect x="20" y="24" width="1" height="1" fill="#000"/><rect x="2" y="15" width="1" height="1" fill="#000"/><rect x="25" y="22" width="1" height="1" fill="#000"/><rect x="17" y="25" width="1" height="1" fill="#000"/><rect x="3" y="20" width="1" height="1" fill="#000"/><rect x="10" y="11" width="1" height="1" fill="#000"/><rect x="3" y="12" width="1" height="1" fill="#000"/><rect x="12" y="28" width="1" height="1" fill="#000"/><rect x="28" y="23" width="1" height="1" fill="#000"/><rect x="2" y="13" width="1" height="1" fill="#000"/><rect x="28" y="20" width="1" height="1" fill="#000"/><rect x="0" y="11" width="1" height="1" fill="#000"/><rect x="6" y="9" width="1" height="1" fill="#000"/><rect x="8" y="13" width="1" height="1" fill="#000"/><rect x="28" y="17" width="1" height="1" fill="#000"/><rect x="16" y="5" width="1" height="1" fill="#000"/><rect x="12" y="28" width="1" height="1" fill="#000"/></pattern>
<polyline points="570.0,551.0 662.0,757.0 915.0,890.0 1106.0,992.0" fill="none" stroke="url(#spK)" stroke-width="16" stroke-linejoin="round"/>
<polyline points="570.0,551.0 662.0,757.0 915.0,890.0 1106.0,992.0" fill="none" stroke="#000" stroke-opacity="0.18" stroke-width="8" stroke-linejoin="round"/>
</g>
</svg><div class="r" style="left:1px;top:1px;width:1920px;height:37px;background:#f3f0f7;border-radius:8px 8px 0 0;"></div>
<svg class="r" style="left:10px;top:11px" width="19" height="16" viewBox="0 0 19 16">
<defs><linearGradient id="ig" x1="0" y1="0" x2="1" y2="1"><stop offset="0" stop-color="#4a78ac"/><stop offset="0.5" stop-color="#4a9090"/><stop offset="1" stop-color="#5aae6a"/></linearGradient>
<linearGradient id="ig2" x1="0" y1="0" x2="0" y2="1"><stop offset="0" stop-color="#4a78b8"/><stop offset="1" stop-color="#6ac080"/></linearGradient></defs>
<rect x="0.5" y="0.5" width="18" height="14" rx="1" fill="#f6f6f8" stroke="#a4a8b0" stroke-width="1"/>
<rect x="2" y="3" width="8" height="10" fill="url(#ig)"/>
<rect x="11" y="3" width="6" height="10" fill="#eaeaea"/>
<rect x="14.5" y="3" width="1.6" height="6" fill="url(#ig2)"/>
</svg>
<div class="r" style="left:36px;top:10px;font-family:'Liberation Sans',sans-serif;font-size:15px;line-height:20px;color:#000;">Voxino</div>
<div class="r" style="left:1768px;top:18px;width:12px;height:1px;background:#1a1a1a;"></div>
<div class="r" style="left:1826px;top:13px;width:10px;height:10px;border:1px solid #b4b4b8;border-radius:2px;"></div>
<svg class="r" style="left:1884px;top:12px" width="14" height="14" viewBox="0 0 14 14"><path d="M1 1L13 13M13 1L1 13" stroke="#111" stroke-width="1.1"/></svg>
<div class="r" style="left:1px;top:38px;width:388px;height:136px;background:#1b1c22;"></div>
<div class="r" style="left:1px;top:38px;width:388px;height:19px;background:#292936;"></div>
<div class="r" style="left:9px;top:43px;width:8px;height:2px;background:#fff;"></div>
<div class="r" style="left:8.5px;top:46px;width:0;height:0;border-left:4.5px solid transparent;border-right:4.5px solid transparent;border-top:6.5px solid #fff;"></div>
<div class="t" style="left:28px;top:43.40px;color:#fff;">Performance</div>
<div class="t" style="left:159px;top:67.40px;color:#fff;">FPS: 367.5</div>
<div class="r" style="left:9px;top:82px;width:372px;height:84px;background:#21212b;border-radius:3px;"></div>
<svg class="r" style="left:0;top:0" width="390" height="174"><polyline points="13,85.5 275,85.5 278.3,86.8 281.5,85.5 377,85.5" fill="none" stroke="#9c9c9c" stroke-width="1.4"/></svg>
<div class="r" style="left:389px;top:38px;width:2px;height:831px;background:#372f4a;"></div>
<div class="r" style="left:1px;top:174px;width:388px;height:2px;background:#372f4a;"></div>
<div class="r" style="left:1px;top:176px;width:388px;height:693px;background:#1b1c22;"></div>
<div class="r" style="left:1px;top:176px;width:388px;height:19px;background:#292936;"></div>
<div class="r" style="left:9px;top:181px;width:8px;height:2px;background:#fff;"></div>
<div class="r" style="left:8.5px;top:184px;width:0;height:0;border-left:4.5px solid transparent;border-right:4.5px solid transparent;border-top:6.5px solid #fff;"></div>
<div class="t" style="left:28px;top:181.40px;color:#fff;">Scene Selector</div>
<div class="r" style="left:9px;top:226px;width:136px;height:2px;background:#9b9b9d;"></div>
<div class="r" style="left:245px;top:226px;width:136px;height:2px;background:#9b9b9d;"></div>
<div class="t" style="left:153px;top:222.40px;color:#fff;">Game related</div>
<div class="r" style="left:9px;top:237px;width:120px;height:19px;background:#23232e;border-radius:3px;"></div>
<div class="t" style="left:13px;top:242.40px;color:#fff;">Exit application</div>
<div class="r" style="left:9px;top:283px;width:150px;height:2px;background:#9b9b9d;"></div>
<div class="r" style="left:231px;top:283px;width:150px;height:2px;background:#9b9b9d;"></div>
<div class="t" style="left:167px;top:279.40px;color:#fff;">Polygons</div>
<div class="r" style="left:9px;top:294px;width:148px;height:19px;background:#23232e;border-radius:3px;"></div>
<div class="t" style="left:13px;top:299.40px;color:#fff;">Single Chunk Culling</div>
<div class="r" style="left:9px;top:317px;width:134px;height:19px;background:#838383;border-radius:3px;"></div>
<div class="t" style="left:13px;top:322.40px;color:#fff;">Single Chunk Naive</div>
<div class="r" style="left:9px;top:340px;width:141px;height:19px;background:#23232e;border-radius:3px;"></div>
<div class="t" style="left:13px;top:345.40px;color:#fff;">Single Chunk Greedy</div>
<div class="r" style="left:9px;top:363px;width:190px;height:19px;background:#23232e;border-radius:3px;"></div>
<div class="t" style="left:13px;top:368.40px;color:#fff;">Single Chunk Binary Greedy</div>
<div class="r" style="left:9px;top:386px;width:176px;height:19px;background:#23232e;border-radius:3px;"></div>
<div class="t" style="left:13px;top:391.40px;color:#fff;">Single Chunk Culling GPU</div>
<div class="r" style="left:9px;top:409px;width:141px;height:19px;background:#23232e;border-radius:3px;"></div>
<div class="t" style="left:13px;top:414.40px;color:#fff;">Multi Chunk Culling</div>
<div class="r" style="left:9px;top:432px;width:127px;height:19px;background:#23232e;border-radius:3px;"></div>
<div class="t" style="left:13px;top:437.40px;color:#fff;">Multi Chunk Naive</div>
<div class="r" style="left:9px;top:455px;width:134px;height:19px;background:#23232e;border-radius:3px;"></div>
<div class="t" style="left:13px;top:460.40px;color:#fff;">Multi Chunk Greedy</div>
<div class="r" style="left:9px;top:478px;width:183px;height:19px;background:#23232e;border-radius:3px;"></div>
<div class="t" style="left:13px;top:483.40px;color:#fff;">Multi Chunk Binary Greedy</div>
<div class="r" style="left:9px;top:501px;width:169px;height:19px;background:#23232e;border-radius:3px;"></div>
<div class="t" style="left:13px;top:506.40px;color:#fff;">Multi Chunk Culling GPU</div>
<div class="r" style="left:9px;top:547px;width:154px;height:2px;background:#9b9b9d;"></div>
<div class="r" style="left:228px;top:547px;width:153px;height:2px;background:#9b9b9d;"></div>
<div class="t" style="left:171px;top:543.40px;color:#fff;">Raycast</div>
<div class="r" style="left:9px;top:558px;width:155px;height:19px;background:#23232e;border-radius:3px;"></div>
<div class="t" style="left:13px;top:563.40px;color:#fff;">Single Chunk Textured</div>
<div class="r" style="left:9px;top:581px;width:232px;height:19px;background:#23232e;border-radius:3px;"></div>
<div class="t" style="left:13px;top:586.40px;color:#fff;">Single Chunk Textured Fixed Step</div>
<div class="r" style="left:9px;top:604px;width:246px;height:19px;background:#23232e;border-radius:3px;"></div>
<div class="t" style="left:13px;top:609.40px;color:#fff;">Single Chunk Textured Brickmap Gpu</div>
<div class="r" style="left:9px;top:627px;width:232px;height:19px;background:#23232e;border-radius:3px;"></div>
<div class="t" style="left:13px;top:632.40px;color:#fff;">Single Chunk Textured Octree Gpu</div>
<div class="r" style="left:9px;top:650px;width:148px;height:19px;background:#23232e;border-radius:3px;"></div>
<div class="t" style="left:13px;top:655.40px;color:#fff;">Multi Chunk Textured</div>
<div class="r" style="left:9px;top:673px;width:225px;height:19px;background:#23232e;border-radius:3px;"></div>
<div class="t" style="left:13px;top:678.40px;color:#fff;">Multi Chunk Textured Fixed Step</div>
<div class="r" style="left:9px;top:696px;width:239px;height:19px;background:#23232e;border-radius:3px;"></div>
<div class="t" style="left:13px;top:701.40px;color:#fff;">Multi Chunk Textured Brickmap Gpu</div>
<div class="r" style="left:9px;top:719px;width:225px;height:19px;background:#23232e;border-radius:3px;"></div>
<div class="t" style="left:13px;top:724.40px;color:#fff;">Multi Chunk Textured Octree Gpu</div>
<div class="r" style="left:1px;top:869px;width:1920px;height:2px;background:#372f4a;"></div>
<div class="r" style="left:1px;top:871px;width:1920px;height:247px;background:rgba(27,28,34,0.975);border-radius:0 0 8px 8px;"></div>
<div class="r" style="left:1px;top:871px;width:1418px;height:19px;background:#292936;"></div>
<div class="r" style="left:9px;top:876px;width:8px;height:2px;background:#fff;"></div>
<div class="r" style="left:8.5px;top:879px;width:0;height:0;border-left:4.5px solid transparent;border-right:4.5px solid transparent;border-top:6.5px solid #fff;"></div>
<div class="t" style="left:28px;top:876.40px;color:#fff;">Log Console</div>
<div class="r" style="left:1421px;top:871px;width:250px;height:19px;background:#292936;"></div>
<div class="r" style="left:1429px;top:876px;width:8px;height:2px;background:#fff;"></div>
<div class="r" style="left:1428.5px;top:879px;width:0;height:0;border-left:4.5px solid transparent;border-right:4.5px solid transparent;border-top:6.5px solid #fff;"></div>
<div class="t" style="left:1448px;top:876.40px;color:#fff;">Debug</div>
<div class="r" style="left:1673px;top:871px;width:248px;height:19px;background:#292936;"></div>
<div class="r" style="left:1681px;top:876px;width:8px;height:2px;background:#fff;"></div>
<div class="r" style="left:1680.5px;top:879px;width:0;height:0;border-left:4.5px solid transparent;border-right:4.5px solid transparent;border-top:6.5px solid #fff;"></div>
<div class="t" style="left:1700px;top:876.40px;color:#fff;">Camera</div>
<div class="r" style="left:1419px;top:871px;width:2px;height:247px;background:#372f4a;"></div>
<div class="r" style="left:1671px;top:871px;width:2px;height:247px;background:#372f4a;"></div>
<div class="r" style="left:9px;top:898px;width:43px;height:19px;background:#23232e;border-radius:3px;"></div>
<div class="t" style="left:13px;top:903.40px;color:#fff;">Clear</div>
<div class="r" style="left:1px;top:921px;width:1390px;height:197px;overflow:hidden;">
<div class="t" style="left:8px;top:-8.60px;color:#fff47c;">[2024-09-20 01:09:56.691] [warning] Can not open given shader file: resources/Shaders/Polygons/Chunk.gs of type GeometryShader. Ignoring it.</div>
<div class="t" style="left:8px;top:8.40px;color:#80ff80;">[2024-09-20 01:09:56.692] [info] Number of chunk vertices: 83008</div>
<div class="t" style="left:8px;top:25.40px;color:#80ff80;">[2024-09-20 01:09:56.692] [info] Size in buffer: 1992192 bytes</div>
<div class="t" style="left:8px;top:42.40px;color:#80ff80;">[2024-09-20 01:09:58.072] [info] Wireframe mode is enabled</div>
<div class="t" style="left:8px;top:59.40px;color:#80ff80;">[2024-09-20 01:10:07.144] [info] [StateStack] Clearing the StateStack</div>
<div class="t" style="left:8px;top:76.40px;color:#80ff80;">[2024-09-20 01:10:07.145] [info] [StateStack] Pushing state: PolygonSingleChunkNaiveState</div>
<div class="t" style="left:8px;top:93.40px;color:#fff47c;">[2024-09-20 01:10:07.145] [warning] Can not open given shader file: resources/Shaders/Polygons/Chunk.gs of type GeometryShader. Ignoring it.</div>
<div class="t" style="left:8px;top:110.40px;color:#80ff80;">[2024-09-20 01:10:10.760] [info] Number of chunk vertices: 4187592</div>
<div class="t" style="left:8px;top:127.40px;color:#80ff80;">[2024-09-20 01:10:10.760] [info] Size in buffer: 100502208 bytes</div>
<div class="t" style="left:8px;top:144.40px;color:#80ff80;">[2024-09-20 01:10:12.442] [info] Wireframe mode is enabled</div>
<div class="t" style="left:8px;top:161.40px;color:#80ff80;">[2024-09-20 01:10:12.679] [info] Wireframe mode is disabled</div>
<div class="t" style="left:8px;top:178.40px;color:#80ff80;">[2024-09-20 01:10:13.824] [info] Wireframe mode is enabled</div>
</div>
<div class="r" style="left:1400px;top:1045px;width:8px;height:62px;background:#2c2b37;border-radius:4px;"></div>
<div class="r" style="left:1429px;top:898px;width:120px;height:19px;background:#23232e;border-radius:3px;"></div>
<div class="t" style="left:1433px;top:903.40px;color:#fff;">Switch wireframe</div>
<div class="r" style="left:1681px;top:898px;width:120px;height:19px;background:#23232e;border-radius:3px;"></div>
<div class="t" style="left:1685px;top:903.40px;color:#fff;">Switch to Manual</div>
<div class="r" style="left:1681px;top:921px;width:120px;height:19px;background:#23232e;border-radius:3px;"></div>
<div class="t" style="left:1685px;top:926.40px;color:#fff;">Switch to Static</div>

</body></html>
